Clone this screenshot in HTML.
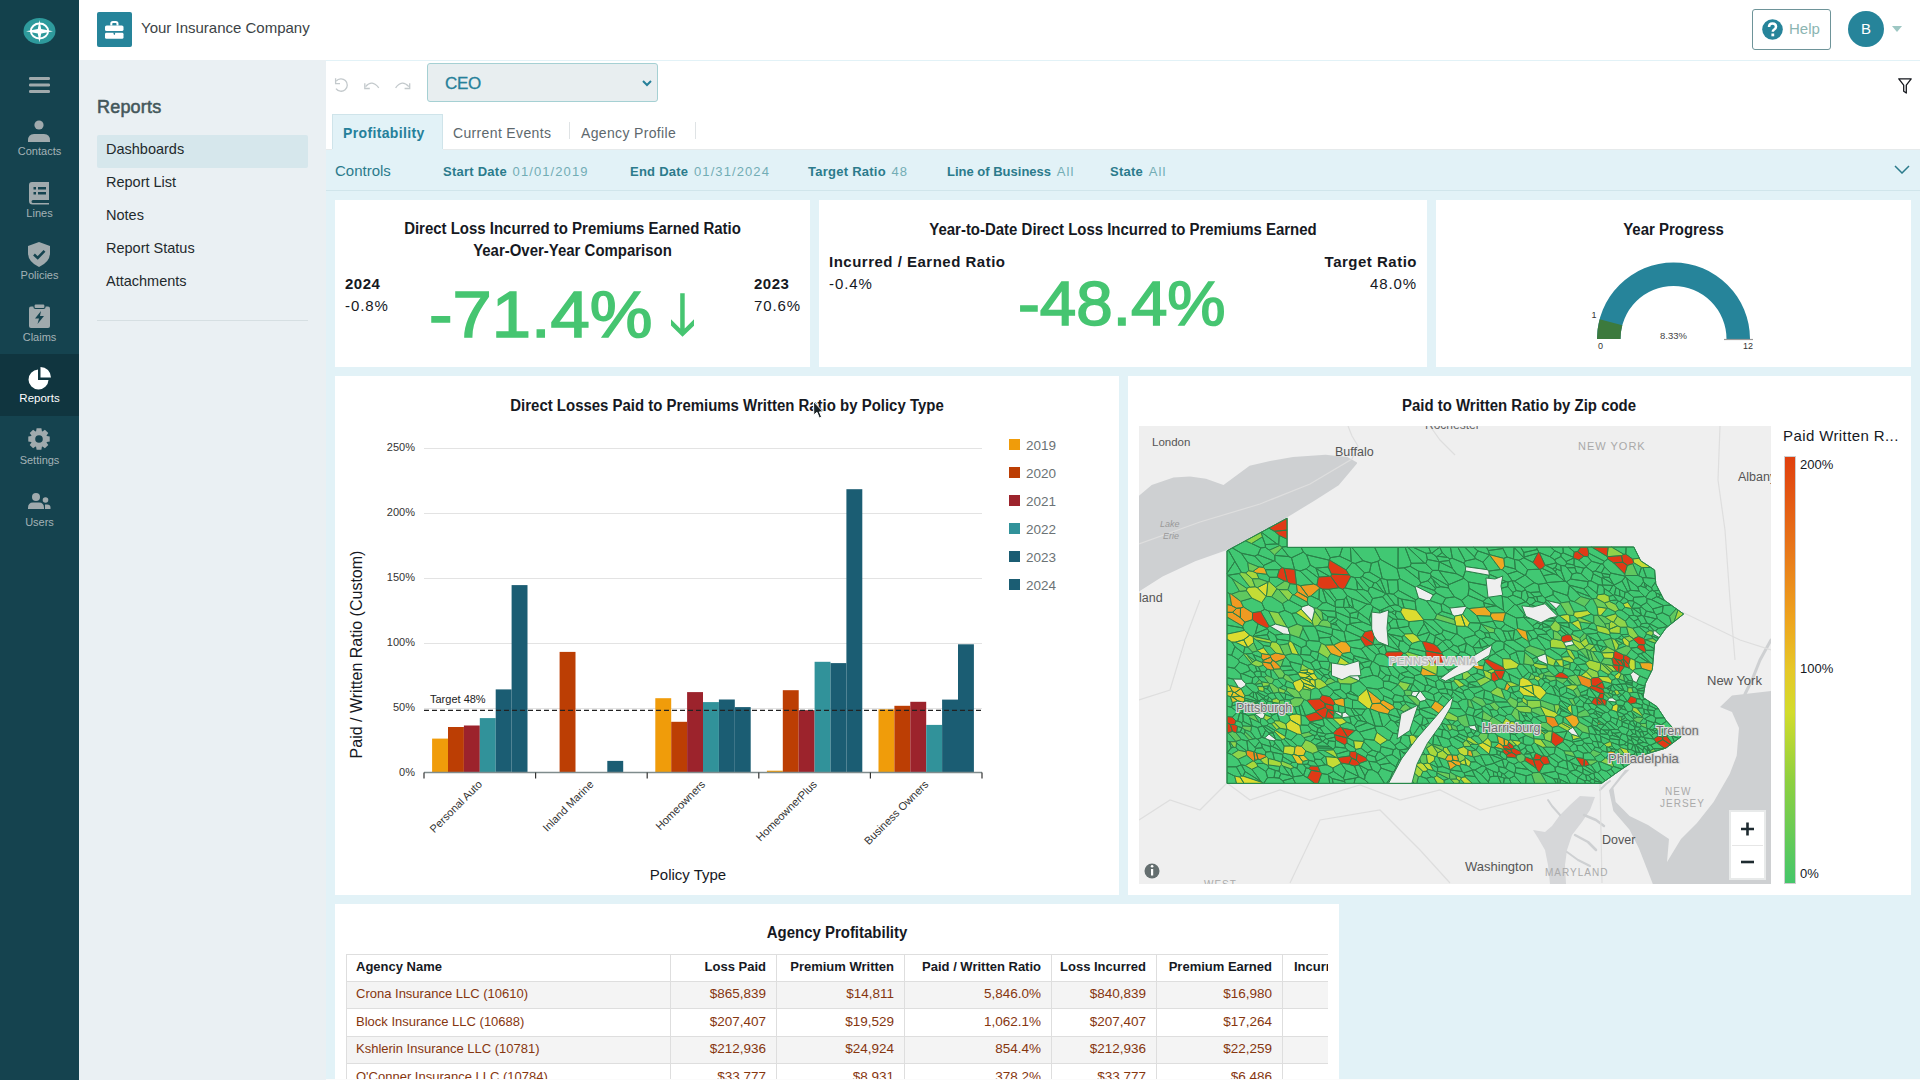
<!DOCTYPE html>
<html><head><meta charset="utf-8">
<style>
*{box-sizing:border-box;margin:0;padding:0}
html,body{width:1920px;height:1080px;overflow:hidden;background:#e2f2f7;font-family:"Liberation Sans",sans-serif;color:#16191f}
.abs{position:absolute}
#side{left:0;top:0;width:79px;height:1080px;background:#15434f}
#side .top{left:0;top:0;width:79px;height:60px;background:#13414c}
.nav{position:absolute;left:0;width:79px;height:62px;text-align:center;color:#a4b2b6;font-size:11px}
.nav.act{background:#10353f;color:#fff}
.nav svg{position:absolute;left:27px;top:8px}
.nav span{position:absolute;left:0;right:0;top:34px}
#hdr{left:79px;top:0;width:1841px;height:61px;background:#fff;border-bottom:1px solid #e3e8ea}
#lnav{left:79px;top:60px;width:247px;height:1020px;background:#eaf0f3}
#main{left:326px;top:60px;width:1594px;height:1020px;background:#e2f2f7}
.lnk{left:27px;font-size:14.5px;color:#1f2a2d}
.tab{font-size:14px;letter-spacing:0.35px;margin-top:1px}
.ctl{top:104px;font-size:13px;color:#2b7b8c;white-space:nowrap}
.ctl b{letter-spacing:0.25px}
.ctl span{color:#72adb5;margin-left:2px;letter-spacing:1.1px}
.kb{font-weight:bold;font-size:15px;color:#16191f;white-space:nowrap;letter-spacing:0.5px}
.kv{font-size:15px;color:#16191f;white-space:nowrap;letter-spacing:0.9px}
.big{color:#46c571;white-space:nowrap;line-height:1}
.lgl{left:672px;font-size:13px;color:#16191f}
.th{font-size:13px;font-weight:bold;color:#16191f;white-space:nowrap}
.td{font-size:13.5px;color:#86360f;white-space:nowrap}
.td.nm{color:#86360f;font-size:13px}
.card{position:absolute;background:#fff}
.ttl{font-weight:bold;font-size:16px;text-align:center;color:#16191f;transform:scaleX(0.935);transform-origin:50% 0}
</style></head>
<body>
<div id="side" class="abs">
  <div class="top abs"></div>
  <svg class="abs" style="left:0;top:0" width="79" height="60" viewBox="0 0 79 60">
    <ellipse cx="39.5" cy="31" rx="16" ry="13" fill="#2e9a9c"/>
    <ellipse cx="39.5" cy="31" rx="8.6" ry="7.6" fill="none" stroke="#fff" stroke-width="2"/>
    <path d="M39.5 20 L41.2 29 L53 31.3 L41.2 33.5 L39.5 42.5 L37.8 33.5 L26 31.3 L37.8 29 Z" fill="#fff"/>
  </svg>
  <svg class="abs" style="left:29px;top:77px" width="21" height="16" viewBox="0 0 21 16">
    <rect x="0" y="0" width="21" height="3" rx="1.2" fill="#a0aaad"/>
    <rect x="0" y="6.5" width="21" height="3" rx="1.2" fill="#a0aaad"/>
    <rect x="0" y="13" width="21" height="3" rx="1.2" fill="#a0aaad"/>
  </svg>
  <div class="nav" style="top:116px">
    <svg style="left:28px;top:4px" width="22" height="23" viewBox="0 0 22 23"><circle cx="11" cy="5" r="4.6" fill="#a0aaad"/><path d="M0 20.5 Q0 14 6 14 L16 14 Q22 14 22 20.5 L22 22 L0 22 Z" fill="#a0aaad"/></svg>
    <span style="top:29px">Contacts</span>
  </div>
  <div class="nav" style="top:178px">
    <svg style="left:29px;top:4px" width="21" height="23" viewBox="0 0 21 23"><path d="M3 0 H20 V18 H4 Q2.5 18 2.5 19.5 Q2.5 21 4 21 H20 V22.5 H3.5 Q0 22.5 0 19 V3 Q0 0 3 0 Z" fill="#a0aaad"/><rect x="4.5" y="5" width="2.5" height="2.5" fill="#15434f"/><rect x="9" y="5" width="8" height="2.5" fill="#15434f"/><rect x="4.5" y="10" width="2.5" height="2.5" fill="#15434f"/><rect x="9" y="10" width="8" height="2.5" fill="#15434f"/></svg>
    <span style="top:29px">Lines</span>
  </div>
  <div class="nav" style="top:240px">
    <svg style="left:28px;top:2px" width="22" height="25" viewBox="0 0 22 25"><path d="M11 0 L22 4 V11 Q22 20 11 25 Q0 20 0 11 V4 Z" fill="#a0aaad"/><path d="M6 12.5 L9.7 16 L16.5 8.8" fill="none" stroke="#15434f" stroke-width="2.6"/></svg>
    <span style="top:29px">Policies</span>
  </div>
  <div class="nav" style="top:302px">
    <svg style="left:29px;top:2px" width="21" height="24" viewBox="0 0 21 24"><rect x="0" y="2.5" width="21" height="21.5" rx="2" fill="#a0aaad"/><rect x="5" y="0" width="11" height="4.5" rx="1.5" fill="#a0aaad" stroke="#15434f" stroke-width="1.2"/><path d="M12 7 L6 14.5 H10 L8.5 20 L15 12 H11 Z" fill="#15434f"/></svg>
    <span style="top:29px">Claims</span>
  </div>
  <div class="nav act" style="top:354px">
    <svg style="left:28px;top:13px" width="23" height="23" viewBox="0 0 23 23"><path d="M10 2.5 A10 10 0 1 0 20.5 13 L10 13 Z" fill="#fff"/><path d="M12.5 0 A10.5 10.5 0 0 1 23 10.5 L12.5 10.5 Z" fill="#fff"/></svg>
    <span style="top:38px;font-size:11.5px">Reports</span>
  </div>
  <div class="nav" style="top:416px">
    <svg style="left:28px;top:12px" width="22" height="22" viewBox="0 0 22 22"><path fill="#a0aaad" fill-rule="evenodd" d="M18.77 8.08 L21.73 8.60 L21.73 13.40 L18.77 13.92 L18.56 14.43 L20.29 16.89 L16.89 20.29 L14.43 18.56 L13.92 18.77 L13.40 21.73 L8.60 21.73 L8.08 18.77 L7.57 18.56 L5.11 20.29 L1.71 16.89 L3.44 14.43 L3.23 13.92 L0.27 13.40 L0.27 8.60 L3.23 8.08 L3.44 7.57 L1.71 5.11 L5.11 1.71 L7.57 3.44 L8.08 3.23 L8.60 0.27 L13.40 0.27 L13.92 3.23 L14.43 3.44 L16.89 1.71 L20.29 5.11 L18.56 7.57ZM14.8 11 A3.8 3.8 0 1 0 7.2 11 A3.8 3.8 0 1 0 14.8 11Z"/></svg>
    <span style="top:38px">Settings</span>
  </div>
  <div class="nav" style="top:478px">
    <svg style="left:28px;top:15px" width="23" height="17" viewBox="0 0 23 17"><circle cx="8" cy="4" r="4" fill="#a0aaad"/><path d="M0 15 Q0 9.5 5 9.5 H11 Q16 9.5 16 15 V16 H0 Z" fill="#a0aaad"/><circle cx="17.5" cy="7" r="2.8" fill="#a0aaad"/><path d="M17 11.5 H19 Q22.5 11.5 22.5 14.5 V16 H17 Z" fill="#a0aaad"/></svg>
    <span style="top:38px">Users</span>
  </div>
</div>
<div id="hdr" class="abs">
  <svg class="abs" style="left:18px;top:12px" width="35" height="35" viewBox="0 0 35 35"><rect width="35" height="35" rx="2" fill="#26849a"/><path d="M14.3 13.5 V11.8 Q14.3 10 16 10 H18.8 Q20.5 10 20.5 11.8 V13.5" fill="none" stroke="#fff" stroke-width="2"/><rect x="8" y="13.4" width="18.5" height="5.6" rx="1.6" fill="#fff"/><rect x="8" y="20.8" width="18.5" height="6" rx="1.4" fill="#fff"/><path d="M16.2 20.6 H18.4 L17.6 23 H17 Z" fill="#26849a"/></svg>
  <div class="abs" style="left:62px;top:19px;font-size:15px;color:#3b4346">Your Insurance Company</div>
  <div class="abs" style="left:1673px;top:9px;width:79px;height:41px;border:1px solid #6e9499;border-radius:3px"></div>
  <svg class="abs" style="left:1683px;top:19px" width="21" height="21" viewBox="0 0 21 21"><circle cx="10.5" cy="10.5" r="10.3" fill="#26849a"/><path d="M7 8 Q7 4.5 10.5 4.5 Q14 4.5 14 7.8 Q14 9.8 11.8 10.8 Q10.8 11.3 10.8 12.8" fill="none" stroke="#fff" stroke-width="2.5"/><rect x="9.4" y="14.5" width="2.8" height="2.8" fill="#fff"/></svg>
  <div class="abs" style="left:1710px;top:20px;font-size:15px;color:#8bb5b2">Help</div>
  <div class="abs" style="left:1769px;top:11px;width:36px;height:36px;border-radius:50%;background:#26849a;color:#fff;font-size:15px;text-align:center;line-height:36px">B</div>
  <svg class="abs" style="left:1813px;top:26px" width="10" height="6" viewBox="0 0 10 6"><path d="M0 0 H10 L5 6 Z" fill="#9dc7c3"/></svg>
</div>
<div id="lnav" class="abs">
  <div class="abs" style="left:18px;top:37px;font-size:18px;color:#44575a;-webkit-text-stroke:0.55px #44575a;letter-spacing:0.2px">Reports</div>
  <div class="abs" style="left:18px;top:75px;width:211px;height:33px;background:#d6e7ec;border-radius:2px"></div>
  <div class="abs lnk" style="top:81px">Dashboards</div>
  <div class="abs lnk" style="top:114px">Report List</div>
  <div class="abs lnk" style="top:147px">Notes</div>
  <div class="abs lnk" style="top:180px">Report Status</div>
  <div class="abs lnk" style="top:213px">Attachments</div>
  <div class="abs" style="left:18px;top:260px;width:211px;height:1px;background:#d6dfe2"></div>
</div>
<div id="main" class="abs">
  <div class="abs" style="left:0;top:1px;width:1594px;height:88px;background:#fff"></div>
  <svg class="abs" style="left:4px;top:14px" width="90" height="20" viewBox="330 74 90 20"><g fill="none" stroke="#c3c9cc" stroke-width="1.3">
    <path d="M336.2 81.2 A6.2 6.2 0 1 1 336.0 88.6"/><path d="M335.6 78.2 V83.6 H340"/>
    <path d="M365.6 86.6 Q372 79 378.8 87.8"/><path d="M364.8 83.2 V88.5 H369.8"/>
    <path d="M395.6 87.8 Q402 79 408.8 86.6"/><path d="M409.7 83.2 V88.5 H404.6"/>
  </g></svg>
  <div class="abs" style="left:101px;top:3px;width:231px;height:39px;background:#e8eef0;border:1px solid #a5d0d3;border-radius:3px"></div>
  <div class="abs" style="left:119px;top:13.5px;font-size:17px;color:#26809a;-webkit-text-stroke:0.3px #26809a;letter-spacing:-0.3px">CEO</div>
  <svg class="abs" style="left:316px;top:20px" width="10" height="7" viewBox="0 0 10 7"><path d="M1 1 L5 5 L9 1" fill="none" stroke="#26809a" stroke-width="2"/></svg>
  <svg class="abs" style="left:1572px;top:18px" width="14" height="16" viewBox="0 0 14 16"><path d="M0.8 0.8 H13.2 L8.3 7.2 V15 L5.7 13.2 V7.2 Z" fill="none" stroke="#16191f" stroke-width="1.3" stroke-linejoin="round"/></svg>
  <div class="abs" style="left:6px;top:54px;width:111px;height:36px;background:#e2f2f7;border:1px solid #cfe4ea;border-bottom:none"></div>
  <div class="abs tab" style="left:17px;top:64px;font-weight:bold;color:#25809a">Profitability</div>
  <div class="abs tab" style="left:127px;top:64px;color:#5d686d">Current Events</div>
  <div class="abs" style="left:243px;top:62px;width:1px;height:17px;background:#dfe3e5"></div>
  <div class="abs tab" style="left:255px;top:64px;color:#5d686d">Agency Profile</div>
  <div class="abs" style="left:369px;top:62px;width:1px;height:17px;background:#dfe3e5"></div>
  <div class="abs" style="left:0;top:89px;width:1594px;height:42px;background:#e2f2f7;border-bottom:1px solid #d0e5eb"></div>
  <div class="abs" style="left:0;top:89px;width:6px;height:1px;background:#e6eaeb"></div>
  <div class="abs" style="left:117px;top:89px;width:1477px;height:1px;background:#e6eaeb"></div>
  <div class="abs" style="left:9px;top:102px;font-size:15px;color:#2b7b8c">Controls</div>
  <div class="abs ctl" style="left:117px"><b>Start Date</b> <span>01/01/2019</span></div>
  <div class="abs ctl" style="left:304px"><b>End Date</b> <span>01/31/2024</span></div>
  <div class="abs ctl" style="left:482px"><b>Target Ratio</b> <span>48</span></div>
  <div class="abs ctl" style="left:621px"><b style="letter-spacing:0">Line of Business</b> <span>All</span></div>
  <div class="abs ctl" style="left:784px"><b>State</b> <span>All</span></div>
  <svg class="abs" style="left:1568px;top:105px" width="16" height="9" viewBox="0 0 16 9"><path d="M1 1 L8 8 L15 1" fill="none" stroke="#2b7b8c" stroke-width="1.5"/></svg>
</div>

<div class="card" style="left:335px;top:200px;width:475px;height:167px">
  <div class="abs ttl" style="left:0;top:18px;width:475px;line-height:22px">Direct Loss Incurred to Premiums Earned Ratio<br>Year-Over-Year Comparison</div>
  <div class="abs kb" style="left:10px;top:75px">2024</div>
  <div class="abs kv" style="left:10px;top:97px">-0.8%</div>
  <div class="abs big" style="left:94px;top:82px;font-size:65px;-webkit-text-stroke:1.6px #46c571;transform:scaleX(1.085);transform-origin:0 0">-71.4%</div>
  <svg class="abs" style="left:0;top:0" width="475" height="167"><path d="M336 119.2 L345.2 128.4 L345.2 93.3 L349.7 93.3 L349.7 128.4 L359 119.2 L359 125.7 L347.5 136.7 L336 125.4 Z" fill="#46c571"/></svg>
  <div class="abs kb" style="left:419px;top:75px">2023</div>
  <div class="abs kv" style="left:419px;top:97px">70.6%</div>
</div>
<div class="card" style="left:819px;top:200px;width:608px;height:167px">
  <div class="abs ttl" style="left:0;top:20.5px;width:608px">Year-to-Date Direct Loss Incurred to Premiums Earned</div>
  <div class="abs kb" style="left:10px;top:53px">Incurred / Earned Ratio</div>
  <div class="abs kv" style="left:10px;top:75px">-0.4%</div>
  <div class="abs big" style="left:199px;top:72px;font-size:63px;-webkit-text-stroke:1.6px #46c571;transform:scaleX(1.04);transform-origin:0 0">-48.4%</div>
  <div class="abs kb" style="right:10px;top:53px;text-align:right">Target Ratio</div>
  <div class="abs kv" style="right:10px;top:75px;text-align:right">48.0%</div>
</div>
<div class="card" style="left:1436px;top:200px;width:475px;height:167px">
  <div class="abs ttl" style="left:0;top:20.5px;width:475px">Year Progress</div>
  <svg class="abs" style="left:0;top:0" width="475" height="167" viewBox="0 0 475 167">
    <path d="M161 139 A76.5 76.5 0 0 1 314 139 L290.5 139 A53 53 0 0 0 184.5 139 Z" fill="#26849a"/>
    <path d="M161 139 A76.5 76.5 0 0 1 163.6 119.2 L186.3 125.3 A53 53 0 0 0 184.5 139 Z" fill="#3c7a3d"/>
    <line x1="288" y1="139.5" x2="317" y2="139.5" stroke="#999" stroke-width="1.2"/>
    <text x="155.5" y="118" font-size="9" fill="#333" font-family="Liberation Sans">1</text>
    <text x="162" y="149" font-size="9" fill="#333" font-family="Liberation Sans">0</text>
    <text x="307" y="149" font-size="9" fill="#333" font-family="Liberation Sans">12</text>
    <text x="237.5" y="139" font-size="9.5" fill="#444" text-anchor="middle" font-family="Liberation Sans">8.33%</text>
  </svg>
</div>
<!--BAR-->
<div class="card" style="left:335px;top:376px;width:784px;height:519px">
  <div class="abs ttl" style="left:0;top:20.5px;width:784px">Direct Losses Paid to Premiums Written Ratio by Policy Type</div>
<svg class="abs" style="left:0;top:0" width="784" height="519" viewBox="0 0 784 519" font-family="Liberation Sans">
<line x1="89" y1="72.5" x2="647" y2="72.5" stroke="#e3e3e3" stroke-width="1"/>
<line x1="89" y1="137.5" x2="647" y2="137.5" stroke="#e3e3e3" stroke-width="1"/>
<line x1="89" y1="202.5" x2="647" y2="202.5" stroke="#e3e3e3" stroke-width="1"/>
<line x1="89" y1="267.5" x2="647" y2="267.5" stroke="#e3e3e3" stroke-width="1"/>
<line x1="89" y1="332.5" x2="647" y2="332.5" stroke="#e3e3e3" stroke-width="1"/>
<text x="80" y="75.0" font-size="11" fill="#333" text-anchor="end">250%</text>
<text x="80" y="140.0" font-size="11" fill="#333" text-anchor="end">200%</text>
<text x="80" y="205.0" font-size="11" fill="#333" text-anchor="end">150%</text>
<text x="80" y="270.0" font-size="11" fill="#333" text-anchor="end">100%</text>
<text x="80" y="335.0" font-size="11" fill="#333" text-anchor="end">50%</text>
<text x="80" y="400.0" font-size="11" fill="#333" text-anchor="end">0%</text>
<rect x="97.1" y="362.6" width="15.9" height="33.4" fill="#f09c0a"/>
<rect x="113.0" y="351.0" width="15.9" height="45.0" fill="#bc3e04"/>
<rect x="128.9" y="349.5" width="15.9" height="46.5" fill="#9c232c"/>
<rect x="144.8" y="342.1" width="15.9" height="54.0" fill="#31929a"/>
<rect x="160.7" y="313.4" width="15.9" height="82.5" fill="#1b5d73"/>
<rect x="176.6" y="209.1" width="15.9" height="186.9" fill="#1b5d73"/>
<rect x="224.6" y="275.9" width="15.9" height="120.1" fill="#bc3e04"/>
<rect x="272.3" y="384.9" width="15.9" height="11.1" fill="#1b5d73"/>
<rect x="320.3" y="322.2" width="15.9" height="73.8" fill="#f09c0a"/>
<rect x="336.2" y="345.8" width="15.9" height="50.2" fill="#bc3e04"/>
<rect x="352.1" y="316.1" width="15.9" height="80.0" fill="#9c232c"/>
<rect x="368.0" y="326.1" width="15.9" height="69.9" fill="#31929a"/>
<rect x="383.9" y="323.5" width="15.9" height="72.5" fill="#1b5d73"/>
<rect x="399.8" y="331.1" width="15.9" height="64.9" fill="#1b5d73"/>
<rect x="431.9" y="394.7" width="15.9" height="1.3" fill="#f09c0a"/>
<rect x="447.8" y="314.2" width="15.9" height="81.8" fill="#bc3e04"/>
<rect x="463.7" y="334.2" width="15.9" height="61.8" fill="#9c232c"/>
<rect x="479.6" y="285.8" width="15.9" height="110.2" fill="#31929a"/>
<rect x="495.5" y="287.1" width="15.9" height="108.9" fill="#1b5d73"/>
<rect x="511.4" y="113.2" width="15.9" height="282.8" fill="#1b5d73"/>
<rect x="543.5" y="333.3" width="15.9" height="62.7" fill="#f09c0a"/>
<rect x="559.4" y="329.8" width="15.9" height="66.2" fill="#bc3e04"/>
<rect x="575.3" y="325.8" width="15.9" height="70.2" fill="#9c232c"/>
<rect x="591.2" y="348.9" width="15.9" height="47.1" fill="#31929a"/>
<rect x="607.1" y="323.6" width="15.9" height="72.4" fill="#1b5d73"/>
<rect x="623.0" y="268.3" width="15.9" height="127.7" fill="#1b5d73"/>
<line x1="89" y1="334.3" x2="647" y2="334.3" stroke="#222" stroke-width="1.2" stroke-dasharray="5,3"/>
<text x="95" y="327.3" font-size="11" fill="#222">Target 48%</text>
<line x1="89" y1="396.6" x2="647" y2="396.6" stroke="#7f8c8d" stroke-width="1.5"/>
<line x1="89.0" y1="396.6" x2="89.0" y2="402.6" stroke="#333" stroke-width="1.2"/>
<line x1="200.6" y1="396.6" x2="200.6" y2="402.6" stroke="#333" stroke-width="1.2"/>
<line x1="312.2" y1="396.6" x2="312.2" y2="402.6" stroke="#333" stroke-width="1.2"/>
<line x1="423.8" y1="396.6" x2="423.8" y2="402.6" stroke="#333" stroke-width="1.2"/>
<line x1="535.4" y1="396.6" x2="535.4" y2="402.6" stroke="#333" stroke-width="1.2"/>
<line x1="647.0" y1="396.6" x2="647.0" y2="402.6" stroke="#333" stroke-width="1.2"/>
<text transform="translate(147.8,409) rotate(-45)" font-size="11" fill="#333" text-anchor="end">Personal Auto</text>
<text transform="translate(259.4,409) rotate(-45)" font-size="11" fill="#333" text-anchor="end">Inland Marine</text>
<text transform="translate(371.0,409) rotate(-45)" font-size="11" fill="#333" text-anchor="end">Homeowners</text>
<text transform="translate(482.6,409) rotate(-45)" font-size="11" fill="#333" text-anchor="end">HomeownerPlus</text>
<text transform="translate(594.2,409) rotate(-45)" font-size="11" fill="#333" text-anchor="end">Business Owners</text>
<rect x="674" y="63.0" width="11" height="11" fill="#f09c0a"/>
<text x="691" y="73.5" font-size="13.5" fill="#6b7275">2019</text>
<rect x="674" y="91.0" width="11" height="11" fill="#bc3e04"/>
<text x="691" y="101.5" font-size="13.5" fill="#6b7275">2020</text>
<rect x="674" y="119.0" width="11" height="11" fill="#9c232c"/>
<text x="691" y="129.5" font-size="13.5" fill="#6b7275">2021</text>
<rect x="674" y="147.0" width="11" height="11" fill="#31929a"/>
<text x="691" y="157.5" font-size="13.5" fill="#6b7275">2022</text>
<rect x="674" y="175.0" width="11" height="11" fill="#1b5d73"/>
<text x="691" y="185.5" font-size="13.5" fill="#6b7275">2023</text>
<rect x="674" y="203.0" width="11" height="11" fill="#1b5d73"/>
<text x="691" y="213.5" font-size="13.5" fill="#6b7275">2024</text>
<text transform="translate(27,278.5) rotate(-90)" font-size="16" fill="#16191f" text-anchor="middle">Paid / Written Ratio (Custom)</text>
<text x="353" y="504" font-size="15" fill="#16191f" text-anchor="middle">Policy Type</text>
</svg>
</div>
<!--/BAR-->
<!--MAP-->
<div class="card" style="left:1128px;top:376px;width:783px;height:519px">
  <div class="abs ttl" style="left:0;top:20.5px;width:782px">Paid to Written Ratio by Zip code</div>
<svg class="abs" style="left:11px;top:50px" width="632" height="458" viewBox="0 0 632 458" font-family="Liberation Sans">
<defs><clipPath id="pac"><polygon points="88.0,124.8 148.1,92.2 148.1,121.4 494.8,121.0 501.7,134.8 515.6,144.0 516.8,158.0 525.0,174.0 544.6,188.0 527.0,202.0 515.6,218.0 513.3,243.6 506.4,257.5 504.0,271.4 518.0,280.7 527.0,294.5 542.0,310.8 527.0,322.0 504.0,329.0 483.0,343.0 462.4,357.4 88.0,357.4"/></clipPath></defs>
<rect width="632" height="458" fill="#efefef"/>
<polygon points="-0.3,70.0 12.7,59.0 34.5,51.6 51.0,50.5 67.0,52.7 84.5,59.0 110.6,39.7 131.0,35.0 154.0,31.0 186.6,28.8 208.4,31.0 218.0,36.4 218.0,37.5 199.7,59.2 175.8,74.4 147.5,91.8 112.7,115.7 86.6,124.4 56.2,135.3 23.6,150.5 -0.3,165.7" fill="#ced0d2"/>
<polygon points="632.0,265.0 593.0,269.6 581.0,281.0 593.0,286.0 600.0,302.0 597.7,329.8 590.7,348.0 574.6,376.0 558.0,397.0 542.0,413.0 528.0,436.0 530.0,413.0 509.0,399.0 490.6,390.0 476.7,376.0 474.4,362.0 483.8,350.6 490.6,343.6 486.0,344.0 470.0,364.5 474.4,385.0 490.6,403.8 500.0,422.5 509.0,445.5 513.8,458.0 632.0,458.0" fill="#ced0d2"/>
<polygon points="456.0,371.0 451.0,384.0 443.0,396.0 433.0,409.0 428.0,424.0 426.0,439.0 427.0,458.0 411.0,458.0 409.0,439.0 406.0,424.0 399.0,412.0 394.0,404.0 406.0,406.0 413.0,400.0 421.0,389.0 431.0,379.0 441.0,370.0" fill="#d6d7d9"/>
<polyline points="445.0,389.0 457.0,394.0 465.0,400.0" fill="none" stroke="#ced0d2" stroke-width="2.5" stroke-linejoin="round" stroke-linecap="round"/>
<polyline points="436.0,409.0 449.0,416.0 457.0,424.0" fill="none" stroke="#ced0d2" stroke-width="2.5" stroke-linejoin="round" stroke-linecap="round"/>
<polyline points="428.0,426.0 439.0,434.0 451.0,440.0" fill="none" stroke="#ced0d2" stroke-width="2" stroke-linejoin="round" stroke-linecap="round"/>
<polyline points="421.0,389.0 413.0,380.0 409.0,374.0" fill="none" stroke="#ced0d2" stroke-width="2" stroke-linejoin="round" stroke-linecap="round"/>
<polyline points="461.0,364.0 467.0,358.0 471.0,355.0" fill="none" stroke="#ced0d2" stroke-width="2" stroke-linejoin="round" stroke-linecap="round"/>
<polyline points="632.0,214.0 621.0,234.0 613.0,254.0 606.0,268.0" fill="none" stroke="#ced0d2" stroke-width="3" stroke-linejoin="round" stroke-linecap="round"/>
<polyline points="0.0,274.0 31.0,264.0 46.0,214.0 61.0,174.0" fill="none" stroke="#dedede" stroke-width="1.2"/>
<polyline points="88.0,357.0 111.0,374.0 141.0,364.0 171.0,374.0 221.0,359.0 261.0,374.0 301.0,364.0 341.0,384.0 381.0,374.0 421.0,364.0" fill="none" stroke="#dedede" stroke-width="1.2"/>
<polyline points="151.0,457.0 181.0,394.0 241.0,384.0 281.0,424.0 311.0,457.0" fill="none" stroke="#dedede" stroke-width="1.2"/>
<polyline points="0.0,394.0 31.0,374.0 61.0,384.0 88.0,357.0" fill="none" stroke="#dedede" stroke-width="1.2"/>
<polyline points="461.0,357.0 463.0,457.0" fill="none" stroke="#dedede" stroke-width="1.2"/>
<polyline points="543.0,186.0 601.0,214.0 632.0,224.0" fill="none" stroke="#dedede" stroke-width="1.2"/>
<polyline points="581.0,0.0 579.0,54.0 586.0,104.0 591.0,174.0 596.0,234.0" fill="none" stroke="#dedede" stroke-width="1.2"/>
<polyline points="291.0,0.0 301.0,14.0 316.0,29.0" fill="none" stroke="#dedede" stroke-width="1.2"/>
<polyline points="0.0,118.0 61.0,96.0 121.0,78.0 171.0,58.0 213.0,33.0 219.0,20.0 213.0,10.0 209.0,0.0" fill="none" stroke="#dedede" stroke-width="1.2"/>
<g stroke="#2a8048" stroke-width="1" stroke-linejoin="round">
<path d="M400.8 165.8 399.4 158.3 395.3 156.7 385.5 162.0 386.2 164.1 387.4 165.1 391.1 166.5ZM452.7 276.0 455.3 272.1 449.6 270.6 449.6 272.8ZM244.4 255.2 249.8 255.3 250.9 249.6 247.3 249.1 242.9 253.4ZM306.7 172.0 315.5 170.9 309.4 161.9 301.8 160.7 297.4 161.7 296.4 162.2 295.6 164.6 297.3 167.1ZM506.9 206.7 500.1 200.8 499.1 200.8 493.6 202.3 499.5 210.4 504.9 212.6 507.5 208.0ZM406.4 175.9 404.6 177.1 404.1 183.5 413.2 182.9ZM138.7 286.3 138.7 286.3 138.1 287.2 140.7 295.0 146.9 298.0 151.5 294.0 150.0 289.7 146.3 287.4 143.3 286.8ZM445.0 339.8 443.0 340.2 443.9 342.6 452.8 347.5 454.8 347.2 456.1 346.4 446.4 340.2ZM274.6 338.7 274.7 337.8 271.7 335.8 269.4 335.5 262.4 342.9 263.4 343.4ZM504.3 277.5 503.1 279.1 503.3 282.0 504.8 283.1 508.3 284.0 508.8 283.9 509.1 279.5ZM201.4 263.3 201.4 257.6 199.2 256.0 196.7 255.6 187.8 258.9 188.0 259.7 194.2 264.5ZM126.2 329.0 127.3 330.6 129.3 332.5 135.4 333.9 133.7 326.3 131.7 325.6 126.9 326.0ZM287.5 322.0 283.5 319.6 280.7 322.0 280.9 322.3 286.2 328.5 287.3 328.7 290.7 328.4ZM414.6 239.9 420.8 239.8 416.8 234.5ZM427.9 254.2 423.8 257.7 426.5 260.2 426.6 260.2 432.5 258.9ZM507.5 208.0 504.9 212.6 505.6 213.5 506.4 213.6 513.9 212.6 512.5 209.8 512.3 209.6ZM368.8 276.0 368.1 274.7 365.9 273.0 353.3 268.1 355.3 275.6 355.4 275.9ZM291.0 357.4 298.3 357.4 294.9 351.5 292.3 350.9 287.3 352.4ZM303.8 177.6 310.8 182.1 326.3 180.4 322.5 174.3 315.5 170.9 306.7 172.0ZM366.1 198.2 364.3 195.6 354.3 194.4 354.2 195.2 357.7 201.8 361.5 203.0ZM519.3 310.0 523.5 311.5 524.8 310.7 520.8 307.9 518.4 307.8 518.3 307.8ZM97.6 306.3 96.8 306.6 102.4 313.5 107.9 314.9 109.2 314.5 110.1 313.8 105.2 308.2 101.3 306.0ZM373.0 154.7 373.1 154.6 368.6 148.1 363.3 143.7 361.5 143.5 349.7 145.1 350.3 148.2 367.2 155.6 369.0 156.1ZM341.3 329.4 346.6 339.4 355.2 337.3 355.2 336.9 350.6 328.9 350.3 328.6 341.6 328.7ZM439.1 351.5 430.9 346.2 427.3 349.4 431.3 357.4 437.4 357.4 439.1 351.6ZM393.5 213.0 388.1 205.1 387.1 205.1 389.4 215.4 389.7 215.7ZM459.3 335.9 462.2 343.6 467.4 345.3 472.0 343.1 473.5 340.7 461.9 335.8ZM401.7 198.4 399.0 202.6 402.5 203.3 404.4 201.3 403.2 198.0ZM463.1 159.2 465.2 162.5 470.3 165.7 473.8 159.4 463.6 159.0ZM135.0 351.6 128.6 351.6 124.6 357.4 145.4 357.4 143.8 354.7 140.0 352.1ZM455.3 331.3 456.9 334.1 458.4 335.3 459.3 335.9 461.9 335.8 466.3 332.1 461.7 327.9ZM368.3 264.8 371.6 266.7 373.6 266.9 374.5 266.4 372.1 260.8 371.1 260.5ZM160.6 229.1 164.1 234.1 171.9 236.9 176.9 234.0 171.2 229.2 161.8 228.4ZM306.2 333.4 299.4 331.3 303.7 340.6 311.2 343.7 311.2 343.7 308.5 335.0ZM188.9 190.7 197.0 191.5 197.2 191.5 196.8 185.9 196.5 185.3 180.9 184.1 183.0 186.3ZM428.1 305.3 424.8 312.8 425.0 313.0 433.0 315.5 433.8 313.7 432.7 308.2 428.7 304.9 428.3 304.9ZM420.0 352.5 421.2 353.4 429.3 357.4 431.3 357.4 427.3 349.4 419.0 347.3ZM394.8 312.7 395.0 312.8 401.9 313.4 405.7 313.6 404.9 308.5 398.0 303.7 396.0 302.8 394.1 304.7ZM320.1 307.8 317.6 309.9 326.7 314.6 327.3 314.4 327.5 314.0 328.4 311.4ZM304.5 256.2 299.8 253.6 296.5 255.8 297.4 261.8 299.4 263.6 306.6 262.6ZM491.5 164.3 488.7 165.6 488.4 166.1 494.6 171.3 505.6 170.5 500.0 165.0ZM245.5 357.4 247.5 357.4 251.6 351.9 253.7 346.1 242.2 342.1 238.9 347.0ZM209.9 338.2 202.1 337.0 202.0 337.4 207.0 344.4 219.5 350.5 215.5 340.0ZM234.3 235.6 237.5 228.6 227.2 220.3 226.3 220.1 222.2 223.0 229.7 233.6 231.2 234.6 233.2 235.5ZM179.3 151.9 167.2 142.8 161.1 145.0 174.7 158.1 177.9 159.3ZM308.9 267.9 307.8 263.1 306.6 262.6 299.4 263.6 299.9 265.9 301.3 267.1ZM417.6 143.1 416.3 145.7 418.6 149.3 425.7 155.2 426.2 155.3 422.2 144.9ZM234.1 180.8 231.5 178.3 228.1 178.1 219.0 185.4 219.0 185.6 219.5 186.2 230.0 194.0ZM449.4 349.3 452.8 347.5 443.9 342.6 443.8 347.5 446.8 349.0ZM296.0 192.8 294.1 193.8 304.3 203.9 316.9 208.1 318.1 208.0 317.6 200.0 316.5 198.8ZM429.1 284.1 419.7 278.7 420.8 281.2 421.4 282.0 427.5 286.1 432.8 288.8 433.3 288.7 433.2 288.5ZM211.2 325.5 216.2 325.6 216.8 323.3 215.7 321.8 208.0 317.1 205.6 318.7 206.6 322.1 209.4 324.6ZM367.6 214.4 372.9 214.2 369.0 205.3 363.9 204.9ZM507.8 302.2 508.3 302.7 510.0 302.7 510.2 302.7 514.8 297.9 514.6 296.7 507.6 294.2 507.2 297.4ZM188.9 190.7 183.0 186.3 184.2 194.0 188.4 194.4ZM401.5 289.7 392.3 285.4 391.8 286.9 394.4 290.8 396.1 291.4ZM217.5 304.3 220.3 306.1 235.9 301.9 236.2 300.1 236.1 300.0 228.4 296.7 216.2 301.4ZM128.1 202.1 119.0 197.8 116.3 207.6 128.3 202.6ZM286.7 215.7 294.7 218.1 296.4 210.7 295.5 209.6 291.1 207.1ZM183.9 250.4 181.7 253.5 185.9 256.8 189.1 252.7 184.6 250.0ZM355.5 276.1 360.3 281.2 361.5 281.5 372.4 280.1 368.8 276.0 355.4 275.9ZM366.1 198.2 361.5 203.0 363.9 204.9 369.0 205.3 375.4 204.4 376.5 203.6ZM124.0 272.6 119.3 275.2 127.6 279.0 127.7 276.7ZM377.4 203.5 378.7 202.5 377.3 191.9 367.0 186.9 366.5 186.8 364.3 195.6 366.1 198.2 376.5 203.6ZM421.3 200.1 421.2 204.1 427.5 208.7 430.4 208.9ZM377.3 191.9 378.7 202.5 387.1 205.1 388.1 205.1 394.8 204.2 395.2 202.4 393.5 199.9 384.6 191.4ZM375.4 204.4 374.0 214.2 374.9 214.6 383.1 211.2 377.4 203.5 376.5 203.6ZM214.9 231.7 214.8 229.7 211.5 226.1 203.4 227.4 202.4 229.3 214.3 234.3ZM438.3 270.8 437.6 270.8 433.9 272.8 436.5 278.7 441.1 273.3 439.2 271.0ZM209.7 177.7 207.1 171.1 205.3 173.3 204.5 181.4 204.7 181.5 210.6 181.3ZM150.7 235.6 152.0 240.2 154.7 243.9 159.1 247.1 160.4 246.4 161.5 244.6 162.5 238.6ZM432.4 279.4 433.8 279.0 429.2 272.6 421.5 269.9 420.1 270.6 421.5 274.3 431.2 279.0ZM492.3 311.5 498.7 315.4 499.8 312.5 499.8 311.3 499.7 311.2 491.4 310.4ZM493.6 287.0 498.3 291.2 503.7 291.5 503.4 290.6 493.2 284.4 492.1 285.3ZM462.2 290.0 464.2 287.5 456.2 284.7 456.2 285.2 458.0 287.4ZM444.9 162.8 430.2 159.1 430.3 159.5 437.1 165.3 451.0 170.6ZM254.4 323.6 253.1 328.6 260.3 333.7 262.1 333.2 260.3 323.9 257.5 322.5ZM486.8 128.2 487.1 121.0 472.4 121.0 484.8 128.4ZM103.4 247.7 113.7 251.8 116.8 250.2 114.6 246.5 111.4 244.4ZM406.8 205.7 412.2 202.8 411.4 200.9 404.4 201.3 402.5 203.3ZM510.7 165.5 513.5 164.5 512.5 161.8 508.1 159.1 506.6 161.9ZM486.0 166.2 480.4 163.5 480.9 170.2 484.5 171.7 485.2 171.6ZM317.6 309.9 314.0 311.4 323.8 316.9 326.7 314.6ZM252.6 248.9 248.8 241.0 240.5 239.5 241.2 244.0 247.3 249.1 250.9 249.6ZM480.6 311.7 480.8 311.8 482.8 307.6 481.7 306.4 475.0 307.3ZM443.4 314.1 445.1 316.7 446.8 317.3 453.2 317.6 453.9 315.3 450.5 311.3 443.1 313.4ZM390.0 246.1 383.8 251.5 389.3 253.7 392.5 247.7 392.5 247.7ZM360.1 345.2 358.2 346.6 358.9 350.3 359.1 350.4 362.4 351.1 363.0 347.1ZM501.2 200.0 500.1 200.8 506.9 206.7 510.6 204.7 508.5 202.2ZM459.1 271.8 461.2 267.4 450.2 261.6 450.0 261.7 457.5 271.7 457.6 271.8ZM398.9 127.1 399.9 126.3 398.3 123.5 384.8 126.5 385.1 131.1ZM197.5 173.8 189.9 163.2 184.1 163.0 196.1 176.3ZM478.7 285.6 485.1 288.5 488.2 287.6 489.0 285.8 487.1 284.1 482.3 282.7ZM498.5 266.4 494.1 266.4 490.1 266.9 491.7 270.1 497.8 272.7 501.2 273.0 498.7 266.7ZM383.8 251.5 390.0 246.1 383.3 238.4 381.1 238.2 379.9 238.3 377.8 242.0 383.8 251.5ZM509.3 307.2 512.3 309.6 514.5 307.6 510.0 302.7 508.3 302.7 508.2 305.6ZM475.4 265.4 476.7 263.8 473.1 258.4 472.6 258.9 471.6 262.5 471.8 264.5 473.7 265.2ZM398.0 212.0 393.5 213.0 389.7 215.7 391.1 219.8 405.5 224.7 406.9 223.6ZM164.5 349.5 168.4 351.8 172.4 344.3 169.3 342.3 167.1 341.8ZM267.0 242.5 270.5 239.4 272.8 234.0 266.2 227.4 264.6 227.2 257.0 236.5ZM308.1 232.6 305.9 232.1 302.5 238.7 309.0 244.2 321.4 239.8ZM298.6 188.3 315.5 193.6 315.7 190.2 313.2 188.5 303.0 185.4ZM113.0 257.2 106.7 257.6 106.7 259.4 113.9 265.8 114.4 266.0 116.6 266.7 117.4 266.6 118.5 266.2 119.9 264.5 118.5 260.5 116.0 258.4ZM136.6 304.5 146.2 310.4 147.6 303.3 140.8 302.2 137.5 303.5ZM507.4 185.0 515.4 186.9 513.8 182.9 507.8 176.5 501.9 179.8 502.0 180.7ZM510.2 198.0 508.0 197.1 502.3 197.8 501.2 200.0 508.5 202.2 510.7 199.8ZM389.4 215.4 383.1 211.2 374.9 214.6 386.3 222.2 391.1 219.8 389.7 215.7ZM394.4 290.8 391.8 286.9 385.9 286.5 388.5 290.6 392.2 294.2ZM152.0 314.1 158.4 307.9 148.0 303.1 147.6 303.3 146.2 310.4 146.5 311.9ZM206.7 204.6 205.0 205.7 207.1 215.6 221.9 213.5 221.9 211.3ZM521.6 209.6 527.0 202.0 528.6 200.7 519.4 202.3 516.4 205.0ZM505.2 309.8 509.3 307.2 508.2 305.6 503.8 305.4 503.4 305.6ZM507.6 294.2 514.6 296.7 516.1 296.2 516.8 292.1 514.8 290.0 511.9 288.9 505.6 292.8ZM120.0 296.3 121.3 297.0 121.7 292.4 116.5 288.6 115.2 288.8ZM177.2 286.0 176.8 285.0 167.8 274.5 165.1 273.5 162.2 278.4 166.5 289.6ZM297.4 261.8 296.5 255.8 286.3 251.4 289.0 258.9 293.8 260.9ZM387.2 176.0 389.3 171.4 387.4 165.1 386.2 164.1 382.8 165.5 382.4 172.5 386.6 175.8ZM93.2 152.7 88.8 149.3 88.0 149.1 88.0 166.3 90.6 167.6 92.4 168.3 100.6 165.3ZM330.4 340.6 333.4 343.9 335.9 344.0 343.3 339.9 336.9 335.8 332.0 335.9ZM415.8 124.8 422.0 127.7 424.3 126.9 423.9 121.1 411.7 121.1ZM503.9 324.3 504.4 328.1 505.1 328.7 508.6 327.6 508.1 324.4 504.9 321.6ZM399.0 193.8 400.8 193.3 400.7 191.3 399.2 189.1 390.8 185.4 385.3 188.5 384.7 191.2ZM257.2 193.5 259.5 201.9 269.7 200.3 270.0 195.6 266.3 193.7 258.7 193.1ZM450.2 210.7 458.1 215.1 462.2 213.9 458.0 207.3 447.1 208.2 447.4 208.7ZM481.7 306.4 479.3 303.7 476.2 303.4 471.4 303.7 472.8 306.1 475.0 307.3ZM155.4 281.0 157.8 288.1 161.9 289.2 162.0 289.2 160.0 280.0ZM244.9 218.1 240.6 206.3 236.7 204.4 234.1 217.3 234.6 218.5ZM356.9 179.8 346.3 181.4 352.0 187.1 366.3 186.7 364.6 184.3 357.0 179.8ZM292.8 127.2 291.9 127.0 287.1 127.3 288.3 133.4 300.2 135.8 300.2 135.7 297.2 130.5ZM517.3 282.9 519.3 282.7 518.0 280.7 510.3 275.6 510.5 279.7ZM464.4 151.0 470.4 151.4 470.8 148.6 463.0 147.4ZM116.1 321.4 109.2 314.5 107.9 314.9 109.0 324.4 114.8 325.8 115.5 325.9 116.9 322.3ZM215.7 289.7 218.7 289.4 220.2 288.9 214.1 282.5 213.5 282.3 211.8 282.5ZM447.4 141.2 444.9 142.2 442.2 147.7 449.9 154.9 452.1 154.9 454.3 147.8 453.5 145.6ZM502.5 299.9 501.0 297.7 500.5 297.1 498.0 296.2 496.7 300.7 496.7 300.7 500.6 301.2ZM475.8 329.0 470.6 328.4 474.9 333.5 477.9 333.8 478.6 330.4ZM98.5 285.9 92.2 281.2 88.0 280.2 88.0 290.6 93.2 291.2ZM298.0 346.8 297.8 349.8 304.9 354.4 309.6 352.6ZM334.7 331.0 336.9 335.8 343.3 339.9 345.8 340.3 346.6 339.4 341.3 329.4ZM458.4 315.8 460.1 321.9 460.9 322.2 465.0 318.1 462.3 316.2 458.6 315.7ZM131.2 200.3 130.3 200.4 128.1 202.1 128.3 202.6 129.8 205.0 136.2 209.1 144.2 207.9ZM146.8 268.0 155.2 271.1 147.2 264.6 146.9 264.6 144.9 267.2ZM299.7 290.6 299.2 292.4 300.3 295.5 301.6 296.5 307.3 298.8 311.8 298.8 312.0 298.6 308.2 293.5 301.6 288.9ZM351.7 162.1 349.0 159.6 329.3 155.9 330.1 162.2 347.3 172.3 349.8 171.5 354.0 164.4ZM451.9 197.5 448.5 201.9 458.3 204.7 457.1 199.4 454.9 196.9 453.9 197.1ZM302.7 311.0 303.5 303.8 296.3 301.9 295.1 308.4 295.3 308.8 298.1 310.1ZM188.7 232.1 179.9 226.9 178.0 234.3 179.7 235.3 189.7 235.5ZM145.8 248.3 149.0 249.4 159.2 247.9 159.1 247.1 154.7 243.9 143.5 244.8ZM369.7 344.5 375.3 347.0 376.2 346.7 376.7 341.7 375.1 338.3 369.5 335.7 366.5 342.2ZM149.0 249.4 154.9 255.7 161.4 253.2 161.4 251.7 161.3 251.2 159.2 247.9ZM459.4 298.2 458.1 300.2 461.9 303.2 461.9 303.2 465.5 298.9 461.8 298.3ZM179.1 302.2 177.8 306.0 184.9 307.4 180.7 301.7ZM384.1 311.0 387.0 309.4 381.2 305.4 375.8 308.5 379.6 312.9ZM121.3 297.0 123.3 300.0 123.9 300.2 124.7 300.2 128.0 299.6 129.6 297.5 127.6 294.6 124.4 292.3 121.7 292.4ZM321.2 225.7 325.6 226.4 327.4 217.2 327.3 217.2 318.7 220.5ZM418.0 137.5 416.5 141.6 417.6 143.1 422.2 144.9 421.8 139.4ZM306.5 284.6 318.6 291.0 327.1 288.7 327.6 288.3 326.6 286.8 322.3 282.8 306.0 282.0ZM95.9 135.4 89.4 124.1 88.0 124.8 88.0 147.4ZM135.2 296.5 135.7 294.8 132.2 291.6 127.6 294.6 129.6 297.5 132.4 297.6ZM446.4 357.4 452.8 357.4 450.4 355.1 447.7 354.2 445.7 354.8ZM437.4 357.4 446.4 357.4 445.7 354.8 439.1 351.6ZM403.8 247.6 410.1 245.1 408.0 242.3 400.7 242.9 403.5 247.5ZM135.7 294.8 140.7 295.0 138.1 287.2 133.1 289.2 131.9 291.1 132.2 291.6ZM198.0 199.3 196.6 196.4 192.7 197.8ZM345.4 206.8 347.2 211.3 351.3 211.8 349.8 207.0ZM446.9 237.8 447.2 236.3 439.7 231.6 436.4 232.3 434.3 233.6 434.7 236.3 438.2 238.8ZM147.5 278.8 144.4 280.6 145.7 284.2 150.7 281.1 150.7 280.1ZM448.4 272.9 445.9 276.9 449.1 277.8 453.0 277.3 452.7 276.0 449.6 272.8ZM456.3 145.1 462.4 146.9 465.6 140.9 463.7 137.9 461.8 137.9ZM489.9 254.5 494.0 255.0 494.0 255.0 491.4 248.3 485.3 248.9ZM281.1 298.9 281.1 299.0 286.9 308.5 294.8 309.0 295.3 308.8 295.1 308.4 285.0 299.4 282.7 299.0ZM90.9 315.8 90.2 315.7 92.2 321.9 94.7 321.2ZM409.0 174.8 407.2 174.2 406.4 175.9 413.2 182.9 416.5 184.6 417.1 182.8ZM325.9 259.3 320.3 261.2 324.4 264.6 329.7 262.8 329.5 261.5 329.0 260.9ZM225.2 241.7 222.2 237.5 213.7 239.3 213.5 239.7 214.3 242.2 218.0 246.7ZM208.1 169.5 207.1 171.1 209.7 177.7 213.9 181.9 214.4 182.0 212.4 172.1ZM342.0 260.7 344.9 263.7 345.6 264.1 351.6 266.0 358.2 261.3 355.3 255.6 352.4 253.9 341.6 260.0ZM333.9 289.9 336.0 283.9 335.0 282.6 329.3 280.5 326.6 286.8 327.6 288.3ZM436.1 344.0 437.0 344.0 438.8 339.8 432.1 336.6ZM507.9 172.5 512.4 173.6 517.7 170.7 517.2 167.1 515.1 165.1 513.5 164.5 510.7 165.5 506.6 171.1ZM128.0 299.6 124.7 300.2 134.3 306.5 135.7 305.8 136.2 304.6ZM493.7 133.1 500.4 132.2 494.8 121.0 487.1 121.0 486.8 128.2ZM461.8 298.3 465.5 298.9 465.9 298.7 465.9 298.7 459.2 294.2 459.5 296.1ZM120.4 283.1 113.9 281.4 117.0 287.4 124.0 286.5ZM439.2 227.6 449.5 233.2 440.3 223.9 438.1 225.2ZM349.7 357.4 362.1 357.4 359.1 350.4 358.9 350.3 354.7 350.3 351.1 350.8 349.4 356.1ZM189.6 349.6 193.2 352.5 205.6 355.6 205.4 353.9 204.4 352.2 194.5 345.4 188.4 348.5ZM488.6 320.1 489.0 323.3 492.4 323.7 494.5 318.5 489.2 317.0ZM522.4 168.9 519.9 164.0 515.1 165.1 517.2 167.1 521.6 168.7ZM167.6 128.8 190.3 134.2 190.5 134.1 191.2 131.7 185.9 121.4 162.1 121.4 164.4 126.1ZM162.1 299.0 160.8 299.4 162.4 307.7 169.6 306.2 172.5 303.8 168.9 299.3ZM334.9 318.1 331.4 318.6 331.6 320.4 336.9 324.0 339.7 319.4 339.6 318.6ZM133.9 306.9 134.3 306.5 124.7 300.2 123.9 300.2 126.6 304.2 130.2 307.0ZM501.5 160.0 504.5 155.8 503.6 151.6 499.7 149.7 498.9 149.5 486.5 149.5 486.1 150.1 486.3 150.9 487.7 152.3 498.7 161.0ZM365.0 333.0 363.7 333.5 363.3 333.8 365.3 341.8 366.5 342.2 369.5 335.7 367.2 333.4ZM163.4 200.1 163.9 202.1 170.3 214.5 180.2 215.4 180.1 212.0 177.7 204.0 175.3 200.2 175.2 200.2ZM92.8 215.9 95.9 220.7 104.4 227.2 106.0 220.8 96.5 216.1ZM504.7 218.9 506.7 224.3 515.0 224.3 515.2 222.7 506.4 217.6ZM112.6 300.5 111.6 305.7 116.7 312.5 118.8 313.1 122.6 311.5 118.6 301.5 113.1 299.9 113.1 300.0ZM400.7 242.9 396.7 241.3 397.3 246.0 400.0 248.5 403.5 247.5ZM215.9 304.6 217.5 304.3 216.2 301.4 215.1 299.9 212.2 297.7 207.8 296.2 200.9 299.2 201.6 301.1 203.1 302.0ZM368.8 160.6 369.0 156.1 367.2 155.6 351.7 162.1 354.0 164.4 354.0 164.4ZM133.5 320.6 143.4 325.6 136.2 317.3ZM351.4 190.0 337.7 189.5 341.3 197.0 354.2 195.2 354.3 194.4ZM103.5 287.5 102.0 277.6 98.8 278.2 93.0 279.9 92.2 281.2 98.5 285.9 100.7 286.7ZM105.5 275.5 110.1 279.6 112.8 280.5 117.5 277.1 105.5 274.0ZM369.5 335.7 375.1 338.3 379.7 335.7 377.2 331.9 368.0 331.0 367.2 333.4ZM384.4 271.9 387.9 274.4 401.2 274.5 401.3 274.0 401.2 273.7 397.4 271.1 384.4 269.3ZM235.9 301.9 237.8 306.3 248.5 314.0 250.6 314.5 254.2 307.0 245.3 300.6 243.7 300.4 236.2 300.1ZM505.9 260.2 506.4 257.5 508.5 253.2 500.7 249.8 497.5 256.6 499.3 258.1ZM196.3 278.0 193.9 279.5 194.9 285.0 195.1 285.2 199.7 286.0 199.6 279.3ZM414.0 164.6 407.5 157.1 399.4 158.3 400.8 165.8 403.4 169.7 406.0 171.9 414.1 168.6ZM236.3 331.0 238.9 326.0 233.5 324.1 228.5 327.0 228.5 328.4ZM500.8 326.5 504.4 328.1 503.9 324.3 497.7 319.8ZM486.0 166.2 485.2 171.6 489.2 174.5 494.1 174.9 494.6 171.3 488.4 166.1ZM260.9 276.1 265.2 274.8 263.7 270.4 255.6 268.5 253.5 273.4 254.6 276.0ZM317.5 300.6 318.9 304.9 318.9 305.0 325.2 303.7 325.7 300.7 322.1 298.3ZM127.9 148.2 130.5 151.3 138.1 151.3 140.3 143.7 126.3 143.7ZM91.4 270.6 88.0 269.4 88.0 280.2 92.2 281.2 93.0 279.9 93.4 276.6ZM285.5 137.1 286.8 137.5 288.3 133.4 287.1 127.3 274.2 121.3 268.8 121.3ZM193.2 352.5 189.6 349.6 190.7 357.4 194.1 357.4ZM490.9 310.1 491.4 310.4 499.7 311.2 496.8 308.6 494.1 307.7ZM119.3 275.2 119.2 275.2 118.8 275.6 118.6 276.5 121.1 280.3 121.8 280.6 128.5 280.1 128.6 280.0 127.6 279.0ZM453.2 317.6 446.8 317.3 453.1 324.6 454.4 324.0 455.9 321.1ZM452.5 353.1 450.4 355.1 452.8 357.4 455.2 357.4 456.1 355.0 454.9 353.8ZM474.9 340.5 473.5 340.7 472.0 343.1 475.8 348.0 482.8 343.1ZM406.2 256.0 409.5 256.8 411.7 255.1 406.8 252.2 403.5 253.1ZM487.1 333.2 492.0 337.0 495.6 334.6 490.5 329.4 486.8 329.7 486.7 329.8 486.3 331.5ZM186.7 291.9 186.4 291.9 198.0 303.1 201.6 301.1 200.9 299.2 193.9 292.5ZM153.6 168.6 150.3 174.2 163.0 180.9 169.4 178.9 168.2 176.0 155.2 168.9ZM494.8 189.2 492.3 182.4 485.9 181.3 482.8 184.3 490.3 189.8ZM444.0 281.0 437.8 280.3 439.0 287.1 446.2 283.5ZM371.7 233.0 370.6 228.8 364.8 222.9 356.2 226.8 356.3 227.6 363.6 232.6ZM369.6 247.7 372.0 256.0 380.0 259.5 380.3 259.6 380.9 253.3ZM429.5 335.1 428.2 334.9 427.7 335.1 428.9 343.4 430.7 345.4 436.1 344.0 432.1 336.6ZM141.9 314.4 145.2 320.2 151.7 320.1 144.8 312.9 143.0 313.4ZM205.4 353.9 205.6 355.6 206.4 357.4 215.0 357.4 216.3 352.1ZM335.6 206.4 340.4 203.8 341.9 198.0 341.4 197.1 330.9 196.7 328.6 200.9ZM384.7 131.8 394.0 136.4 398.9 127.1 385.1 131.1 384.8 131.7ZM88.0 346.3 88.0 357.4 97.6 357.4 95.7 350.1ZM114.5 271.7 114.4 266.0 113.9 265.8 109.8 269.3ZM385.9 286.5 381.1 285.7 383.6 289.2 388.5 290.6ZM274.1 309.4 276.0 310.1 279.7 310.4 286.9 308.5 281.1 299.0ZM247.3 249.1 241.2 244.0 239.0 250.5 242.9 253.4ZM475.4 168.7 480.9 170.2 480.4 163.5 477.0 161.6ZM394.5 246.5 391.4 238.9 384.8 237.9 383.3 238.4 390.0 246.1 392.5 247.7ZM518.3 192.6 528.9 200.5 532.4 197.7 530.6 190.3 523.3 186.7 517.3 188.9ZM222.2 223.0 226.3 220.1 221.9 213.5 207.1 215.6 207.0 216.0 211.5 221.2ZM473.8 159.4 475.1 159.4 475.1 159.1 474.3 158.1 463.6 151.8 462.8 152.1 463.6 159.0ZM331.4 239.1 325.8 240.9 325.5 241.3 326.3 243.9 332.1 249.1 338.1 247.1 338.4 243.0ZM443.1 319.4 449.8 326.6 451.3 327.0 453.1 324.6 446.8 317.3 445.1 316.7ZM460.5 308.9 461.5 310.1 470.3 314.0 471.0 312.6 470.5 310.0 468.7 308.4 461.3 307.7ZM164.4 126.1 162.1 121.4 148.1 121.4 148.1 120.5 142.8 121.0 143.0 121.8 149.8 130.6 152.5 131.8ZM453.9 197.1 454.9 196.9 454.8 189.4 452.2 188.0 441.1 191.8ZM347.3 172.3 330.1 162.2 329.0 169.3 344.1 175.4ZM170.3 214.5 163.9 202.1 160.4 211.7 167.4 215.1ZM385.1 131.1 384.8 126.5 381.6 121.1 375.0 121.1 375.1 121.4 384.8 131.7ZM272.5 329.5 273.5 328.2 270.0 323.3 269.4 322.7 260.7 324.0 263.2 326.0ZM464.1 220.6 468.2 221.0 464.1 214.6 462.2 213.9 458.1 215.1 458.0 218.7ZM148.1 120.5 148.1 113.1 140.2 109.4 139.7 118.5 140.7 119.6 142.8 121.0ZM281.9 246.4 283.1 241.8 282.7 239.9 272.8 234.0 270.5 239.4ZM108.7 239.4 100.6 236.1 95.4 242.3 101.4 247.7 103.4 247.7 111.4 244.4ZM344.9 263.7 335.2 268.0 335.5 270.6 343.6 273.0 344.6 272.1 345.6 264.1ZM183.2 269.1 179.7 263.3 176.8 261.7 172.4 263.5 171.9 264.2 171.2 273.5 180.5 273.0ZM229.7 233.6 222.2 223.0 211.5 221.2 211.5 226.1 214.8 229.7ZM285.7 264.9 281.9 265.7 287.3 272.9 295.9 275.0 294.4 268.6 288.6 265.7ZM363.7 333.5 352.5 329.0 350.6 328.9 355.2 336.9 363.3 333.8ZM152.8 279.8 151.1 274.0 146.0 273.5 145.2 273.5 144.7 274.1 147.5 278.8 150.7 280.1ZM138.1 287.2 138.7 286.3 138.2 286.0 128.1 284.6 133.1 289.2ZM472.5 350.4 475.8 348.0 472.0 343.1 467.4 345.3ZM262.4 342.9 257.1 341.2 255.4 345.1 265.2 354.2 269.0 356.8 265.5 344.8 263.4 343.4ZM302.9 226.4 303.1 227.8 305.9 232.1 308.1 232.6 319.6 229.4 319.3 228.2 310.2 222.6ZM225.5 146.8 216.1 137.5 213.1 136.6 207.1 144.0 210.0 148.8 211.8 150.5 215.6 151.5 221.0 151.5 223.3 150.5ZM487.3 316.1 485.2 318.5 488.6 320.1 489.2 317.0 488.7 316.6ZM348.7 311.8 352.1 315.9 359.5 316.5 358.1 309.7 355.6 306.9 350.4 306.9 349.1 307.6ZM298.6 341.7 299.2 341.1 295.3 334.4 290.8 337.6ZM230.7 240.9 233.2 235.5 231.2 234.6 222.6 237.0 222.2 237.5 225.2 241.7ZM358.3 284.7 355.1 283.6 350.7 283.9 353.8 291.3 354.7 291.4 359.9 288.4ZM441.1 266.8 448.8 263.7 449.7 261.6 442.3 258.6 438.3 259.4 438.2 261.4ZM414.6 239.9 414.6 239.9 420.3 246.7 423.4 246.6 425.1 241.8 424.4 241.0 420.8 239.8ZM380.7 294.6 377.5 294.0 375.4 296.1 378.6 302.3 380.0 303.2 385.0 300.4 383.3 295.7ZM421.5 269.9 427.6 266.1 427.5 261.6 426.6 260.2 426.5 260.2 420.2 262.6 420.4 266.5ZM220.0 338.9 215.5 340.0 219.5 350.5 220.0 350.9 225.6 353.7 226.0 350.0 220.1 339.0ZM416.5 141.6 413.4 142.7 416.3 145.7 417.6 143.1ZM496.7 300.7 493.7 294.8 491.2 295.3 490.7 297.7 495.9 301.1 496.7 300.7ZM318.6 276.4 323.4 273.5 314.0 266.1 312.2 270.4 313.2 274.5ZM324.9 320.5 323.8 316.9 314.0 311.4 312.3 311.3 309.9 313.3 312.7 319.4 318.4 322.9 324.8 320.7ZM151.7 320.1 156.1 321.1 158.1 319.8 152.0 314.1 146.5 311.9 144.8 312.9ZM510.0 236.7 511.5 237.1 502.0 227.5 498.8 228.4 499.6 230.3ZM214.4 182.0 213.9 181.9 210.6 181.3 204.7 181.5 210.9 187.5 219.0 185.6 219.0 185.4ZM370.6 228.8 371.7 233.0 379.9 238.3 381.1 238.2 377.0 226.1ZM205.1 273.0 205.6 280.8 206.1 281.2 211.8 282.5 213.5 282.3 213.5 273.9 208.4 271.6ZM458.4 315.8 453.9 315.3 453.2 317.6 455.9 321.1 460.1 321.9ZM367.9 351.8 370.2 352.6 375.4 350.0 375.3 347.0 369.7 344.5 365.2 348.2ZM365.4 263.5 362.1 262.9 365.9 273.0 368.1 274.7 371.2 271.1 371.6 266.7 368.3 264.8ZM207.0 267.9 208.5 267.1 211.8 265.2 212.0 258.0 201.4 257.6 201.4 263.3ZM480.1 319.1 480.3 313.9 471.0 312.6 470.3 314.0 471.0 315.6 472.1 316.3ZM494.8 261.1 492.9 261.8 494.1 266.4 498.5 266.4 498.5 264.7 497.9 263.5 496.5 261.7ZM401.7 252.4 399.2 255.3 400.5 260.0 402.2 261.1 406.2 256.0 403.5 253.1 403.3 253.0ZM241.4 133.4 235.6 121.3 212.7 121.3 224.0 134.7 232.4 137.2 239.0 135.2ZM341.4 197.1 341.3 197.0 337.7 189.5 329.8 182.6 327.3 181.4 323.6 188.2 330.9 196.7ZM116.6 266.7 114.4 266.0 114.5 271.7 119.2 275.1ZM250.3 167.6 247.7 167.9 256.0 178.7 259.3 179.5 258.9 171.8 254.4 168.2ZM394.6 171.9 389.3 171.4 387.2 176.0 390.6 178.6 392.1 178.7 396.8 175.4ZM511.1 197.9 516.8 192.8 505.3 190.0 504.5 190.1 508.0 197.1 510.2 198.0ZM420.8 198.7 421.3 200.1 430.4 208.9 431.7 209.2 432.7 208.2 434.5 205.0 430.4 201.9ZM126.9 326.0 131.7 325.6 131.3 320.5 122.3 317.9 123.5 321.8ZM438.8 339.8 442.6 340.0 436.7 331.4 429.5 335.1 432.1 336.6ZM261.4 297.1 270.0 301.9 270.3 295.4 264.8 294.3ZM177.7 204.0 180.1 212.0 190.9 211.3 193.5 209.5 193.1 208.9ZM485.2 318.5 480.2 319.2 481.6 321.6 488.2 323.6 489.0 323.3 488.6 320.1ZM403.8 321.3 397.4 318.1 405.4 330.1 408.3 330.7 409.7 330.0 410.5 329.1ZM421.4 282.0 422.3 284.6 427.5 286.1ZM376.7 341.7 376.2 346.7 387.2 349.8 392.7 348.3 394.2 346.9 388.7 343.4ZM216.1 137.5 224.0 134.7 212.7 121.3 211.4 121.3 212.2 135.6 213.1 136.6ZM421.2 204.1 418.2 205.9 422.7 210.6 427.5 208.7ZM407.3 267.0 417.0 269.4 413.3 260.4 411.3 259.6 406.1 265.0ZM90.2 315.7 88.0 315.0 88.0 326.6 88.2 326.7 92.2 321.9ZM287.1 127.3 291.9 127.0 289.7 121.2 274.2 121.3ZM185.6 330.2 179.2 325.4 173.6 327.4 175.9 333.2 181.9 333.5ZM227.8 296.3 222.4 289.2 220.2 288.9 218.7 289.4 222.3 294.9ZM486.5 256.7 486.7 257.5 493.0 259.4 493.1 257.0ZM270.8 222.2 268.6 226.0 287.4 231.5 286.6 225.7ZM331.8 237.9 332.5 233.5 319.7 229.5 325.8 240.9 331.4 239.1ZM185.2 248.8 189.3 248.4 190.6 245.3 189.7 244.3 182.4 241.8 179.5 243.4ZM301.6 288.7 291.8 281.4 291.0 281.2 280.9 282.7 280.9 283.0 299.7 290.6 301.6 288.9ZM265.0 264.7 259.3 258.5 251.8 264.8 255.6 268.5 263.7 270.4 266.2 269.1ZM420.4 289.2 419.0 288.8 415.4 291.5 419.4 298.7 422.6 297.2 423.9 296.3 424.3 290.9ZM190.6 270.7 194.3 274.2 202.8 272.2 194.5 266.4ZM478.3 223.3 487.6 219.7 484.9 217.9 483.4 217.4 479.8 219.1ZM171.2 229.2 176.9 234.0 178.0 234.3 179.9 226.9 179.3 226.2 172.4 224.9ZM220.6 252.5 233.9 249.2 230.7 240.9 225.2 241.7 218.0 246.7ZM179.3 226.2 182.4 217.3 180.2 215.4 170.3 214.5 167.4 215.1 167.2 219.6 172.4 224.9ZM448.9 130.7 444.8 130.3 439.8 134.0 447.2 140.3 452.6 135.3ZM130.1 259.0 129.3 259.7 128.6 263.3 132.1 266.9 134.4 267.1ZM105.8 305.6 113.8 313.0 116.7 312.5 111.6 305.7 106.0 303.8ZM472.8 306.1 473.7 309.4 480.6 311.7 475.0 307.3ZM363.6 232.6 356.3 227.6 351.2 229.9 348.4 233.3 364.2 241.1ZM462.1 226.0 468.5 221.2 468.2 221.0 464.1 220.6 461.6 224.7ZM361.5 281.5 360.3 281.2 358.3 284.7 359.9 288.4 366.0 290.5 368.7 288.5ZM409.5 256.8 411.3 259.6 413.3 260.4 414.8 260.4 417.0 259.2 417.4 254.0 417.3 253.8 411.7 255.1ZM245.4 218.6 247.5 226.0 262.4 225.7 261.0 224.5ZM397.8 170.7 403.4 169.7 400.8 165.8 391.1 166.5 395.2 170.5ZM88.0 251.7 88.0 257.9 90.4 259.5 99.5 261.6 94.3 253.1ZM151.6 342.7 154.4 350.8 164.3 349.4 157.9 342.1 155.1 341.4ZM469.8 272.2 464.9 267.6 464.1 272.9 467.4 274.6 468.7 274.6ZM449.6 270.6 447.8 269.0 441.5 269.4 441.2 269.7 448.4 272.9 449.6 272.8ZM225.9 205.8 210.9 198.2 207.9 199.0 206.7 204.6 221.9 211.3 223.4 210.1ZM385.2 225.3 377.5 225.1 377.0 226.1 381.1 238.2 383.3 238.4 384.8 237.9 385.7 226.4ZM145.9 184.4 143.4 177.5 132.6 170.7 127.4 170.3 127.1 170.3 122.7 176.7 125.7 183.3 129.8 185.1 139.4 186.7ZM170.8 297.0 168.9 299.3 172.5 303.8 177.6 306.1 177.8 306.0 179.1 302.2ZM490.7 297.7 491.2 295.3 488.7 293.8 483.1 295.8 483.2 295.9 489.6 298.2ZM351.1 350.8 354.7 350.3 354.4 345.4 347.0 341.9 347.2 342.5ZM474.4 169.3 478.0 174.0 479.2 175.1 481.1 175.6 484.5 171.7 480.9 170.2 475.4 168.7ZM307.3 298.8 301.6 296.5 305.9 303.7 309.4 305.5 310.4 304.4ZM333.7 221.2 327.4 217.2 325.6 226.4 334.7 231.5 338.4 230.6 334.2 221.6ZM355.3 275.6 344.6 272.1 343.6 273.0 347.0 278.3 350.4 278.1 355.5 276.1 355.4 275.9ZM452.9 297.9 441.6 291.0 438.1 290.7 440.3 296.2 448.9 300.8 452.0 300.0 452.3 299.8 453.2 298.9ZM244.5 269.8 238.5 263.2 227.5 261.5 227.7 263.1 228.0 263.5 242.1 274.8 244.4 274.2ZM205.6 318.7 196.9 314.2 196.4 315.5 196.3 321.0 206.6 322.1ZM458.4 278.8 457.3 279.5 457.9 280.7 466.7 286.4 468.9 286.6 470.9 284.1 466.7 279.8 464.9 279.0 463.7 278.7ZM349.8 171.5 347.3 172.3 344.1 175.4 344.7 176.7 356.9 179.8 357.0 179.8ZM267.8 345.5 265.5 344.8 269.0 356.8 269.6 357.4 274.9 357.4ZM143.8 330.6 143.7 328.3 133.7 326.3 135.4 333.9 141.9 336.1 142.9 335.1ZM375.4 296.1 377.5 294.0 372.3 288.3 368.7 288.5 366.0 290.5 366.8 292.2 371.4 295.4ZM123.8 236.0 124.0 234.4 122.3 231.6 114.4 228.8 117.2 234.2 123.3 236.6ZM224.5 163.6 229.0 165.5 230.3 161.7 221.0 151.5 215.6 151.5 217.6 154.9ZM313.0 255.6 312.0 256.4 313.3 264.1 315.6 264.3 320.0 261.0 314.7 254.9ZM527.6 295.1 527.0 294.5 525.3 291.8 516.8 292.1 516.1 296.2 522.3 298.9ZM257.5 282.9 261.2 290.7 270.5 291.2 264.8 285.7 260.7 283.7ZM415.3 327.5 410.5 329.1 409.7 330.0 419.3 336.7 424.7 334.2ZM309.9 158.6 324.9 152.3 324.2 151.2 317.6 147.8 300.0 144.7ZM430.7 345.4 430.9 346.2 439.1 351.5 443.7 347.5 437.0 344.0 436.1 344.0ZM461.8 137.9 463.7 137.9 465.5 135.3 449.8 127.2 448.9 130.7 452.6 135.3ZM462.9 356.5 456.1 355.0 455.2 357.4 462.4 357.4 463.4 356.7ZM421.1 357.4 429.3 357.4 421.2 353.4ZM332.0 335.9 336.9 335.8 334.7 331.0 334.0 330.7 328.8 329.3 325.2 329.8 326.1 331.4ZM483.9 334.7 487.1 333.2 486.3 331.5 485.0 331.5 482.6 333.0ZM244.5 261.5 251.8 264.8 259.3 258.5 259.2 258.5 249.8 255.3 244.4 255.2ZM271.0 333.5 263.2 326.0 260.7 324.0 260.3 323.9 262.1 333.2 269.4 335.5 271.7 335.8ZM514.5 307.6 516.4 306.6 515.4 305.1 513.3 304.0 510.2 302.7 510.0 302.7ZM494.8 328.5 499.0 331.9 496.9 326.0 496.6 325.9ZM264.2 215.2 270.8 220.3 273.2 217.3 265.2 209.5 262.8 210.6ZM219.5 186.2 218.3 192.6 223.2 195.9 232.6 199.9 230.0 194.0ZM125.8 246.1 127.8 249.6 132.6 251.6 131.4 243.8 128.4 243.0ZM467.3 262.3 467.3 262.3 465.6 262.0 463.8 263.4 465.3 266.6 468.2 267.2 470.3 267.0 470.8 264.5ZM410.7 222.6 411.6 221.4 411.3 215.1 398.7 209.5 398.0 212.0 406.9 223.6ZM103.7 200.2 88.0 190.9 88.0 199.1 104.1 202.0ZM118.6 301.5 123.3 300.0 121.3 297.0 120.0 296.3 110.7 291.7 113.1 299.9ZM491.8 222.1 498.0 221.4 499.9 218.6 494.5 213.7 490.3 215.8 489.9 220.4ZM182.4 217.3 186.3 219.2 193.7 219.0 190.9 211.3 180.1 212.0 180.2 215.4ZM102.0 277.6 103.5 287.5 103.8 287.6 105.8 288.0 110.1 279.6 105.5 275.5 103.1 276.0ZM136.7 313.3 133.9 306.9 130.2 307.0 130.0 308.1ZM494.5 318.5 492.4 323.7 496.6 325.9 496.9 326.0 497.0 326.0 495.6 318.6 495.1 318.5ZM466.3 354.7 472.5 350.4 467.4 345.3 462.2 343.6 458.8 346.5ZM400.7 191.3 400.8 193.3 402.4 194.8 415.8 195.1 416.2 194.8 415.6 192.9ZM129.7 270.8 128.7 269.7 126.4 270.3 124.6 272.3 128.5 274.6ZM99.1 333.2 92.5 328.5 88.2 326.7 88.0 326.6 88.0 340.8 97.3 340.8 102.3 338.8 102.3 338.8ZM192.7 197.8 196.6 196.4 198.8 193.2 197.2 191.5 197.0 191.5 190.6 196.4 191.8 197.9ZM253.1 328.6 246.2 330.3 246.6 331.3 251.2 337.0 256.8 340.8 260.3 333.7ZM403.2 296.4 407.7 296.6 406.7 290.1 406.0 289.4 401.5 289.7 396.1 291.4ZM128.5 280.1 121.8 280.6 127.1 283.7ZM431.7 224.1 436.4 232.3 439.7 231.6 439.2 227.6 438.1 225.2ZM230.5 282.8 236.1 300.0 236.2 300.1 243.7 300.4 239.5 285.9 231.1 282.6ZM382.1 316.8 384.3 317.7 384.1 311.0 379.6 312.9 380.2 315.1ZM504.8 283.1 505.3 287.4 511.3 288.5 508.3 284.0ZM114.6 246.5 118.1 245.3 116.2 239.9 112.3 238.0 108.7 239.4 111.4 244.4ZM192.1 201.7 193.6 202.9 203.6 205.2 198.0 199.3 192.7 197.8 191.8 197.9ZM158.2 198.2 163.4 200.1 175.2 200.2 174.0 198.2 156.8 186.8 152.6 187.5ZM255.4 236.6 253.1 239.6 260.8 247.4 261.3 247.5 269.3 245.2 267.0 242.5 257.0 236.5ZM146.9 264.6 147.2 264.6 148.2 261.3 145.7 259.9 144.3 259.6 140.5 262.0ZM375.1 121.4 375.0 121.1 363.6 121.2 363.9 122.5 368.1 131.0 374.5 133.0ZM169.3 333.9 163.7 335.4 163.7 338.1 164.2 338.4 168.6 338.2 170.1 334.3ZM261.4 297.1 256.3 295.7 255.5 295.7 265.0 308.8 270.1 309.9 272.8 309.1 270.0 301.9ZM161.3 159.7 174.7 158.1 161.1 145.0 155.8 143.6 157.4 158.3ZM486.3 256.0 486.5 256.7 493.1 257.0 494.0 255.0 489.9 254.5ZM222.2 237.5 222.6 237.0 214.9 231.7 214.3 234.3 213.7 239.3ZM340.0 214.5 340.9 212.6 336.2 208.9 324.6 212.5 327.3 217.2 327.4 217.2 333.7 221.2ZM468.6 307.8 470.3 304.0 464.2 304.0ZM438.6 125.6 441.7 121.1 429.6 121.1 435.3 126.0ZM198.0 303.1 186.4 291.9 184.1 291.8 183.9 293.3 185.5 299.6 193.7 307.0 194.2 307.2ZM300.6 207.8 302.7 207.6 304.3 203.9 294.1 193.8 284.5 193.5 284.1 194.2 284.1 194.2ZM364.5 357.4 372.3 357.4 370.2 352.6 367.9 351.8 365.3 352.2ZM258.9 171.8 262.6 173.1 276.1 175.4 276.9 173.9 259.3 164.3 254.4 168.2ZM317.5 339.2 311.2 343.7 311.2 343.7 311.3 343.9 323.2 345.6 320.6 339.8ZM120.4 253.8 118.4 251.0 116.8 250.2 113.7 251.8 113.0 257.2 116.0 258.4 116.0 258.4ZM414.9 147.8 404.3 149.7 407.9 156.6 425.7 155.2 418.6 149.3ZM524.5 322.8 525.8 322.4 517.8 316.7 517.3 316.4 511.9 319.1 514.4 322.7ZM498.8 228.4 502.0 227.5 505.3 226.2 498.0 221.4 491.8 222.1 492.2 223.4ZM507.2 297.4 507.6 294.2 505.6 292.8 504.5 292.2 500.5 297.1 501.0 297.7ZM106.7 147.0 109.8 144.7 108.8 136.6 102.3 127.2 93.3 121.9 89.4 124.1 95.9 135.4 102.5 146.5ZM104.4 227.2 95.9 220.7 92.6 229.3 99.2 233.6 104.7 228.2 104.9 227.7ZM175.5 243.7 183.9 250.4 184.6 250.0 185.2 248.8 179.5 243.4 175.7 243.5ZM261.7 185.9 263.0 182.1 259.3 179.5 256.0 178.7 251.0 180.0 255.7 184.6 257.1 185.2ZM240.8 338.8 242.2 342.1 253.7 346.1 255.4 345.1 257.1 341.2 256.8 340.8 251.2 337.0ZM242.6 191.7 234.7 202.2 235.6 203.8 236.7 204.4 240.6 206.3 247.1 207.0 252.0 202.3 249.9 197.2ZM447.2 140.3 447.4 141.2 453.5 145.6 456.3 145.1 461.8 137.9 452.6 135.3ZM422.2 144.9 426.2 155.3 427.6 155.9 431.5 153.0 433.1 148.1 428.1 141.8 426.0 139.9 421.8 139.4ZM128.6 263.3 125.0 262.0 124.8 265.6 128.9 268.3 132.1 266.9ZM461.9 303.2 461.9 303.2 461.1 305.4 461.3 307.7 468.7 308.4 468.6 307.8 464.2 304.0ZM500.7 182.1 493.7 182.3 502.1 188.4ZM498.1 190.4 502.7 189.4 502.1 188.4 493.7 182.3 492.8 182.1 492.3 182.4 494.8 189.2ZM428.2 253.2 427.9 254.2 432.5 258.9 433.6 258.9ZM199.9 161.7 189.9 163.2 197.5 173.8 205.3 173.3 207.1 171.1 208.1 169.5 203.6 163.1ZM197.0 191.5 188.9 190.7 188.4 194.4 190.6 196.4ZM313.2 298.6 317.5 300.6 322.1 298.3 319.0 294.4 316.4 295.0ZM293.5 144.4 286.8 137.5 285.5 137.1 272.2 137.3 271.1 140.3 279.6 145.2 291.3 147.6ZM477.7 285.6 472.7 284.0 470.9 284.1 468.9 286.6 472.0 291.0 478.8 293.3 479.3 293.4 479.5 290.7ZM359.1 350.4 362.1 357.4 364.5 357.4 365.3 352.2 362.4 351.1ZM492.9 261.8 494.8 261.1 493.0 259.4 486.7 257.5 486.5 257.8 488.9 261.8ZM419.2 299.9 413.3 301.3 413.3 305.3 413.4 305.4 416.1 307.0 428.1 305.3 428.3 304.9ZM122.4 250.6 125.3 251.3 127.8 249.6 125.8 246.1 121.9 245.5ZM295.1 308.4 296.3 301.9 295.6 300.3 289.5 297.0 285.0 299.4ZM224.7 315.5 224.8 315.7 233.5 324.1 238.9 326.0 240.9 326.1 242.1 320.5 241.1 318.7 235.1 314.2 225.4 313.1ZM470.6 328.4 469.7 327.9 467.2 332.1 472.6 335.4 474.9 333.5ZM506.7 224.3 506.0 226.3 514.2 233.5 515.0 224.3ZM101.6 175.3 104.4 181.0 113.6 186.8 121.7 185.5 125.7 183.3 122.7 176.7 112.8 172.0ZM310.2 222.5 303.8 215.3 298.0 220.3 302.9 226.4 310.2 222.6ZM118.8 275.6 119.2 275.2 119.2 275.1 114.5 271.7 109.8 269.3 105.8 269.7 105.2 271.8 105.3 272.0ZM393.9 258.6 400.5 260.0 399.2 255.3 395.4 252.7 389.6 253.9ZM122.3 317.9 120.6 315.7 116.1 321.4 116.9 322.3 123.5 321.8ZM508.1 159.1 505.3 156.5 506.4 161.8 506.6 161.9ZM441.3 244.5 442.2 243.2 438.3 239.0 435.8 243.6ZM269.4 335.5 262.1 333.2 260.3 333.7 256.8 340.8 257.1 341.2 262.4 342.9ZM457.9 167.3 459.2 158.6 452.1 154.9 449.9 154.9 448.9 155.6 448.6 159.9ZM339.7 318.2 343.8 316.7 343.8 316.3 339.2 310.4 335.4 309.7 331.6 311.7ZM202.8 272.2 205.1 273.0 208.4 271.6 207.0 267.9 201.4 263.3 194.2 264.5 194.5 266.4ZM130.2 155.7 136.6 161.3 145.8 155.1 138.1 151.3 130.5 151.3ZM329.7 262.8 335.2 268.0 344.9 263.7 342.0 260.7 338.4 260.8 329.5 261.5ZM482.1 294.8 483.1 295.8 488.7 293.8 486.5 291.6 482.5 294.3ZM428.9 343.4 418.8 340.4 416.0 341.3 416.4 345.4 419.0 347.3 427.3 349.4 430.9 346.2 430.7 345.4ZM317.6 147.8 313.3 142.2 300.3 135.9 299.4 144.4 300.0 144.7ZM291.0 174.5 302.1 178.3 303.8 177.6 306.7 172.0 297.3 167.1 294.2 168.9ZM487.3 316.1 481.1 312.8 480.3 313.9 480.1 319.1 480.2 319.2 485.2 318.5ZM456.1 346.4 454.8 347.2 455.9 351.4 462.9 356.5 463.4 356.7 466.3 354.7 458.8 346.5 457.1 346.3ZM446.4 340.2 456.1 346.4 457.1 346.3 452.0 339.1 450.5 338.7ZM395.4 326.0 392.2 319.3 387.4 319.1 386.3 321.6 387.9 324.8 392.0 327.0ZM533.2 317.3 535.3 315.8 533.0 310.0 531.1 308.7 527.5 309.9 527.5 309.9ZM166.5 289.6 162.2 278.4 160.0 280.0 162.0 289.2 166.1 290.0ZM124.1 272.4 117.4 266.6 116.6 266.7 119.2 275.1 119.2 275.2 119.3 275.2 124.0 272.6ZM112.8 343.3 122.1 355.6 122.9 356.4 124.3 357.4 124.6 357.4 128.6 351.6 126.9 345.5 119.0 340.4ZM414.8 260.4 413.3 260.4 417.0 269.4 420.1 270.6 421.5 269.9 421.5 269.9 420.4 266.5ZM231.2 234.6 229.7 233.6 214.8 229.7 214.9 231.7 222.6 237.0ZM408.5 238.5 399.5 234.3 395.7 237.3 408.0 239.4ZM105.2 308.2 105.8 305.6 106.0 303.8 103.0 301.8 101.3 306.0ZM144.0 251.9 139.9 252.1 138.6 253.4 144.3 259.6 145.7 259.9 147.6 254.7ZM205.6 355.6 193.2 352.5 194.1 357.4 206.4 357.4ZM483.2 295.9 483.0 300.1 489.6 302.7 489.6 298.2ZM223.3 150.5 221.0 151.5 230.3 161.7 233.2 161.2 234.9 156.7ZM291.8 151.2 294.0 153.7 301.8 160.7 309.4 161.9 309.3 159.6 292.0 149.8ZM481.3 273.8 479.6 271.1 478.0 269.2 477.3 268.8 473.8 268.9 473.2 271.8 473.2 271.8 477.2 274.5ZM227.2 220.3 237.5 228.6 241.0 227.6 239.2 223.2 234.6 218.5ZM100.7 286.7 98.5 285.9 93.2 291.2 97.0 295.0 98.7 295.1ZM298.5 130.2 297.2 130.5 300.2 135.7 310.1 134.5 310.9 132.8 308.4 131.4ZM451.3 327.0 449.8 326.6 444.4 327.2 444.3 332.5 445.3 333.3 447.6 334.0 456.9 334.1 455.3 331.3ZM172.5 303.8 169.6 306.2 174.3 309.1 175.9 309.5 178.3 308.5 177.6 306.1ZM447.2 245.6 442.2 243.2 441.3 244.5 439.9 249.6 441.9 249.7 447.2 245.6ZM106.0 345.5 104.2 350.2 122.9 356.4 122.1 355.6ZM352.3 321.1 354.8 321.6 355.8 321.1 359.8 317.1 359.5 316.5 352.1 315.9ZM167.2 219.6 162.4 221.6 161.8 228.4 171.2 229.2 172.4 224.9ZM494.1 281.1 497.9 282.2 503.3 282.0 503.1 279.1 496.9 276.8 491.7 278.0ZM469.0 248.3 461.1 243.6 458.6 245.8 459.6 250.4 469.4 250.8ZM150.7 281.1 153.9 288.4 157.8 288.1 155.4 281.0 152.8 279.8 150.7 280.1ZM486.5 257.8 486.7 257.5 486.5 256.7 486.3 256.0 485.4 255.0 479.8 252.8 478.0 252.9 481.7 258.1 481.9 258.1ZM191.9 252.4 196.7 255.6 199.2 256.0 197.5 248.0 190.6 245.3 189.3 248.4ZM362.9 253.1 360.2 253.1 355.3 255.6 358.2 261.3 362.1 262.9 365.4 263.5 367.9 256.7 367.8 256.0ZM115.8 234.7 117.2 234.2 114.4 228.8 113.1 227.4 107.0 228.0 108.8 229.8ZM399.0 202.6 395.2 202.4 394.8 204.2 398.3 208.6 408.1 208.1 406.8 205.7 402.5 203.3ZM386.7 357.4 395.8 357.4 392.7 348.3 387.2 349.8ZM326.3 135.0 325.1 137.2 326.7 140.7 348.3 143.7 343.9 136.2 336.6 132.7ZM338.1 247.1 332.1 249.1 332.2 249.2 337.8 254.5 346.2 250.8ZM366.8 292.2 366.0 290.5 359.9 288.4 354.7 291.4 363.7 297.3ZM277.9 210.2 281.3 214.8 283.2 215.8 286.7 215.7 291.1 207.1 290.3 206.2ZM422.7 231.2 430.9 230.7 427.8 224.8 421.6 229.7ZM508.5 202.2 510.6 204.7 514.2 205.3 515.1 204.8 510.7 199.8ZM113.1 227.4 114.4 228.8 122.3 231.6 122.7 227.5 118.4 224.8 113.6 226.1ZM307.8 321.4 312.7 319.4 309.9 313.3 302.7 311.0 298.1 310.1 302.6 320.0 304.7 321.4ZM103.5 287.5 100.7 286.7 98.7 295.1 102.5 296.5 104.2 295.4 103.8 287.6ZM250.3 208.2 260.8 214.9 264.2 215.2 262.8 210.6ZM508.8 283.9 508.3 284.0 511.3 288.5 511.9 288.9 514.8 290.0 515.3 284.6ZM275.6 249.7 281.8 248.1 281.9 246.4 270.5 239.4 267.0 242.5 269.3 245.2ZM239.0 135.2 232.4 137.2 230.5 146.1 241.7 152.7 243.3 152.6ZM459.7 291.6 456.8 288.4 454.2 287.4 450.4 288.2 450.7 290.0 453.5 292.2 457.6 292.7ZM504.9 321.6 508.1 324.4 509.2 324.0 509.2 324.0 508.1 320.2 504.8 320.8ZM146.0 273.5 146.8 268.0 144.9 267.2 140.0 266.2 145.2 273.5ZM253.5 273.4 244.5 269.8 244.4 274.2 254.4 279.6 254.6 276.0ZM467.4 274.6 466.7 279.8 470.9 284.1 472.7 284.0 473.8 279.8 469.7 275.2 468.7 274.6ZM508.8 283.9 515.3 284.6 517.3 282.9 510.5 279.7 509.1 279.5ZM297.4 161.7 301.8 160.7 294.0 153.7ZM506.4 217.6 515.2 222.7 515.6 218.0 516.2 217.1 506.4 213.6 505.6 213.5ZM421.5 177.9 417.1 182.8 416.5 184.6 419.4 189.6 420.3 189.7 428.3 188.5ZM273.7 258.1 271.3 257.9 267.6 264.1 270.9 264.4ZM332.5 274.0 331.4 274.0 335.0 282.6 336.0 283.9 342.8 282.8 343.1 280.5ZM134.4 267.1 132.1 266.9 128.9 268.3 128.7 269.7 129.7 270.8 132.9 273.6 137.6 272.5 134.7 267.1ZM385.5 162.0 375.6 155.1 373.1 154.6 373.0 154.7 377.3 164.6 382.8 165.5 386.2 164.1ZM123.9 300.2 123.3 300.0 118.6 301.5 122.6 311.5 123.2 311.5 126.6 304.2ZM293.8 318.4 294.8 309.0 286.9 308.5 279.7 310.4 292.9 318.7 293.2 318.8ZM311.0 214.3 316.9 208.1 304.3 203.9 302.7 207.6 307.1 213.5ZM358.9 350.3 358.2 346.6 354.4 345.4 354.7 350.3ZM488.5 275.4 491.7 270.1 490.1 266.9 488.7 265.8 486.1 265.2 483.4 268.6ZM171.9 236.9 164.1 234.1 163.2 238.3 169.9 242.7 174.8 244.2 175.5 243.7 175.7 243.5ZM485.0 264.6 486.1 265.2 488.7 265.8 488.9 261.8 486.5 257.8 481.9 258.1ZM130.2 307.0 126.6 304.2 123.2 311.5 125.6 312.0 130.0 308.1ZM286.3 251.4 284.3 249.7 281.8 248.1 275.6 249.7 275.2 252.2 275.4 253.4 286.4 259.6 289.0 258.9ZM433.3 288.7 438.1 290.6 439.0 287.1 437.8 280.3 436.5 279.4 433.8 279.0 432.4 279.4 433.2 288.5ZM102.5 146.5 95.9 135.4 88.0 147.4 88.0 149.1 88.8 149.3 100.2 147.5ZM130.4 124.2 140.7 119.6 139.7 118.5 137.9 117.9 126.3 118.6 126.4 121.4ZM503.9 141.5 507.5 151.7 516.3 152.7 515.6 144.0 511.9 141.5ZM431.2 237.8 431.5 236.6 423.8 233.9 424.3 239.9ZM185.5 299.6 183.9 293.3 170.8 295.8 170.8 295.9 183.2 300.2ZM296.4 210.7 303.8 215.1 307.1 213.5 302.7 207.6 300.6 207.8 295.5 209.6ZM303.2 126.6 300.7 121.2 300.6 121.2 292.8 127.2 297.2 130.5 298.5 130.2ZM337.8 254.5 332.2 249.2 326.1 253.7 329.3 256.4 338.1 255.4ZM468.6 307.8 468.7 308.4 470.5 310.0 473.7 309.4 472.8 306.1 471.4 303.7 470.9 303.6 470.3 304.0ZM365.2 217.2 364.7 216.3 361.8 215.1 357.5 215.0 350.5 219.9 356.2 226.8 364.8 222.9ZM475.1 159.1 483.0 155.0 486.3 150.9 486.1 150.1 472.0 147.1 470.8 148.6 470.4 151.4 474.3 158.1ZM255.7 184.6 251.0 180.0 250.8 180.0 241.4 184.4 242.7 185.0 252.4 186.3ZM226.0 350.0 225.6 353.7 229.7 357.4 245.5 357.4 238.9 347.0 233.2 343.7 229.3 343.9ZM453.8 293.6 453.5 292.2 450.7 290.0 441.6 291.0 452.9 297.9ZM441.2 269.7 439.2 271.0 441.1 273.3 445.1 276.8 445.9 276.9 448.4 272.9ZM361.7 325.8 358.0 324.3 358.0 328.4 360.9 329.7ZM314.0 266.1 313.2 264.2 307.8 263.1 308.9 267.9 312.2 270.4ZM164.2 338.4 167.1 341.8 169.3 342.3 172.0 340.0 168.6 338.2ZM519.3 171.2 517.7 170.7 512.4 173.6 524.5 179.6 532.1 179.0 526.0 174.7ZM515.8 299.4 523.1 304.4 525.2 302.0 522.3 298.9 516.1 296.2 514.6 296.7 514.8 297.9ZM249.1 288.0 249.0 288.1 251.8 293.9 255.5 295.7 256.3 295.7 262.1 293.1 261.1 291.9ZM376.3 143.0 378.1 145.1 385.7 149.3 386.5 149.4 388.6 143.7 380.0 134.3 375.5 133.4ZM386.2 328.0 384.3 328.6 386.4 331.0 394.1 333.7 391.3 327.8ZM284.2 290.4 281.0 287.8 272.9 293.0 281.1 298.9 282.7 299.0ZM377.8 242.0 366.1 243.6 366.0 244.3 366.1 244.6 369.6 247.7 380.9 253.3 383.8 251.5ZM242.7 185.0 254.4 192.9 257.2 193.5 258.7 193.1 256.3 189.1 252.4 186.3ZM403.1 142.4 400.8 143.3 404.3 149.7 414.9 147.8ZM504.9 272.0 504.0 271.4 504.1 270.7 502.4 267.7 498.7 266.7 501.2 273.0 503.1 274.1 505.7 273.4ZM516.6 325.2 524.5 322.8 514.4 322.7 514.5 322.9ZM92.7 179.6 90.6 167.6 88.0 166.3 88.0 178.6ZM254.2 307.0 250.6 314.5 255.8 319.2 261.0 315.7 262.8 308.9ZM125.7 183.3 121.7 185.5 130.3 200.4 131.2 200.3 136.5 198.1 129.8 185.1ZM403.2 347.5 401.9 347.4 407.8 357.4 417.4 357.4 414.4 352.6ZM491.2 295.3 493.7 294.8 494.7 294.3 494.5 293.1 488.2 287.6 485.1 288.5 485.2 289.2 486.5 291.6 488.7 293.8ZM127.7 276.7 127.6 279.0 128.6 280.0 131.5 280.6 133.8 277.5 133.7 276.3 133.5 276.0 129.1 275.2ZM103.0 301.8 103.0 301.8 98.5 300.3 97.6 306.3 101.3 306.0ZM476.7 258.7 481.7 258.1 478.0 252.9 476.9 252.5 472.7 254.4 472.5 257.4 473.1 258.1ZM419.0 357.4 421.1 357.4 421.2 353.4 420.0 352.5 418.5 353.0ZM465.9 298.7 467.9 296.0 462.0 291.2 459.7 291.6 457.6 292.7 459.2 294.2ZM354.4 345.4 358.2 346.6 360.1 345.2 359.6 340.6 355.2 337.3 346.6 339.4 345.8 340.3 347.0 341.9ZM172.0 169.9 180.0 173.7 180.3 162.5ZM224.8 315.7 222.0 322.2 228.5 327.0 233.5 324.1ZM198.8 193.2 207.9 199.0 210.9 198.2 211.1 197.5 210.8 191.8 196.8 185.9 197.2 191.5ZM277.5 278.8 267.8 269.7 266.2 269.1 263.7 270.4 265.2 274.8 265.7 275.4ZM368.8 160.6 373.8 166.4 377.3 164.6 373.0 154.7 369.0 156.1ZM97.3 340.8 88.0 340.8 88.0 346.3 95.7 350.1 101.2 351.2 102.5 350.2ZM393.2 232.9 395.3 237.4 395.7 237.3 399.5 234.3 398.2 231.0ZM478.8 293.3 477.2 299.2 479.5 301.5 483.0 300.1 483.2 295.9 483.1 295.8 482.1 294.8 479.3 293.4ZM495.2 234.0 496.1 234.9 500.7 236.8 510.0 236.7 499.6 230.3ZM239.0 250.5 241.2 244.0 240.5 239.5 234.3 235.6 233.2 235.5 230.7 240.9 233.9 249.2ZM455.3 272.1 457.5 271.7 450.0 261.7 449.7 261.6 448.8 263.7 447.8 269.0 449.6 270.6ZM420.8 281.2 417.7 287.3 419.0 288.8 420.4 289.2 422.3 284.6 421.4 282.0ZM426.5 260.2 423.8 257.7 417.4 254.0 417.0 259.2 420.2 262.6ZM312.2 247.3 323.1 245.8 326.3 243.9 325.5 241.3 321.4 239.8 309.0 244.2 311.0 246.4ZM234.6 218.5 239.2 223.2 245.2 218.5 244.9 218.1 234.6 218.5ZM198.0 199.3 203.6 205.2 205.0 205.7 206.7 204.6 207.9 199.0 198.8 193.2 196.6 196.4ZM428.1 141.8 435.8 141.7 436.1 140.2 435.0 139.0 427.6 137.6 426.0 139.9ZM497.0 326.0 500.8 326.5 497.7 319.8 496.9 318.7 495.6 318.6ZM102.3 338.8 97.3 340.8 102.5 350.2 104.2 350.2 106.0 345.5ZM515.3 284.6 514.8 290.0 516.8 292.1 525.3 291.8 519.3 282.7 517.3 282.9ZM404.0 184.2 399.2 189.1 400.7 191.3 415.6 192.9 415.6 192.9ZM279.7 280.3 280.9 282.7 291.0 281.2 286.1 274.3 280.9 275.6ZM472.6 258.9 467.3 262.3 467.3 262.3 471.6 262.5ZM380.0 134.3 388.6 143.7 400.3 143.2 394.0 136.4 384.7 131.8ZM189.7 244.3 191.1 236.7 189.7 235.5 179.7 235.3 182.4 241.8ZM110.1 313.8 109.2 314.5 116.1 321.4 120.6 315.7 118.8 313.1 116.7 312.5 113.8 313.0ZM292.3 350.9 294.9 351.5 297.8 349.8 298.0 346.8 297.8 346.0 294.5 344.6 288.6 343.1 287.6 345.1ZM442.7 203.8 448.5 201.9 451.9 197.5 440.6 195.9ZM418.8 196.9 420.8 198.7 430.4 201.9 429.7 196.8ZM197.2 328.2 198.4 331.7 198.5 331.7 210.6 330.0 211.2 325.5 209.4 324.6ZM487.2 308.7 482.8 307.6 480.8 311.8 481.1 312.8 487.3 316.1 488.7 316.6 489.2 313.4 487.8 309.0ZM319.3 228.2 321.2 225.7 318.7 220.5 314.6 219.0 310.2 222.5 310.2 222.6ZM358.0 324.3 354.8 321.6 352.3 321.1 351.8 321.1 350.1 328.0 350.3 328.6 350.6 328.9 352.5 329.0 358.0 328.4ZM206.3 286.2 210.7 290.2 215.1 290.4 215.7 289.7 211.8 282.5 206.1 281.2ZM121.8 121.9 112.6 117.5 106.5 114.8 93.3 121.9 102.3 127.2 115.7 130.1 118.9 128.7ZM98.5 274.5 96.7 275.5 98.8 278.2 102.0 277.6 103.1 276.0ZM495.1 318.5 495.6 318.6 496.9 318.7 499.1 317.9 499.2 317.3 498.7 315.4 492.3 311.5 492.9 314.8ZM452.0 339.1 457.1 346.3 458.8 346.5 462.2 343.6 459.3 335.9 458.4 335.3ZM344.0 244.0 347.7 245.1 353.9 243.1 346.2 235.8 344.6 240.1 344.0 244.0ZM477.3 323.8 478.5 324.0 481.0 322.4 481.6 321.6 480.2 319.2 480.1 319.1 472.1 316.3 472.9 319.9 476.3 323.3ZM346.3 181.4 356.9 179.8 344.7 176.7 345.7 181.0ZM415.8 124.8 411.7 121.1 397.3 121.1 398.3 123.5 399.9 126.3 400.3 126.6 411.0 130.7ZM270.0 301.9 272.8 309.1 274.1 309.4 281.1 299.0 281.1 298.9 272.9 293.0 272.6 293.0 270.3 295.4ZM288.8 154.8 296.4 162.2 297.4 161.7 294.0 153.7 291.8 151.2ZM375.4 350.0 370.2 352.6 372.3 357.4 382.2 357.4ZM510.8 324.0 508.1 320.2 508.1 320.2 509.2 324.0ZM506.8 273.3 504.9 272.0 505.7 273.4ZM502.4 267.7 504.1 270.7 504.6 268.0ZM513.5 164.5 515.1 165.1 519.9 164.0 516.8 158.0 516.6 155.8 512.5 161.8ZM476.2 303.4 479.3 303.7 479.5 301.5 477.2 299.2 471.3 295.0 468.0 295.9ZM153.6 216.9 159.7 228.9 160.6 229.1 161.8 228.4 162.4 221.6ZM143.0 121.8 135.5 129.0 135.8 129.4 149.8 130.6ZM502.4 310.7 504.4 311.3 505.2 309.8 503.4 305.6 500.3 306.2ZM125.9 288.7 131.9 291.1 133.1 289.2 128.1 284.6 127.2 284.1 124.1 286.6ZM450.5 311.3 453.9 315.3 458.4 315.8 458.6 315.7 455.3 308.4 450.4 307.5 450.0 307.6ZM384.6 191.4 393.5 199.9 398.2 196.8 399.0 193.8 384.7 191.2ZM487.8 309.0 489.2 313.4 492.9 314.8 492.3 311.5 491.4 310.4 490.9 310.1ZM363.9 122.5 349.3 124.6 350.6 128.7 364.7 132.4 368.1 131.0ZM194.2 264.5 188.0 259.7 179.7 263.3 183.2 269.1 190.6 270.7 194.5 266.4ZM269.0 356.8 265.2 354.2 251.6 351.9 247.5 357.4 269.6 357.4ZM521.6 168.7 519.3 171.2 526.0 174.7 525.0 174.0 522.4 168.9ZM488.5 275.7 488.5 275.4 483.4 268.6 483.0 268.6 479.6 271.1 481.3 273.8 486.1 275.7ZM259.1 121.3 235.6 121.3 241.4 133.4 258.1 142.6 259.0 142.3ZM272.9 293.0 281.0 287.8 280.2 284.0 271.7 282.1 264.8 285.7 270.5 291.2 272.6 293.0ZM334.6 121.2 325.8 121.2 335.5 130.9 338.8 124.9ZM378.7 319.7 377.6 319.4 374.5 320.0 374.8 322.3 381.3 325.3 381.5 324.5ZM392.0 327.0 387.9 324.8 386.2 328.0 391.3 327.8ZM486.1 275.7 481.3 273.8 477.2 274.5 476.7 276.0 477.3 278.1 478.9 279.2 481.1 279.4 484.6 279.5ZM510.2 318.8 511.9 319.1 517.3 316.4 514.7 312.9 514.7 312.9 505.2 311.8 508.1 317.1ZM116.0 258.4 116.0 258.4 118.5 260.5 123.8 260.7 123.9 260.5 122.9 257.0ZM202.1 215.5 193.5 209.5 190.9 211.3 193.7 219.0 194.6 219.1ZM287.3 352.4 292.3 350.9 287.6 345.1 283.9 345.5 281.6 350.4ZM146.7 230.9 150.7 235.6 162.5 238.6 163.2 238.3 164.1 234.1 160.6 229.1 159.7 228.9 152.8 227.6 146.1 229.3ZM454.3 147.8 462.8 152.1 463.6 151.8 464.4 151.0 463.0 147.4 462.4 146.9 456.3 145.1 453.5 145.6ZM475.8 329.0 478.6 330.4 478.9 330.4 479.4 330.0 480.4 327.8 478.5 324.0 477.3 323.8 475.2 325.8ZM329.5 261.5 338.4 260.8 329.3 257.3 329.0 260.9ZM505.3 156.5 508.1 159.1 512.5 161.8 516.6 155.8 516.3 152.7 507.5 151.7 503.6 151.6 504.5 155.8ZM139.9 279.1 140.8 278.1 140.2 277.3 133.7 276.3 133.8 277.5 136.9 279.6ZM229.8 335.3 237.2 336.1 237.4 335.4 236.3 331.0 228.5 328.4 226.8 331.8 228.5 334.5ZM488.8 176.3 489.2 174.5 485.2 171.6 484.5 171.7 481.1 175.6 484.1 177.9ZM112.8 343.3 106.4 339.6 102.3 338.8 102.3 338.8 106.0 345.5 122.1 355.6ZM349.4 356.1 351.1 350.8 347.2 342.5 342.4 348.6ZM204.7 181.5 204.5 181.4 196.5 181.2 196.5 185.3 196.8 185.9 210.8 191.8 211.3 191.3 210.9 187.5ZM153.0 336.3 143.8 330.6 142.9 335.1 151.3 338.5ZM503.8 305.4 508.2 305.6 508.3 302.7 507.8 302.2 502.5 299.9 500.6 301.2 501.2 302.7ZM103.8 300.0 102.5 296.5 98.7 295.1 97.0 295.0 95.5 298.6 98.5 300.3 103.0 301.8ZM313.2 274.5 312.2 270.4 308.9 267.9 301.3 267.1 303.5 269.5 310.4 274.6ZM527.5 309.9 531.1 308.7 532.0 303.8 525.2 302.0 523.1 304.4 523.0 305.3 523.2 305.7ZM479.0 212.4 482.6 209.4 482.2 208.6 481.1 207.5 471.2 206.8 470.6 208.8 472.5 212.4 472.5 212.4 475.7 213.4ZM290.3 206.2 291.1 207.1 295.5 209.6 300.6 207.8 284.1 194.2 285.2 197.7ZM437.1 165.3 441.6 170.6 451.3 173.4 453.1 172.7 451.0 170.6ZM488.2 323.6 490.5 329.1 494.8 328.5 496.6 325.9 492.4 323.7 489.0 323.3ZM124.6 272.3 126.4 270.3 118.5 266.2 117.4 266.6 124.1 272.4ZM431.5 153.0 448.9 155.6 449.9 154.9 442.2 147.7 437.7 146.8 433.1 148.1ZM427.7 335.1 428.2 334.9 426.4 328.3 425.0 324.9 416.9 320.5 416.4 321.3 415.3 327.5 424.7 334.2ZM233.2 161.2 244.8 166.6 237.2 156.6 234.9 156.7ZM178.3 308.5 175.9 309.5 175.4 312.4 182.2 314.0 179.9 310.0ZM507.8 176.5 507.9 172.5 506.6 171.1 505.6 170.5 494.6 171.3 494.1 174.9 495.4 176.0 501.9 179.8ZM102.4 313.5 96.8 315.3 96.6 315.7 97.5 317.0 107.6 325.0 109.0 324.4 107.9 314.9ZM465.6 140.9 472.0 147.1 486.1 150.1 486.5 149.5 485.7 148.0 474.7 136.9 468.7 133.0 465.5 135.3 463.7 137.9ZM498.4 305.0 500.3 306.2 503.4 305.6 503.8 305.4 501.2 302.7ZM272.2 137.3 285.5 137.1 268.8 121.3 266.1 121.3ZM473.1 258.4 473.1 258.1 472.5 257.4 463.3 255.0 463.3 256.0 465.6 262.0 467.3 262.3 472.6 258.9ZM207.1 215.6 205.0 205.7 203.6 205.2 193.6 202.9 193.1 208.9 193.5 209.5 202.1 215.5 207.0 216.0ZM281.3 214.8 273.2 217.3 270.8 220.3 270.8 222.2 286.6 225.7 287.1 224.9 283.2 215.8ZM343.1 293.1 335.9 290.5 334.0 289.9 337.3 298.5 339.1 299.5 343.7 301.3ZM409.7 330.0 408.3 330.7 411.0 337.6 416.0 341.3 418.8 340.4 419.3 336.7ZM279.4 350.5 277.8 357.4 291.0 357.4 287.3 352.4 281.6 350.4ZM347.2 342.5 347.0 341.9 345.8 340.3 343.3 339.9 335.9 344.0 342.4 348.6ZM137.9 117.9 122.4 106.2 122.0 106.4 123.4 110.8 126.3 118.6ZM452.5 353.1 454.9 353.8 455.9 351.4 454.8 347.2 452.8 347.5 449.4 349.3ZM484.4 248.8 485.4 255.0 486.3 256.0 489.9 254.5 485.3 248.9ZM424.3 290.9 423.9 296.3 433.5 301.3 433.8 301.2 434.0 301.1 425.8 291.1ZM179.5 243.4 182.4 241.8 179.7 235.3 178.0 234.3 176.9 234.0 171.9 236.9 175.7 243.5ZM459.2 158.6 457.9 167.3 458.7 168.8 465.3 168.1 465.2 162.5 463.1 159.2ZM256.3 189.1 257.1 185.2 255.7 184.6 252.4 186.3ZM514.5 307.6 512.3 309.6 514.7 312.9 514.7 312.9 519.3 310.0 518.3 307.8 517.4 307.2 516.4 306.6ZM347.2 211.3 342.7 213.3 349.4 219.4 350.5 219.9 357.5 215.0 351.3 211.8ZM450.4 355.1 452.5 353.1 449.4 349.3 446.8 349.0 447.7 354.2ZM228.5 327.0 222.0 322.2 216.8 323.3 216.2 325.6 218.0 327.3 226.8 331.8 228.5 328.4ZM325.8 240.9 319.7 229.5 319.6 229.4 308.1 232.6 321.4 239.8 325.5 241.3ZM426.2 155.3 425.7 155.2 407.9 156.6 407.5 157.1 414.0 164.6 428.7 169.6 430.3 159.5 430.2 159.1 427.6 155.9ZM502.0 180.7 501.9 179.8 495.4 176.0 492.7 181.9 492.8 182.1 493.7 182.3 500.7 182.1ZM303.2 126.6 298.5 130.2 308.4 131.4ZM393.2 232.9 398.2 231.0 398.2 230.9 386.0 224.1 385.2 225.3 385.7 226.4ZM498.7 161.0 487.7 152.3 491.5 164.3 500.0 165.0ZM350.3 148.2 350.0 149.2 349.0 159.6 351.7 162.1 367.2 155.6ZM295.9 330.5 295.3 334.4 299.2 341.1 303.7 340.6 299.4 331.3 297.8 330.5ZM482.5 294.3 486.5 291.6 485.2 289.2 482.8 290.9ZM253.7 346.1 251.6 351.9 265.2 354.2 255.4 345.1ZM368.6 148.1 373.1 154.6 375.6 155.1 385.7 149.3 378.1 145.1ZM276.9 173.9 276.1 175.4 277.2 184.1 284.5 193.5 294.1 193.8 296.0 192.8 297.7 188.7 287.3 174.6 279.5 172.0ZM462.1 226.3 462.1 226.0 461.6 224.7 458.0 218.7 455.1 219.0 455.2 220.4 457.9 225.3ZM334.2 221.6 338.4 230.6 345.6 234.0 348.4 233.3 351.2 229.9 342.4 221.8ZM510.5 279.7 510.3 275.6 506.8 273.3 505.7 273.4 503.1 274.1 504.3 277.5 509.1 279.5ZM369.0 205.3 372.9 214.2 374.0 214.2 375.4 204.4ZM413.0 213.2 408.1 208.1 398.3 208.6 398.7 209.5 411.3 215.1ZM404.0 197.0 403.2 198.0 404.4 201.3 411.4 200.9 411.3 200.6ZM238.9 347.0 242.2 342.1 240.8 338.8 237.2 336.1 229.8 335.3 233.2 343.7ZM458.0 287.4 456.2 285.2 454.2 287.4 456.8 288.4ZM335.9 344.0 333.4 343.9 333.2 344.2 336.2 350.6 341.6 357.4 349.7 357.4 349.4 356.1 342.4 348.6ZM310.9 132.8 313.4 132.3 311.4 121.2 300.7 121.2 303.2 126.6 308.4 131.4ZM326.1 350.9 325.9 349.4 325.1 346.9 323.2 345.6 311.3 343.9 311.4 346.4 317.0 349.6 322.3 351.6ZM320.3 354.7 320.0 357.4 325.5 357.4 321.8 353.3ZM140.3 143.7 143.1 141.6 135.9 134.9 134.7 134.9 124.5 139.5 124.6 141.5 126.3 143.7ZM206.6 322.1 196.3 321.0 194.3 323.2 194.6 323.9 197.2 328.2 209.4 324.6ZM144.7 274.1 145.2 273.5 140.0 266.2 139.9 266.2 134.7 267.1 137.6 272.5 140.6 274.5ZM366.4 301.4 365.8 303.1 371.3 307.4 375.8 308.5 381.2 305.4 380.0 303.2 378.6 302.3 369.5 300.8ZM269.7 200.3 274.0 207.6 277.7 209.9 285.2 197.7 284.1 194.2 284.1 194.2 270.0 195.6ZM183.4 162.9 180.9 161.9 180.3 162.5 180.0 173.7 183.8 176.9 187.6 176.5ZM471.6 262.5 467.3 262.3 470.8 264.5 471.8 264.5ZM121.9 245.5 125.8 246.1 128.4 243.0 124.3 239.3 119.3 240.7 121.6 245.3ZM230.5 146.1 232.4 137.2 224.0 134.7 216.1 137.5 225.5 146.8ZM375.1 121.4 374.5 133.0 375.5 133.4 380.0 134.3 384.7 131.8 384.8 131.7ZM240.8 338.8 251.2 337.0 246.6 331.3 237.4 335.4 237.2 336.1ZM109.8 269.3 113.9 265.8 106.7 259.4 101.9 262.5 101.9 262.6 105.8 269.7ZM188.2 339.0 186.9 330.7 185.6 330.2 181.9 333.5 186.2 338.8ZM449.1 277.8 452.4 282.8 455.6 283.7 457.9 280.7 457.3 279.5 453.0 277.3ZM112.3 238.0 112.4 237.7 104.7 228.2 99.2 233.6 100.6 236.1 108.7 239.4ZM311.4 346.4 311.3 343.9 311.2 343.7 303.7 340.6 299.2 341.1 298.6 341.7 298.6 345.4 310.4 347.7ZM499.1 317.9 504.8 320.8 508.1 320.2 508.1 320.2 510.2 318.8 508.1 317.1 505.0 316.4 499.2 317.3ZM150.7 214.8 151.0 208.7 144.2 207.9 136.2 209.1 138.1 213.2 150.5 214.9ZM251.0 180.0 256.0 178.7 247.7 167.9 247.2 167.8 246.6 167.9 243.5 170.7 250.8 180.0ZM270.1 309.9 265.0 308.8 262.8 308.9 261.0 315.7 269.4 322.5 271.7 317.8ZM152.5 131.8 149.8 130.6 135.8 129.4 135.9 134.9 143.1 141.6 145.1 142.3 155.6 143.5ZM365.2 348.2 369.7 344.5 366.5 342.2 365.3 341.8 359.6 340.6 360.1 345.2 363.0 347.1ZM449.9 217.9 454.4 218.7 450.2 210.7 447.4 208.7 447.2 211.9ZM154.7 243.9 152.0 240.2 142.3 240.1 141.2 240.7 141.3 243.0 143.5 244.8ZM144.3 259.6 138.6 253.4 135.2 253.5 133.1 257.6 139.2 262.4 140.5 262.0ZM280.6 159.1 295.6 164.6 296.4 162.2 288.8 154.8 281.8 156.9ZM280.9 322.3 278.8 325.3 278.8 325.6 282.6 328.7 286.2 328.5ZM117.6 147.1 120.0 152.8 129.1 155.9 130.2 155.7 130.5 151.3 127.9 148.2ZM177.8 306.0 177.6 306.1 178.3 308.5 179.9 310.0 185.6 310.5 186.7 308.1 184.9 307.4ZM481.1 207.5 482.2 208.6 489.5 208.4 487.6 201.1 481.4 201.2ZM310.4 274.6 303.5 269.5 298.5 276.3 305.6 281.2ZM523.3 186.7 530.6 190.3 537.3 182.8 532.1 179.0 524.5 179.6 524.1 180.1ZM222.3 294.9 218.7 289.4 215.7 289.7 215.1 290.4 218.8 294.6ZM471.8 325.2 475.2 325.8 477.3 323.8 476.3 323.3 472.5 322.8ZM109.0 289.5 115.2 288.8 116.5 288.6 117.0 287.4 113.9 281.4 112.8 280.5 110.1 279.6 105.8 288.0ZM121.1 280.3 118.6 276.5 117.5 277.1 112.8 280.5 113.9 281.4 120.4 283.1ZM479.2 279.7 478.5 285.6 478.7 285.6 482.3 282.7 482.0 282.2ZM382.4 172.5 382.8 165.5 377.3 164.6 373.8 166.4 373.8 169.1ZM420.2 262.6 417.0 259.2 414.8 260.4 420.4 266.5ZM403.5 253.1 406.8 252.2 407.1 249.9 404.9 248.6 403.3 253.0ZM145.7 259.9 148.2 261.3 156.6 263.5 153.9 257.1 147.6 254.7ZM377.7 179.2 385.3 188.5 390.8 185.4 390.6 178.6 387.2 176.0 386.6 175.8ZM133.5 276.0 132.9 273.6 129.7 270.8 128.5 274.6 129.1 275.2ZM178.9 340.2 186.2 338.8 181.9 333.5 175.9 333.2 175.4 335.6ZM157.4 336.5 152.9 328.9 144.7 327.1 143.7 328.3 143.8 330.6 153.0 336.3ZM96.6 315.7 96.8 315.3 89.1 306.7 88.0 306.5 88.0 315.0 90.2 315.7 90.9 315.8ZM355.6 306.9 356.6 304.8 350.2 294.9 343.2 293.1 343.1 293.1 343.7 301.3 350.4 306.9ZM345.4 206.8 349.8 207.0 350.3 206.5 342.9 198.5 341.9 198.0 340.4 203.8ZM192.8 322.2 194.3 323.2 196.3 321.0 196.4 315.5 189.7 314.8 188.5 318.6 190.3 320.4ZM310.1 134.5 313.3 142.2 317.6 147.8 324.2 151.2 326.4 144.9 326.7 140.7 325.1 137.2 313.4 132.3 310.9 132.8ZM132.0 320.2 133.5 320.6 136.2 317.3 134.8 314.7 130.1 314.1ZM495.9 301.1 490.7 297.7 489.6 298.2 489.6 302.7 490.2 303.2 491.4 303.6 495.7 303.7ZM443.4 314.1 433.7 316.1 435.0 317.6 437.8 319.5 443.1 319.4 445.1 316.7ZM394.1 333.7 394.3 333.8 394.3 333.8 396.7 327.0 395.4 326.0 392.0 327.0 391.3 327.8ZM212.4 172.1 214.4 182.0 219.0 185.4 228.1 178.1ZM119.0 333.2 115.9 334.4 114.9 335.1 117.3 337.4 125.0 337.5 121.1 333.6ZM247.1 207.0 247.3 207.1 250.3 208.2 262.8 210.6 265.2 209.5 265.6 208.1 259.2 202.2 252.0 202.3ZM460.1 321.9 455.9 321.1 454.4 324.0 461.4 327.0 463.6 324.9 460.9 322.2ZM495.7 303.7 491.4 303.6 494.1 307.7 496.8 308.6 496.5 304.2ZM214.1 282.5 226.5 283.2 228.7 282.3 218.9 274.6 213.5 273.9 213.5 282.3ZM433.8 313.7 433.0 315.5 433.7 316.1 443.4 314.1 443.1 313.4 441.1 311.7ZM130.7 214.0 128.4 208.7 114.1 210.4ZM319.0 253.9 323.9 253.1 323.1 245.8 312.2 247.3 315.8 253.1ZM380.3 259.6 380.0 259.5 372.1 260.8 374.5 266.4 380.1 264.7 381.0 260.3ZM194.5 345.4 204.4 352.2 207.0 344.4 202.0 337.4 193.9 341.9ZM427.6 155.9 430.2 159.1 444.9 162.8 448.6 159.9 448.9 155.6 431.5 153.0ZM443.9 342.6 443.0 340.2 442.6 340.0 438.8 339.8 437.0 344.0 443.7 347.5 443.8 347.5ZM532.0 303.8 531.1 308.7 533.0 310.0 539.9 312.4 542.0 310.8 534.7 302.9ZM325.2 303.7 318.9 305.0 320.1 307.8 328.4 311.4 329.2 311.1 328.0 307.6ZM190.3 320.4 188.5 318.6 183.8 315.4 183.4 315.3 176.4 319.0 177.1 320.0ZM189.7 314.8 196.4 315.5 196.9 314.2 195.8 311.1 188.2 313.0ZM207.8 311.9 208.0 317.1 215.7 321.8 214.6 314.8 208.5 311.8ZM404.0 184.2 403.8 183.9 392.1 178.7 390.6 178.6 390.8 185.4 399.2 189.1ZM243.5 170.7 233.5 172.6 231.6 177.5 231.5 178.3 234.1 180.8 240.2 184.2 241.4 184.4 250.8 180.0ZM239.5 285.9 243.7 300.4 245.3 300.6 251.8 293.9 249.0 288.1ZM349.1 307.6 350.4 306.9 343.7 301.3 339.1 299.5 339.3 305.6 341.6 307.0ZM442.2 147.7 444.9 142.2 436.1 140.2 435.8 141.7 437.7 146.8ZM350.6 128.7 349.3 124.6 347.4 121.2 334.6 121.2 338.8 124.9 350.5 128.8ZM215.1 290.4 210.7 290.2 210.7 290.7 212.2 297.7 215.1 299.9 218.8 294.6ZM162.5 320.4 166.6 313.9 164.9 311.7 162.1 308.6 158.4 307.9 152.0 314.1 158.1 319.8ZM365.1 312.8 369.2 314.6 371.5 313.9 371.3 307.4 365.8 303.1 356.6 304.8 355.6 306.9 358.1 309.7ZM416.5 184.6 413.2 182.9 404.1 183.5 403.8 183.9 404.0 184.2 415.6 192.9 419.4 189.6ZM228.7 282.3 226.5 283.2 222.4 289.2 227.8 296.3 228.4 296.7 236.1 300.0 230.5 282.8ZM330.3 300.0 336.2 299.2 337.3 298.5 334.0 289.9 333.9 289.9 327.6 288.3 327.1 288.7ZM88.0 240.9 88.0 251.7 94.3 253.1 102.5 253.2 101.4 247.7 95.4 242.3ZM533.0 310.0 535.3 315.8 539.9 312.4ZM126.3 118.6 123.4 110.8 112.6 117.5 121.8 121.9 126.4 121.4ZM515.4 305.1 517.8 303.8 516.5 301.6 513.3 304.0ZM132.4 297.6 129.6 297.5 128.0 299.6 136.2 304.6 136.6 304.5 137.5 303.5ZM505.3 190.0 507.4 185.0 502.0 180.7 500.7 182.1 502.1 188.4 502.7 189.4 504.5 190.1ZM135.2 253.5 138.6 253.4 139.9 252.1 134.0 243.9 131.4 243.8 132.6 251.6ZM473.7 309.4 470.5 310.0 471.0 312.6 480.3 313.9 481.1 312.8 480.8 311.8 480.6 311.7ZM259.3 164.3 258.6 153.9 248.2 153.9 250.3 167.6 254.4 168.2ZM437.0 300.8 434.0 301.1 433.8 301.2 440.0 310.5 440.5 310.8 443.6 306.0ZM220.2 288.9 222.4 289.2 226.5 283.2 214.1 282.5ZM372.3 288.3 375.7 282.1 372.4 280.1 361.5 281.5 368.7 288.5ZM291.0 281.2 291.8 281.4 296.1 275.2 295.9 275.0 287.3 272.9 286.1 274.3ZM310.4 304.4 309.4 305.5 312.3 311.3 314.0 311.4 317.6 309.9 320.1 307.8 318.9 305.0 318.9 304.9 313.2 303.2ZM336.2 350.6 333.2 344.2 325.1 346.9 325.9 349.4ZM487.7 152.3 486.3 150.9 483.0 155.0 488.7 165.6 491.5 164.3ZM498.9 149.5 499.7 149.7 502.5 141.3 494.5 136.5 493.7 137.7ZM329.1 324.1 332.7 325.1 336.9 324.1 336.9 324.0 331.6 320.4 324.9 320.5 324.8 320.7ZM338.4 243.0 338.1 247.1 346.2 250.8 346.3 250.8 344.0 244.0 344.0 244.0ZM513.8 237.9 514.2 233.5 506.0 226.3 505.3 226.2 502.0 227.5 511.5 237.1ZM503.1 274.1 501.2 273.0 497.8 272.7 496.9 276.8 503.1 279.1 504.3 277.5ZM318.6 276.4 322.3 282.8 326.6 286.8 329.3 280.5 328.8 273.5 327.6 273.0 323.4 273.5ZM505.6 292.8 511.9 288.9 511.3 288.5 505.3 287.4 503.5 289.4 503.4 290.6 503.7 291.5 504.5 292.2ZM364.2 323.2 355.8 321.1 354.8 321.6 358.0 324.3 361.7 325.8 363.9 326.0ZM391.1 166.5 387.4 165.1 389.3 171.4 394.6 171.9 395.2 170.5ZM493.8 244.6 494.2 245.5 500.7 249.8 508.5 253.2 512.4 245.3 502.7 242.3 496.3 242.8ZM471.8 246.3 471.7 247.7 475.5 250.0 479.9 246.4 479.7 246.2 477.6 245.1 474.2 245.2ZM175.9 309.5 174.3 309.1 164.9 311.7 166.6 313.9 171.3 315.7 175.4 312.4ZM465.9 298.7 470.9 303.6 471.4 303.7 476.2 303.4 468.0 295.9 467.9 296.0 465.9 298.7ZM271.7 317.8 269.4 322.5 269.4 322.7 270.0 323.3 278.8 325.6 278.8 325.3 276.7 320.9ZM483.4 268.6 486.1 265.2 485.0 264.6 484.1 264.4 479.0 264.6 480.6 267.5 483.0 268.6ZM259.5 221.9 261.0 224.5 262.4 225.7 264.6 227.2 266.2 227.4 268.6 226.0 270.8 222.2 270.8 220.3 264.2 215.2 260.8 214.9ZM496.8 308.6 499.7 311.2 499.8 311.3 502.4 310.7 500.3 306.2 498.4 305.0 496.5 304.2ZM271.0 333.5 272.5 329.5 263.2 326.0ZM248.2 153.9 243.3 152.6 241.7 152.7 241.4 153.1 247.2 167.8 247.7 167.9 250.3 167.6ZM421.5 274.4 421.5 274.3 420.1 270.6 417.0 269.4 407.3 267.0 401.2 273.7 401.3 274.0 415.1 278.8 419.7 278.6ZM336.2 208.9 340.9 212.6 342.7 213.3 347.2 211.3 345.4 206.8 340.4 203.8 335.6 206.4ZM336.2 350.6 325.9 349.4 326.1 350.9 333.3 357.4 341.6 357.4ZM350.7 283.9 355.1 283.6 350.4 278.1 347.0 278.3 345.4 280.1ZM208.5 311.8 214.6 314.8 224.7 315.5 225.4 313.1 220.3 306.1 217.5 304.3 215.9 304.6 208.6 311.2ZM485.2 289.2 485.1 288.5 478.7 285.6 478.5 285.6 477.7 285.6 479.5 290.7 482.8 290.9ZM472.0 291.0 471.3 295.0 477.2 299.2 478.8 293.3ZM512.5 209.8 519.5 212.5 520.2 211.6 514.3 208.2 512.3 209.6ZM303.3 250.3 298.8 250.3 299.8 253.6 304.5 256.2 312.0 256.4 313.0 255.6ZM251.8 293.9 245.3 300.6 254.2 307.0 262.8 308.9 265.0 308.8 255.5 295.7ZM97.5 317.0 96.9 321.5 99.4 324.3 107.1 325.8 107.6 325.0ZM439.7 231.6 447.2 236.3 450.7 234.3 450.5 234.0 449.5 233.2 439.2 227.6ZM462.8 152.1 454.3 147.8 452.1 154.9 459.2 158.6 463.1 159.2 463.6 159.0ZM219.0 185.6 210.9 187.5 211.3 191.3 218.3 192.6 219.5 186.2ZM498.4 305.0 501.2 302.7 500.6 301.2 496.7 300.7 495.9 301.1 495.7 303.7 496.5 304.2ZM239.0 250.5 233.9 249.2 220.6 252.5 220.3 254.8 220.3 254.9 227.5 261.5 238.5 263.2 244.5 261.5 244.4 255.2 242.9 253.4ZM213.5 239.7 213.7 239.3 214.3 234.3 202.4 229.3 201.2 230.9 201.4 231.4ZM320.3 261.2 320.0 261.0 315.6 264.3 324.2 267.5 324.4 264.6ZM478.6 330.4 477.9 333.8 483.8 339.1 483.9 334.7 482.6 333.0 478.9 330.4ZM412.2 202.8 406.8 205.7 408.1 208.1 413.0 213.2 414.5 212.9 414.4 204.7ZM184.9 307.4 186.7 308.1 193.7 307.0 185.5 299.6 183.2 300.2 180.7 301.7ZM463.6 324.9 468.3 326.2 467.6 320.6 465.2 318.1 465.0 318.1 460.9 322.2ZM209.7 177.7 210.6 181.3 213.9 181.9ZM296.3 301.9 303.5 303.8 305.9 303.7 301.6 296.5 300.3 295.5 295.6 300.3ZM138.1 213.2 137.1 216.3 140.4 219.1 149.4 217.8 150.5 214.9ZM216.8 164.1 218.7 163.6 217.6 154.9 215.6 151.5 211.8 150.5 205.9 161.9ZM241.4 153.1 237.2 156.6 244.8 166.6 246.6 167.9 247.2 167.8ZM482.3 282.7 487.1 284.1 484.7 279.7 482.6 281.4 482.0 282.2ZM132.8 215.9 137.1 216.3 138.1 213.2 136.2 209.1 129.8 205.0 128.4 208.7 130.7 214.0ZM231.5 178.3 231.6 177.5 216.8 164.1 205.9 161.9 203.6 163.1 208.1 169.5 212.4 172.1 228.1 178.1ZM114.3 211.9 114.6 216.6 118.3 224.4 124.6 221.8 124.3 219.4 117.3 213.9ZM176.7 142.1 171.3 139.1 167.2 142.8 179.3 151.9 180.1 151.1 177.1 142.6ZM327.3 217.2 324.6 212.5 318.1 208.0 316.9 208.1 311.0 214.3 314.6 219.0 318.7 220.5ZM245.2 218.5 245.4 218.6 261.0 224.5 259.5 221.9 247.3 207.1 247.1 207.0 240.6 206.3 244.9 218.1ZM262.6 173.1 265.2 182.1 277.2 184.1 276.1 175.4ZM276.9 173.9 279.5 172.0 276.2 161.1 260.8 152.6 258.6 153.9 259.3 164.3ZM418.0 137.5 417.2 136.9 406.7 139.4 413.4 142.7 416.5 141.6ZM423.8 315.9 430.4 321.5 435.0 317.6 433.7 316.1 433.0 315.5 425.0 313.0ZM344.7 176.7 344.1 175.4 329.0 169.3 322.5 174.3 326.3 180.4 327.3 181.4 329.8 182.6 345.7 181.0ZM329.3 257.3 329.3 256.4 326.1 253.7 323.9 253.1 319.0 253.9 325.9 259.3 329.0 260.9ZM406.7 139.4 417.2 136.9 415.5 133.7 411.0 130.7 400.3 126.6 406.1 139.3ZM189.2 141.0 190.3 134.2 167.6 128.8 171.3 139.1 176.7 142.1ZM140.8 340.4 140.1 345.2 141.9 347.5 151.0 349.6 144.2 340.1 142.5 338.9ZM495.2 234.0 499.6 230.3 498.8 228.4 492.2 223.4 487.4 229.5 491.2 232.3ZM298.0 220.3 303.8 215.3 303.8 215.1 296.4 210.7 294.7 218.1ZM483.0 268.6 480.6 267.5 478.0 269.2 479.6 271.1ZM404.3 149.7 400.8 143.3 400.3 143.2 388.6 143.7 386.5 149.4 395.3 156.7 399.4 158.3 407.5 157.1 407.9 156.6ZM484.7 211.2 485.1 211.4 490.7 210.1 489.5 208.4 482.2 208.6 482.6 209.4ZM513.8 182.9 524.1 180.1 524.5 179.6 512.4 173.6 507.9 172.5 507.8 176.5ZM118.4 251.0 122.4 250.6 121.9 245.5 121.6 245.3 118.1 245.3 114.6 246.5 116.8 250.2ZM482.8 184.3 479.9 183.9 476.2 185.7 476.7 187.8 478.3 190.0 486.4 195.2 490.1 191.0 490.3 189.8ZM123.8 260.7 125.0 262.0 128.6 263.3 129.3 259.7 123.9 260.5ZM137.0 313.7 134.8 314.7 136.2 317.3 143.4 325.6 144.3 326.3 145.2 320.2 141.9 314.4ZM398.7 209.5 398.3 208.6 394.8 204.2 388.1 205.1 393.5 213.0 398.0 212.0ZM178.2 322.0 192.8 322.2 190.3 320.4 177.1 320.0ZM444.4 327.2 438.7 324.3 433.9 326.2 436.5 331.0 436.7 331.3 444.3 332.5ZM143.3 286.8 146.3 287.4 145.7 284.2 144.4 280.6 140.8 278.1 139.9 279.1 139.7 280.5ZM143.8 354.7 145.4 357.4 156.5 357.4 153.8 352.1ZM179.1 199.4 175.3 200.2 177.7 204.0 193.1 208.9 193.6 202.9 192.1 201.7ZM496.1 234.9 496.3 242.8 502.7 242.3 500.7 236.8ZM291.9 127.0 292.8 127.2 300.6 121.2 289.7 121.2ZM462.3 316.2 465.0 318.1 465.2 318.1 471.0 315.6 470.3 314.0 461.5 310.1ZM341.9 198.0 342.9 198.5 355.7 202.9 357.7 201.8 354.2 195.2 341.3 197.0 341.4 197.1ZM277.7 160.6 294.2 168.9 297.3 167.1 295.6 164.6 280.6 159.1ZM255.6 282.2 251.0 284.5 249.1 288.0 261.1 291.9 261.2 290.7 257.5 282.9ZM244.8 166.6 233.2 161.2 230.3 161.7 229.0 165.5 233.5 172.6 243.5 170.7 246.6 167.9ZM326.2 200.4 317.6 200.0 318.1 208.0 324.6 212.5 336.2 208.9 335.6 206.4 328.6 200.9ZM350.5 128.8 338.8 124.9 335.5 130.9 336.6 132.7 343.9 136.2 350.5 128.9ZM394.6 171.9 396.8 175.4 398.9 175.6 397.8 170.7 395.2 170.5ZM402.8 330.1 405.4 330.1 397.4 318.1 395.2 316.6 392.2 319.3 395.4 326.0 396.7 327.0ZM341.6 328.7 350.3 328.6 350.1 328.0 339.7 319.4 336.9 324.0 336.9 324.1ZM406.0 171.9 403.4 169.7 397.8 170.7 398.9 175.6 404.6 177.1 406.4 175.9 407.2 174.2ZM128.4 208.7 129.8 205.0 128.3 202.6 116.3 207.6 113.7 210.4 114.1 210.4ZM504.6 268.0 505.1 264.8 498.5 264.7 498.5 266.4 498.7 266.7 502.4 267.7ZM506.4 161.8 505.3 156.5 504.5 155.8 501.5 160.0ZM260.9 276.1 254.6 276.0 254.4 279.6 255.6 282.2 257.5 282.9 260.7 283.7 263.6 279.9ZM119.0 340.4 126.9 345.5 129.5 341.9 129.2 339.4 125.0 337.5 117.3 337.4ZM199.7 286.0 203.0 287.3 206.3 286.2 206.1 281.2 205.6 280.8 199.6 279.3ZM151.0 349.6 153.8 351.1 154.4 350.8 151.6 342.7 144.2 340.1ZM489.2 317.0 494.5 318.5 495.1 318.5 492.9 314.8 489.2 313.4 488.7 316.6ZM312.6 328.9 313.1 329.1 318.1 329.4 320.7 327.5 318.4 322.9 312.7 319.4 307.8 321.4ZM346.2 235.8 345.6 234.0 338.4 230.6 334.7 231.5 332.5 233.5 331.8 237.9 344.6 240.1ZM124.3 219.4 131.0 220.5 132.0 217.0 117.3 213.9ZM443.6 306.0 440.5 310.8 441.1 311.7 443.1 313.4 450.5 311.3 450.0 307.6ZM470.3 267.0 468.2 267.2 473.2 271.8 473.8 268.9 472.6 268.0ZM295.6 300.3 300.3 295.5 299.2 292.4 287.1 292.3 289.5 297.0ZM470.8 148.6 472.0 147.1 465.6 140.9 462.4 146.9 463.0 147.4ZM164.3 349.4 154.4 350.8 153.8 351.1 153.8 352.1 156.5 357.4 175.8 357.4 168.4 351.8 164.5 349.5ZM364.6 184.3 363.2 170.3 354.0 164.4 354.0 164.4 349.8 171.5 357.0 179.8ZM419.3 336.7 418.8 340.4 428.9 343.4 427.7 335.1 424.7 334.2ZM183.2 300.2 170.8 295.9 170.8 297.0 179.1 302.2 180.7 301.7ZM427.6 222.8 411.6 221.4 410.7 222.6 421.6 229.7 427.8 224.8 427.9 223.0ZM469.3 321.0 467.6 320.6 468.3 326.2 468.4 326.3 471.8 325.2 472.5 322.8ZM218.3 192.6 211.3 191.3 210.8 191.8 211.1 197.5 223.2 195.9ZM185.6 310.5 186.8 312.6 188.2 313.0 195.8 311.1 195.6 308.8 194.2 307.2 193.7 307.0 186.7 308.1ZM516.4 306.6 517.4 307.2 519.6 304.6 517.8 303.8 515.4 305.1ZM434.1 264.5 427.5 261.6 427.6 266.1 437.6 270.8 438.3 270.8ZM177.1 142.6 180.1 151.1 190.3 150.3ZM398.2 196.8 393.5 199.9 395.2 202.4 399.0 202.6 401.7 198.4ZM497.0 326.0 496.9 326.0 499.0 331.9 499.2 332.2 504.0 329.0 505.1 328.7 504.4 328.1 500.8 326.5ZM472.6 268.0 473.8 268.9 477.3 268.8 475.4 265.4 473.7 265.2ZM362.9 253.1 367.8 256.0 372.0 256.0 369.6 247.7 366.1 244.6ZM332.5 305.9 328.0 307.6 329.2 311.1 331.6 311.7 335.4 309.7 334.6 308.3ZM309.6 352.6 304.9 354.4 305.2 357.4 315.4 357.4 311.7 353.3 310.7 352.5ZM224.5 163.6 217.6 154.9 218.7 163.6ZM421.9 130.5 422.0 127.7 415.8 124.8 411.0 130.7 415.5 133.7ZM387.9 324.8 386.3 321.6 381.5 324.5 381.3 325.3 382.6 327.7 384.3 328.6 386.2 328.0ZM124.6 141.5 124.5 139.5 115.7 130.1 102.3 127.2 108.8 136.6 119.9 141.0ZM265.0 141.8 271.1 140.3 272.2 137.3 266.1 121.3 259.1 121.3 259.0 142.3ZM445.1 276.8 444.0 281.0 446.2 283.5 448.3 285.0 452.4 282.8 449.1 277.8 445.9 276.9ZM401.9 347.4 403.2 347.5 416.4 345.4 416.0 341.3 411.0 337.6 404.6 338.6 400.4 346.5ZM256.3 295.7 261.4 297.1 264.8 294.3 262.1 293.1ZM172.0 169.9 169.3 170.6 168.7 171.7 168.2 176.0 169.4 178.9 175.2 182.0 177.6 182.3 183.8 176.9 180.0 173.7ZM168.6 338.2 172.0 340.0 178.9 340.4 178.9 340.2 175.4 335.6 170.1 334.3ZM447.8 269.0 448.8 263.7 441.1 266.8 441.5 269.4ZM93.4 276.6 93.0 279.9 98.8 278.2 96.7 275.5ZM277.7 209.9 277.9 210.2 290.3 206.2 285.2 197.7ZM309.3 159.6 309.9 158.6 300.0 144.7 299.4 144.4 293.5 144.4 291.3 147.6 292.0 149.8ZM266.7 278.0 265.7 275.4 265.2 274.8 260.9 276.1 263.6 279.9ZM448.9 300.8 450.4 307.5 455.3 308.4 457.9 308.4 455.0 303.3 452.0 300.0ZM314.6 219.0 311.0 214.3 307.1 213.5 303.8 215.1 303.8 215.3 310.2 222.5ZM174.8 244.2 175.1 247.5 178.8 252.6 181.7 253.5 183.9 250.4 175.5 243.7ZM482.6 281.4 481.1 279.4 478.9 279.2 479.2 279.7 482.0 282.2ZM148.2 201.3 149.0 201.8 158.2 198.2 152.6 187.5 145.9 184.4 139.4 186.7ZM260.9 255.5 271.3 257.9 273.7 258.1 273.9 258.1 275.4 253.4 275.2 252.2 266.6 250.8 260.6 254.8ZM329.3 256.4 329.3 257.3 338.4 260.8 342.0 260.7 341.6 260.0 338.1 255.4ZM324.4 264.6 324.2 267.5 327.6 273.0 328.8 273.5 331.4 274.0 332.5 274.0 335.5 270.6 335.2 268.0 329.7 262.8ZM485.6 240.4 480.9 246.9 482.4 247.9 484.4 248.8 485.3 248.9 491.4 248.3 494.2 245.5 493.8 244.6 490.4 242.2 485.7 240.5ZM484.7 279.7 484.6 279.5 481.1 279.4 482.6 281.4ZM259.2 258.5 260.9 255.5 260.6 254.8 258.9 252.6 252.6 248.9 250.9 249.6 249.8 255.3ZM462.2 213.9 464.1 214.6 472.5 212.4 470.6 208.8 458.8 205.6 458.0 207.3ZM353.3 268.1 351.6 266.0 345.6 264.1 344.6 272.1 355.3 275.6ZM128.5 274.6 124.6 272.3 124.1 272.4 124.0 272.6 127.7 276.7 129.1 275.2ZM413.4 142.7 406.7 139.4 406.1 139.3 403.1 142.4 414.9 147.8 418.6 149.3 416.3 145.7ZM135.5 105.3 129.9 102.1 122.4 106.2 137.9 117.9 139.7 118.5 140.2 109.4ZM313.4 132.3 325.1 137.2 326.3 135.0 318.8 121.2 311.4 121.2ZM518.4 307.8 521.2 305.1 519.6 304.6 517.4 307.2 518.3 307.8ZM132.0 320.2 131.3 320.5 131.7 325.6 133.7 326.3 143.7 328.3 144.7 327.1 144.3 326.3 143.4 325.6 133.5 320.6ZM339.1 299.5 337.3 298.5 336.2 299.2 338.1 305.0 339.3 305.6ZM488.2 287.6 494.5 293.1 495.2 292.6 493.6 287.0 492.1 285.3 489.0 285.8ZM260.8 152.6 258.1 142.6 241.4 133.4 239.0 135.2 243.3 152.6 248.2 153.9 258.6 153.9ZM485.0 331.5 486.3 331.5 486.7 329.8 480.4 327.8 479.4 330.0ZM125.6 312.0 123.2 311.5 122.6 311.5 118.8 313.1 120.6 315.7 122.3 317.9 131.3 320.5 132.0 320.2 130.1 314.1ZM362.4 351.1 365.3 352.2 367.9 351.8 365.2 348.2 363.0 347.1ZM468.7 133.0 468.4 130.7 468.1 130.4 452.6 121.0 448.3 121.1 449.8 127.2 465.5 135.3ZM386.0 224.1 386.3 222.2 374.9 214.6 374.0 214.2 372.9 214.2 367.6 214.4 364.7 216.3 365.2 217.2 377.5 225.1 385.2 225.3ZM300.2 135.8 300.3 135.9 313.3 142.2 310.1 134.5 300.2 135.7ZM335.9 290.5 343.1 293.1 343.2 293.1 344.1 285.0 344.0 284.9ZM363.9 326.0 361.7 325.8 360.9 329.7 365.0 333.0 367.2 333.4 368.0 331.0 367.4 329.0ZM408.0 242.3 410.1 245.1 415.9 250.2 420.3 246.7 414.6 239.9 408.8 238.2 408.5 238.5 408.0 239.4ZM423.4 246.6 429.2 250.5 436.5 248.9 434.0 245.5 430.5 243.1 425.1 241.8ZM482.8 184.3 485.9 181.3 484.1 177.9 481.1 175.6 479.2 175.1 476.7 178.5 479.9 183.9ZM179.1 357.4 190.7 357.4 189.6 349.6 188.4 348.5 182.7 347.5ZM461.6 224.7 464.1 220.6 458.0 218.7 458.0 218.7ZM461.1 236.8 461.8 237.1 465.1 232.0 462.6 226.8 462.1 226.3 457.9 225.3 453.7 225.7ZM388.5 290.6 383.6 289.2 386.8 294.5 391.7 295.6 392.2 294.2ZM499.1 200.8 500.1 200.8 501.2 200.0 502.3 197.8 499.3 193.1 495.0 195.1ZM253.5 273.4 255.6 268.5 251.8 264.8 244.5 261.5 238.5 263.2 244.5 269.8ZM266.6 250.8 275.2 252.2 275.6 249.7 269.3 245.2 261.3 247.5ZM308.2 293.5 312.0 298.6 313.2 298.6 316.4 295.0ZM309.9 313.3 312.3 311.3 309.4 305.5 305.9 303.7 303.5 303.8 302.7 311.0ZM136.3 344.4 135.0 351.6 140.0 352.1 141.9 347.5 140.1 345.2ZM520.8 307.9 523.2 305.7 523.0 305.3 521.2 305.1 518.4 307.8ZM220.1 339.0 226.0 350.0 229.3 343.9ZM453.1 172.7 454.0 172.9 457.4 172.5 458.7 168.8 457.9 167.3 448.6 159.9 444.9 162.8 451.0 170.6ZM445.7 354.8 447.7 354.2 446.8 349.0 443.8 347.5 443.7 347.5 439.1 351.5 439.1 351.6ZM510.2 302.7 513.3 304.0 516.5 301.6 515.8 299.4 514.8 297.9ZM101.4 247.7 102.5 253.2 106.7 257.6 113.0 257.2 113.7 251.8 103.4 247.7ZM191.2 131.7 200.6 130.2 203.6 121.3 185.9 121.4ZM108.6 221.1 106.0 220.8 104.4 227.2 104.9 227.7 107.0 228.0 113.1 227.4 113.6 226.1 108.9 221.2ZM511.7 324.5 514.5 322.9 514.4 322.7 511.9 319.1 510.2 318.8 508.1 320.2 510.8 324.0ZM329.6 300.9 325.7 300.7 325.2 303.7 328.0 307.6 332.5 305.9 331.6 302.6ZM99.2 233.6 92.6 229.3 88.0 228.2 88.0 240.9 95.4 242.3 100.6 236.1ZM358.0 328.4 352.5 329.0 363.7 333.5 365.0 333.0 360.9 329.7ZM479.2 175.1 478.0 174.0 470.4 174.7 470.2 175.4 476.7 178.5ZM129.5 341.9 136.3 344.4 140.1 345.2 140.8 340.4 129.5 338.9 129.2 339.4ZM366.3 186.7 366.5 186.8 367.0 186.9 375.8 178.4 368.3 171.4 363.2 170.3 364.6 184.3ZM420.0 352.5 419.0 347.3 416.4 345.4 403.2 347.5 414.4 352.6 418.5 353.0ZM225.6 353.7 220.0 350.9 216.3 352.1 215.0 357.4 229.7 357.4ZM255.8 319.2 250.6 314.5 248.5 314.0 241.1 318.7 242.1 320.5 254.4 323.6 257.5 322.5ZM470.3 165.7 474.4 169.3 474.4 169.3 475.4 168.7 477.0 161.6 475.1 159.4 473.8 159.4ZM306.0 282.0 322.3 282.8 318.6 276.4 313.2 274.5 310.4 274.6 305.6 281.2ZM88.8 149.3 93.2 152.7 107.8 162.4 110.9 161.1 100.2 147.5ZM284.3 249.7 286.3 251.4 296.5 255.8 299.8 253.6 298.8 250.3 298.0 249.4ZM245.8 228.8 241.0 227.6 237.5 228.6 234.3 235.6 240.5 239.5 248.8 241.0 253.1 239.6 255.4 236.6ZM315.5 170.9 322.5 174.3 329.0 169.3 330.1 162.2 329.3 155.9 324.9 152.3 309.9 158.6 309.3 159.6 309.4 161.9ZM496.5 261.7 497.9 263.5 505.7 261.5 505.9 260.2 499.3 258.1ZM331.6 302.6 332.5 305.9 334.6 308.3 337.2 304.8ZM472.7 254.4 476.9 252.5 475.5 250.0 471.7 247.7 469.0 248.3 469.4 250.8ZM124.6 221.8 129.9 228.7 131.2 229.3 136.9 227.0 131.0 220.5 124.3 219.4ZM414.4 352.6 417.4 357.4 419.0 357.4 418.5 353.0ZM223.2 195.9 211.1 197.5 210.9 198.2 225.9 205.8 235.6 203.8 234.7 202.2 232.6 199.9ZM455.0 303.3 457.9 308.4 460.5 308.9 461.3 307.7 461.1 305.4 459.5 304.6ZM265.2 182.1 262.6 173.1 258.9 171.8 259.3 179.5 263.0 182.1ZM188.5 318.6 189.7 314.8 188.2 313.0 186.8 312.6 183.8 315.4ZM115.7 130.1 124.5 139.5 134.7 134.9 118.9 128.7ZM374.5 133.0 368.1 131.0 364.7 132.4 365.6 140.1 376.3 143.0 375.5 133.4ZM201.4 231.4 201.2 230.9 191.9 227.5 188.7 232.1 189.7 235.5 191.1 236.7 197.9 239.0ZM517.3 188.9 523.3 186.7 524.1 180.1 513.8 182.9 515.4 186.9ZM134.7 134.9 135.9 134.9 135.8 129.4 135.5 129.0 130.4 124.2 126.4 121.4 121.8 121.9 118.9 128.7ZM517.2 167.1 517.7 170.7 519.3 171.2 521.6 168.7ZM453.8 293.6 452.9 297.9 453.2 298.9 458.1 300.2 459.4 298.2 458.9 297.6ZM99.1 333.2 102.3 338.8 106.4 339.6 114.1 334.8 107.7 329.2ZM200.6 130.2 212.2 135.6 211.4 121.3 203.6 121.3ZM473.8 279.8 477.3 278.1 476.7 276.0 469.7 275.2ZM119.3 240.7 116.2 239.9 118.1 245.3 121.6 245.3ZM212.2 297.7 210.7 290.7 203.2 291.8 203.2 292.1 207.8 296.2ZM124.1 286.6 127.2 284.1 127.1 283.7 121.8 280.6 121.1 280.3 120.4 283.1 124.0 286.5ZM462.0 291.2 462.2 290.0 458.0 287.4 456.8 288.4 459.7 291.6ZM429.6 121.1 423.9 121.1 424.3 126.9 434.3 131.2 435.3 126.0ZM477.0 161.6 480.4 163.5 486.0 166.2 488.4 166.1 488.7 165.6 483.0 155.0 475.1 159.1 475.1 159.4ZM287.1 292.3 299.2 292.4 299.7 290.6 280.9 283.0 280.2 284.0 281.0 287.8 284.2 290.4ZM508.1 324.4 508.6 327.6 511.9 326.6 511.8 326.2 509.2 324.0ZM406.1 265.0 411.3 259.6 409.5 256.8 406.2 256.0 402.2 261.1ZM383.6 289.2 381.1 285.7 379.3 284.6 380.7 294.6 383.3 295.7 386.8 294.5ZM454.2 287.4 456.2 285.2 456.2 284.7 455.6 283.7 452.4 282.8 448.3 285.0 450.4 288.2ZM104.2 295.4 102.5 296.5 103.8 300.0 112.6 300.5 113.1 300.0ZM324.9 152.3 329.3 155.9 349.0 159.6 350.0 149.2 326.4 144.9 324.2 151.2ZM213.1 136.6 212.2 135.6 200.6 130.2 191.2 131.7 190.5 134.1 207.1 144.0ZM496.7 300.7 498.0 296.2 494.7 294.3 493.7 294.8ZM421.5 177.7 422.4 176.8 414.1 168.6 406.0 171.9 407.2 174.2 409.0 174.8ZM404.6 177.1 398.9 175.6 396.8 175.4 392.1 178.7 403.8 183.9 404.1 183.5ZM388.7 343.4 394.2 346.9 399.8 346.3 397.1 342.1 385.9 334.6 381.7 336.4ZM392.5 247.7 395.6 250.0 399.9 250.7 400.0 248.5 397.3 246.0 394.5 246.5 392.5 247.7ZM233.2 343.7 229.8 335.3 228.5 334.5 220.3 337.4 220.0 338.9 220.1 339.0 229.3 343.9ZM182.2 314.0 183.4 315.3 183.8 315.4 186.8 312.6 185.6 310.5 179.9 310.0ZM378.0 274.6 378.7 276.5 383.5 275.7 382.8 272.6 378.8 271.8ZM429.7 196.8 430.4 201.9 434.5 205.0 442.0 204.4 432.3 196.9 431.0 196.4 429.8 196.8ZM207.0 344.4 204.4 352.2 205.4 353.9 216.3 352.1 220.0 350.9 219.5 350.5ZM156.8 186.8 162.1 183.1 163.0 180.9 150.3 174.2 149.0 174.1 143.4 177.5 145.9 184.4 152.6 187.5ZM280.1 153.5 265.0 141.8 259.0 142.3 258.1 142.6 260.8 152.6 276.2 161.1 277.7 160.6 280.6 159.1 281.8 156.9ZM129.6 257.0 125.3 251.3 122.4 250.6 118.4 251.0 120.4 253.8 123.1 256.0ZM260.8 247.4 258.9 252.6 260.6 254.8 266.6 250.8 261.3 247.5ZM391.7 295.6 395.8 299.7 399.3 299.2 403.2 296.4 396.1 291.4 394.4 290.8 392.2 294.2ZM105.5 274.0 117.5 277.1 118.6 276.5 118.8 275.6 105.3 272.0ZM128.9 268.3 124.8 265.6 119.9 264.5 118.5 266.2 126.4 270.3 128.7 269.7ZM502.3 197.8 508.0 197.1 504.5 190.1 502.7 189.4 498.1 190.4 499.3 193.1ZM486.4 195.2 488.6 200.7 493.6 202.3 499.1 200.8 495.0 195.1 490.1 191.0ZM428.3 281.4 421.5 274.4 419.7 278.6 419.7 278.7 429.1 284.1ZM445.5 207.1 447.1 208.2 458.0 207.3 458.8 205.6 458.3 204.7 448.5 201.9 442.7 203.8 442.5 204.4ZM415.8 195.1 402.4 194.8 404.0 197.0 411.3 200.6ZM490.1 191.0 495.0 195.1 499.3 193.1 498.1 190.4 494.8 189.2 490.3 189.8ZM342.4 221.8 351.2 229.9 356.3 227.6 356.2 226.8 350.5 219.9 349.4 219.4 342.4 221.7ZM436.5 248.9 438.2 249.8 439.9 249.6 441.3 244.5 435.8 243.6 434.0 245.5ZM386.5 149.4 385.7 149.3 375.6 155.1 385.5 162.0 395.3 156.7ZM232.6 199.9 234.7 202.2 242.6 191.7 240.2 184.2 234.1 180.8 230.0 194.0ZM126.9 345.5 128.6 351.6 135.0 351.6 136.3 344.4 129.5 341.9ZM280.8 265.3 273.9 258.1 273.7 258.1 270.9 264.4 273.5 265.6 280.6 265.4ZM175.4 335.6 175.9 333.2 173.6 327.4 166.8 324.9 164.8 329.4 169.3 333.9 170.1 334.3ZM524.8 310.7 527.5 309.9 527.5 309.9 523.2 305.7 520.8 307.9ZM319.3 228.2 319.6 229.4 319.7 229.5 332.5 233.5 334.7 231.5 325.6 226.4 321.2 225.7ZM261.1 291.9 262.1 293.1 264.8 294.3 270.3 295.4 272.6 293.0 270.5 291.2 261.2 290.7ZM350.3 206.5 349.8 207.0 351.3 211.8 357.5 215.0 361.8 215.1 355.3 206.6ZM164.2 338.4 163.7 338.1 159.0 337.9 157.9 342.1 164.3 349.4 164.5 349.5 167.1 341.8ZM490.2 303.2 487.2 308.7 487.8 309.0 490.9 310.1 494.1 307.7 491.4 303.6ZM464.2 287.5 466.7 286.4 457.9 280.7 455.6 283.7 456.2 284.7ZM505.6 170.5 506.6 171.1 510.7 165.5 506.6 161.9 506.4 161.8 501.5 160.0 498.7 161.0 500.0 165.0ZM435.0 139.0 435.1 132.2 434.9 132.0 427.1 135.5 427.6 137.6ZM419.4 189.6 415.6 192.9 415.6 192.9 416.2 194.8 418.8 196.9 429.7 196.8 429.8 196.8 420.3 189.7ZM519.4 202.3 528.6 200.7 528.9 200.5 518.3 192.6 516.8 192.8 511.1 197.9ZM189.1 252.7 191.9 252.4 189.3 248.4 185.2 248.8 184.6 250.0ZM368.3 171.4 373.8 169.1 373.8 166.4 368.8 160.6 354.0 164.4 363.2 170.3ZM492.7 181.9 495.4 176.0 494.1 174.9 489.2 174.5 488.8 176.3ZM368.3 171.4 375.8 178.4 377.7 179.2 386.6 175.8 382.4 172.5 373.8 169.1ZM479.0 212.4 483.4 213.8 484.7 211.2 482.6 209.4ZM194.6 290.1 194.4 292.2 203.2 292.1 203.2 291.8 203.0 290.8 195.2 285.9ZM442.2 243.2 447.2 245.6 450.0 242.2 446.9 237.8 438.2 238.8 438.3 239.0ZM509.2 324.0 511.8 326.2 511.7 324.5 510.8 324.0 509.2 324.0ZM504.4 311.3 505.2 311.8 514.7 312.9 512.3 309.6 509.3 307.2 505.2 309.8ZM436.7 331.4 436.7 331.3 436.5 331.0 426.4 328.3 428.2 334.9 429.5 335.1ZM242.1 320.5 240.9 326.1 246.2 330.3 253.1 328.6 254.4 323.6ZM382.8 272.6 384.4 271.9 384.4 269.3 380.1 264.7 374.5 266.4 373.6 266.9 378.8 271.8ZM445.1 276.8 441.1 273.3 436.5 278.7 436.5 279.4 437.8 280.3 444.0 281.0ZM415.3 327.5 416.4 321.3 407.5 321.0 403.8 321.3 410.5 329.1ZM289.0 258.9 286.4 259.6 285.7 264.9 288.6 265.7 293.8 260.9ZM271.1 140.3 265.0 141.8 280.1 153.5 279.6 145.2ZM295.3 308.8 294.8 309.0 293.8 318.4 302.6 320.0 298.1 310.1ZM349.3 124.6 363.9 122.5 363.6 121.2 347.4 121.2ZM211.8 265.2 208.5 267.1 218.9 270.3ZM498.7 315.4 499.2 317.3 505.0 316.4 499.8 312.5ZM313.2 264.2 313.3 264.1 312.0 256.4 304.5 256.2 306.6 262.6 307.8 263.1ZM237.2 156.6 241.4 153.1 241.7 152.7 230.5 146.1 225.5 146.8 223.3 150.5 234.9 156.7ZM422.7 231.2 421.6 229.7 410.7 222.6 406.9 223.6 405.5 224.7 406.3 227.9 407.0 229.0 416.6 234.0 423.5 233.7ZM399.3 299.2 395.8 299.7 396.0 302.8 398.0 303.7 400.6 304.0 409.7 305.2ZM468.0 295.9 471.3 295.0 472.0 291.0 468.9 286.6 466.7 286.4 464.2 287.5 462.2 290.0 462.0 291.2 467.9 296.0ZM503.5 289.4 505.3 287.4 504.8 283.1 503.3 282.0 497.9 282.2ZM161.1 145.0 167.2 142.8 171.3 139.1 167.6 128.8 164.4 126.1 152.5 131.8 155.6 143.5 155.8 143.6ZM275.4 253.4 273.9 258.1 280.8 265.3 281.9 265.7 285.7 264.9 286.4 259.6ZM285.0 299.4 289.5 297.0 287.1 292.3 284.2 290.4 282.7 299.0ZM497.5 256.6 494.0 255.0 494.0 255.0 493.1 257.0 493.0 259.4 494.8 261.1 496.5 261.7 499.3 258.1ZM151.0 157.6 148.8 163.7 153.6 168.6 155.2 168.9 158.4 165.8 157.4 158.3ZM344.1 285.0 353.3 291.4 353.8 291.3 350.7 283.9 345.4 280.1 343.1 280.5 342.8 282.8 344.0 284.9ZM481.7 258.1 476.7 258.7 484.1 264.4 485.0 264.6 481.9 258.1ZM416.1 307.0 424.8 312.8 428.1 305.3ZM499.8 312.5 505.0 316.4 508.1 317.1 505.2 311.8 504.4 311.3 502.4 310.7 499.8 311.3ZM487.1 284.1 489.0 285.8 492.1 285.3 493.2 284.4 494.1 281.1 491.7 278.0 488.5 275.7 486.1 275.7 484.6 279.5 484.7 279.7ZM386.3 321.6 387.4 319.1 384.3 317.7 382.1 316.8 378.7 319.7 381.5 324.5ZM479.0 264.6 484.1 264.4 476.7 258.7 473.1 258.1 473.1 258.4 476.7 263.8ZM363.3 333.8 355.2 336.9 355.2 337.3 359.6 340.6 365.3 341.8ZM474.9 333.5 472.6 335.4 474.9 340.5 482.8 343.1 483.0 343.0 485.3 341.5 483.8 339.1 477.9 333.8ZM461.9 303.2 464.2 304.0 470.3 304.0 470.9 303.6 465.9 298.7 465.5 298.9ZM342.8 282.8 336.0 283.9 333.9 289.9 334.0 289.9 335.9 290.5 344.0 284.9ZM505.3 190.0 516.8 192.8 518.3 192.6 517.3 188.9 515.4 186.9 507.4 185.0ZM196.2 180.8 196.5 181.2 204.5 181.4 205.3 173.3 197.5 173.8 196.1 176.3ZM426.0 139.9 427.6 137.6 427.1 135.5 421.9 130.5 415.5 133.7 417.2 136.9 418.0 137.5 421.8 139.4ZM327.6 273.0 324.2 267.5 315.6 264.3 313.3 264.1 313.2 264.2 314.0 266.1 323.4 273.5ZM476.3 323.3 472.9 319.9 469.3 321.0 472.5 322.8ZM137.0 313.7 141.9 314.4 143.0 313.4 135.7 305.8 134.3 306.5 133.9 306.9 136.7 313.3ZM434.9 132.0 434.3 131.2 424.3 126.9 422.0 127.7 421.9 130.5 427.1 135.5ZM431.2 279.0 421.5 274.3 421.5 274.4 428.3 281.4ZM462.0 189.4 465.9 190.9 476.7 187.8 476.2 185.7 468.5 181.8 468.0 182.2ZM340.0 214.5 333.7 221.2 334.2 221.6 342.4 221.8 342.4 221.7ZM402.4 194.8 400.8 193.3 399.0 193.8 398.2 196.8 401.7 198.4 403.2 198.0 404.0 197.0ZM459.2 294.2 457.6 292.7 453.5 292.2 453.8 293.6 458.9 297.6 459.5 296.1ZM452.0 300.0 455.0 303.3 459.5 304.6 452.3 299.8ZM483.8 339.1 485.3 341.5 492.0 337.0 487.1 333.2 483.9 334.7ZM513.9 212.6 517.6 215.2 519.5 212.5 512.5 209.8ZM246.6 331.3 246.2 330.3 240.9 326.1 238.9 326.0 236.3 331.0 237.4 335.4ZM454.4 218.7 455.1 219.0 458.0 218.7 458.0 218.7 458.1 215.1 450.2 210.7ZM184.1 163.0 183.4 162.9 187.6 176.5 196.2 180.8 196.1 176.3ZM439.8 134.0 435.1 132.2 435.0 139.0 436.1 140.2 444.9 142.2 447.4 141.2 447.2 140.3ZM490.5 329.1 490.5 329.4 495.6 334.6 499.2 332.2 499.0 331.9 494.8 328.5ZM219.3 270.6 227.7 263.1 227.5 261.5 220.3 254.9 212.0 258.0 211.8 265.2 218.9 270.3ZM291.3 147.6 279.6 145.2 280.1 153.5 281.8 156.9 288.8 154.8 291.8 151.2 292.0 149.8ZM363.3 143.7 368.6 148.1 378.1 145.1 376.3 143.0 365.6 140.1ZM215.1 299.9 216.2 301.4 228.4 296.7 227.8 296.3 222.3 294.9 218.8 294.6ZM151.1 274.0 156.1 271.6 155.2 271.1 146.8 268.0 146.0 273.5ZM266.3 193.7 261.7 185.9 257.1 185.2 256.3 189.1 258.7 193.1ZM397.3 246.0 396.7 241.3 394.1 239.2 391.4 238.9 394.5 246.5ZM187.6 176.5 183.8 176.9 177.6 182.3 180.9 184.1 196.5 185.3 196.5 181.2 196.2 180.8ZM259.5 201.9 259.2 202.2 265.6 208.1 274.0 207.6 269.7 200.3ZM145.7 284.2 146.3 287.4 150.0 289.7 153.9 288.4 150.7 281.1ZM515.1 204.8 516.4 205.0 519.4 202.3 511.1 197.9 510.2 198.0 510.7 199.8ZM430.5 243.1 434.0 245.5 435.8 243.6 438.3 239.0 438.2 238.8 434.7 236.3 431.5 236.6 431.2 237.8ZM482.6 333.0 485.0 331.5 479.4 330.0 478.9 330.4ZM497.9 263.5 498.5 264.7 505.1 264.8 505.7 261.5ZM320.6 339.8 323.2 345.6 325.1 346.9 333.2 344.2 333.4 343.9 330.4 340.6 327.3 339.1 322.1 338.0ZM136.9 279.6 133.8 277.5 131.5 280.6 138.2 286.0 138.7 286.3 138.7 286.3 137.5 280.6ZM303.5 269.5 301.3 267.1 299.9 265.9 294.4 268.6 295.9 275.0 296.1 275.2 298.5 276.3ZM375.3 347.0 375.4 350.0 382.2 357.4 386.7 357.4 387.2 349.8 376.2 346.7ZM179.1 324.4 179.2 325.4 185.6 330.2 186.9 330.7 197.5 331.6 184.7 324.4ZM239.2 223.2 241.0 227.6 245.8 228.8 247.5 226.0 245.4 218.6 245.2 218.5ZM451.3 173.4 445.6 180.7 448.4 184.6 452.2 188.0 454.8 189.4 458.6 189.3 459.2 189.2 458.1 180.9 454.0 172.9 453.1 172.7ZM103.8 287.6 104.2 295.4 113.1 300.0 113.1 299.9 110.7 291.7 109.0 289.5 105.8 288.0ZM293.5 144.4 299.4 144.4 300.3 135.9 300.2 135.8 288.3 133.4 286.8 137.5ZM311.0 246.4 309.0 244.2 302.5 238.7 298.6 238.8 297.7 248.8 298.0 249.4 298.8 250.3 303.3 250.3ZM334.6 308.3 335.4 309.7 339.2 310.4 341.6 307.0 339.3 305.6 338.1 305.0 337.2 304.8ZM428.7 169.6 414.0 164.6 414.1 168.6 422.4 176.8 430.0 175.8 431.3 174.6ZM208.4 271.6 213.5 273.9 218.9 274.6 219.3 270.6 218.9 270.3 208.5 267.1 207.0 267.9ZM155.1 341.4 157.9 342.1 159.0 337.9 157.4 336.5 153.0 336.3 151.3 338.5ZM496.9 318.7 497.7 319.8 503.9 324.3 504.9 321.6 504.8 320.8 499.1 317.9ZM490.2 303.2 489.6 302.7 483.0 300.1 479.5 301.5 479.3 303.7 481.7 306.4 482.8 307.6 487.2 308.7ZM427.5 286.1 422.3 284.6 420.4 289.2 424.3 290.9 425.8 291.1 432.8 288.8ZM461.4 327.0 461.7 327.9 466.3 332.1 467.2 332.1 469.7 327.9 468.4 326.3 468.3 326.2 463.6 324.9ZM431.0 196.4 432.3 196.9 439.3 194.2 438.2 192.2 434.5 189.5 430.6 189.2ZM104.1 202.0 88.0 199.1 88.0 208.2 105.4 204.5ZM365.2 217.2 364.8 222.9 370.6 228.8 377.0 226.1 377.5 225.1ZM274.7 337.8 276.0 338.0 281.8 336.8 280.3 330.8 273.5 328.2 272.5 329.5 271.0 333.5 271.7 335.8ZM235.1 314.2 237.8 306.3 235.9 301.9 220.3 306.1 225.4 313.1ZM167.4 215.1 160.4 211.7 151.1 208.5 151.0 208.7 150.7 214.8 153.6 216.9 162.4 221.6 167.2 219.6ZM315.8 253.1 312.2 247.3 311.0 246.4 303.3 250.3 313.0 255.6 314.7 254.9ZM373.6 266.9 371.6 266.7 371.2 271.1 378.0 274.6 378.8 271.8ZM170.8 295.9 170.8 295.8 166.1 290.0 162.0 289.2 161.9 289.2 162.1 299.0 168.9 299.3 170.8 297.0ZM178.9 340.4 181.2 345.8 182.7 347.5 188.4 348.5 194.5 345.4 193.9 341.9 188.2 339.0 186.2 338.8 178.9 340.2ZM247.3 207.1 259.5 221.9 260.8 214.9 250.3 208.2ZM92.2 321.9 88.2 326.7 92.5 328.5 99.4 324.3 96.9 321.5 94.7 321.2ZM470.3 165.7 465.2 162.5 465.3 168.1 470.1 170.3 474.4 169.3ZM128.5 280.1 127.1 283.7 127.2 284.1 128.1 284.6 138.2 286.0 131.5 280.6 128.6 280.0ZM503.6 151.6 507.5 151.7 503.9 141.5 502.5 141.3 499.7 149.7ZM434.5 205.0 432.7 208.2 440.7 212.3 445.5 207.1 442.5 204.4 442.0 204.4ZM343.9 136.2 348.3 143.7 349.7 145.1 361.5 143.5 350.5 128.9ZM349.4 219.4 342.7 213.3 340.9 212.6 340.0 214.5 342.4 221.7ZM430.4 321.5 432.2 325.3 433.9 326.2 438.7 324.3 437.8 319.5 435.0 317.6ZM298.6 341.7 290.8 337.6 290.7 337.6 294.5 344.6 297.8 346.0 298.6 345.4ZM438.7 324.3 444.4 327.2 449.8 326.6 443.1 319.4 437.8 319.5ZM409.7 305.2 400.6 304.0 406.5 307.4 409.8 305.2ZM241.4 184.4 240.2 184.2 242.6 191.7 249.9 197.2 254.4 192.9 242.7 185.0ZM386.8 294.5 383.3 295.7 385.0 300.4 394.1 304.7 396.0 302.8 395.8 299.7 391.7 295.6ZM525.2 302.0 532.0 303.8 534.7 302.9 527.6 295.1 522.3 298.9ZM140.0 352.1 143.8 354.7 153.8 352.1 153.8 351.1 151.0 349.6 141.9 347.5ZM433.1 148.1 437.7 146.8 435.8 141.7 428.1 141.8ZM495.2 292.6 498.3 291.2 493.6 287.0ZM379.7 335.7 375.1 338.3 376.7 341.7 388.7 343.4 381.7 336.4ZM384.8 126.5 398.3 123.5 397.3 121.1 381.6 121.1ZM116.9 322.3 115.5 325.9 117.4 327.0 126.2 329.0 126.9 326.0 123.5 321.8ZM313.2 188.5 310.8 182.1 303.8 177.6 302.1 178.3 303.0 185.4ZM425.0 324.9 432.2 325.3 430.4 321.5 423.8 315.9 416.7 320.2 416.9 320.5ZM253.1 239.6 248.8 241.0 252.6 248.9 258.9 252.6 260.8 247.4ZM266.7 278.0 271.7 282.1 280.2 284.0 280.9 283.0 280.9 282.7 279.7 280.3 277.5 278.8 265.7 275.4ZM456.1 355.0 462.9 356.5 455.9 351.4 454.9 353.8ZM357.7 201.8 355.7 202.9 355.3 206.6 361.8 215.1 364.7 216.3 367.6 214.4 363.9 204.9 361.5 203.0ZM470.1 170.3 470.4 174.7 478.0 174.0 474.4 169.3 474.4 169.3ZM116.3 207.6 119.0 197.8 113.4 193.6 105.8 196.1 103.7 200.2 104.1 202.0 105.4 204.5 110.7 209.2 113.4 210.5 113.7 210.4ZM191.9 150.6 192.5 148.1 189.2 141.0 176.7 142.1 177.1 142.6 190.3 150.3ZM335.5 130.9 325.8 121.2 318.8 121.2 326.3 135.0 336.6 132.7ZM144.5 233.3 142.3 240.1 152.0 240.2 150.7 235.6 146.7 230.9ZM475.9 213.5 483.4 217.4 484.9 217.9 483.4 213.8 479.0 212.4 475.7 213.4ZM297.4 261.8 293.8 260.9 288.6 265.7 294.4 268.6 299.9 265.9 299.4 263.6ZM427.6 266.1 421.5 269.9 421.5 269.9 429.2 272.6 433.9 272.8 437.6 270.8ZM385.3 188.5 377.7 179.2 375.8 178.4 367.0 186.9 377.3 191.9 384.6 191.4 384.7 191.2ZM448.4 184.6 445.6 180.7 435.4 175.7 431.3 174.6 430.0 175.8 435.0 186.2ZM179.1 324.4 184.7 324.4 194.6 323.9 194.3 323.2 192.8 322.2 178.2 322.0ZM455.3 308.4 458.6 315.7 462.3 316.2 461.5 310.1 460.5 308.9 457.9 308.4ZM302.1 178.3 291.0 174.5 287.3 174.6 297.7 188.7 298.6 188.3 303.0 185.4ZM380.2 315.1 379.6 312.9 375.8 308.5 371.3 307.4 371.5 313.9 372.3 314.1ZM387.4 319.1 392.2 319.3 395.2 316.6 395.0 312.8 394.8 312.7 387.0 309.4 384.1 311.0 384.3 317.7ZM88.0 213.1 88.0 228.2 92.6 229.3 95.9 220.7 92.8 215.9ZM260.3 323.9 260.7 324.0 269.4 322.7 269.4 322.5 261.0 315.7 255.8 319.2 257.5 322.5ZM470.4 151.4 464.4 151.0 463.6 151.8 474.3 158.1ZM430.3 159.5 428.7 169.6 431.3 174.6 435.4 175.7 441.6 170.6 437.1 165.3ZM249.9 197.2 252.0 202.3 259.2 202.2 259.5 201.9 257.2 193.5 254.4 192.9ZM233.5 172.6 229.0 165.5 224.5 163.6 218.7 163.6 216.8 164.1 231.6 177.5ZM453.2 298.9 452.3 299.8 459.5 304.6 461.1 305.4 461.9 303.2 458.1 300.2ZM139.7 280.5 139.9 279.1 136.9 279.6 137.5 280.6ZM182.2 314.0 175.4 312.4 171.3 315.7 176.4 319.0 183.4 315.3Z" fill="#41c873"/>
<path d="M454.4 324.0 453.1 324.6 451.3 327.0 455.3 331.3 461.7 327.9 461.4 327.0ZM93.4 305.4 89.1 306.7 96.8 315.3 102.4 313.5 96.8 306.6ZM123.1 256.0 120.4 253.8 116.0 258.4 122.9 257.0ZM498.0 296.2 500.5 297.1 504.5 292.2 503.7 291.5 498.3 291.2 495.2 292.6 494.5 293.1 494.7 294.3ZM143.4 177.5 149.0 174.1 139.9 163.6 137.8 162.8 132.6 170.7ZM130.5 257.5 133.1 257.6 135.2 253.5 132.6 251.6 127.8 249.6 125.3 251.3 129.6 257.0ZM413.3 305.3 413.3 301.3 407.7 296.6 403.2 296.4 399.3 299.2 409.7 305.2 409.8 305.2ZM458.6 189.3 466.0 198.1 470.3 197.4 472.4 195.4 465.9 190.9 462.0 189.4 459.2 189.2ZM476.4 225.0 484.8 229.1 487.4 229.5 492.2 223.4 491.8 222.1 489.9 220.4 487.6 219.7 478.3 223.3 476.4 224.6ZM401.9 313.4 407.5 321.0 416.4 321.3 416.9 320.5 416.7 320.2 412.1 316.1 405.7 313.6ZM461.8 237.1 462.6 237.5 465.9 238.4 473.1 239.7 474.5 238.9 472.8 232.5 465.1 232.0 461.8 237.1ZM479.8 219.1 483.4 217.4 475.9 213.5ZM286.2 328.5 282.6 328.7 280.3 330.8 281.8 336.8 284.3 337.9 288.6 337.1 287.3 328.7ZM347.0 278.3 343.6 273.0 335.5 270.6 332.5 274.0 343.1 280.5 345.4 280.1ZM279.4 350.5 275.5 347.2 267.8 345.5 274.9 357.4 277.8 357.4ZM417.4 254.0 423.8 257.7 427.9 254.2 428.2 253.2 428.3 252.6 416.4 251.4 417.3 253.8ZM311.4 346.4 310.4 347.7 310.7 352.5 311.7 353.3 317.7 353.1 317.0 349.6ZM404.9 248.6 407.1 249.9 416.0 250.8 415.9 250.2 410.1 245.1 403.8 247.6ZM107.5 164.6 100.6 165.3 92.4 168.3 101.6 175.3 112.8 172.0ZM485.7 148.0 486.5 149.5 498.9 149.5 493.7 137.7 488.3 139.3ZM437.5 259.1 429.3 251.7 428.3 252.6 428.2 253.2 433.6 258.9ZM440.7 212.3 441.9 216.0 447.2 211.9 447.4 208.7 447.1 208.2 445.5 207.1ZM441.6 170.6 435.4 175.7 445.6 180.7 451.3 173.4ZM449.5 233.2 450.5 234.0 447.3 223.2 445.8 222.2 440.5 223.7 440.3 223.9ZM144.7 274.1 140.6 274.5 140.2 277.3 140.8 278.1 144.4 280.6 147.5 278.8ZM406.0 289.4 401.6 281.0 392.7 282.4 392.3 285.4 401.5 289.7ZM322.1 298.3 325.7 300.7 329.6 300.9 330.3 300.0 327.1 288.7 318.6 291.0 319.0 294.4ZM457.1 199.4 467.3 201.8 466.0 198.1 458.6 189.3 454.8 189.4 454.9 196.9ZM108.9 221.2 113.6 226.1 118.4 224.8 118.3 224.4 114.6 216.6ZM312.0 298.6 311.8 298.8 313.2 303.2 318.9 304.9 317.5 300.6 313.2 298.6ZM401.3 274.0 401.2 274.5 401.9 280.3 416.3 286.2 415.1 278.8ZM530.6 190.3 532.4 197.7 535.3 195.4 539.0 184.0 537.3 182.8ZM450.4 288.2 448.3 285.0 446.2 283.5 439.0 287.1 438.1 290.6 438.1 290.7 441.6 291.0 450.7 290.0ZM473.2 271.8 473.2 271.8 468.2 267.2 465.3 266.6 464.9 267.5 464.9 267.6 469.8 272.2ZM272.0 269.7 273.5 265.6 270.9 264.4 267.6 264.1 265.0 264.7 266.2 269.1 267.8 269.7ZM110.1 313.8 113.8 313.0 105.8 305.6 105.2 308.2ZM441.2 269.7 441.5 269.4 441.1 266.8 438.2 261.4 434.1 264.5 438.3 270.8 439.2 271.0ZM363.7 297.3 354.7 291.4 353.8 291.3 353.3 291.4 350.2 294.9 356.6 304.8 365.8 303.1 366.4 301.4ZM406.3 227.9 405.5 224.7 391.1 219.8 386.3 222.2 386.0 224.1 398.2 230.9ZM394.2 346.9 392.7 348.3 395.8 357.4 407.8 357.4 401.9 347.4 400.4 346.5 399.8 346.3ZM197.9 239.0 191.1 236.7 189.7 244.3 190.6 245.3 197.5 248.0 201.5 246.7 198.3 239.3ZM165.1 273.5 167.8 274.5 171.2 273.5 171.9 264.2 163.6 262.7 159.9 266.5 162.6 271.8ZM329.3 280.5 335.0 282.6 331.4 274.0 328.8 273.5ZM471.8 264.5 470.8 264.5 470.3 267.0 472.6 268.0 473.7 265.2ZM450.6 224.4 447.3 223.2 450.5 234.0 450.7 234.3 454.2 234.9 450.9 224.6ZM479.5 290.7 479.3 293.4 482.1 294.8 482.5 294.3 482.8 290.9ZM385.0 300.4 380.0 303.2 381.2 305.4 387.0 309.4 394.8 312.7 394.1 304.7ZM472.5 212.4 464.1 214.6 468.2 221.0 468.5 221.2 476.0 225.0 476.4 225.0 476.4 224.6 472.5 212.4ZM140.4 219.1 144.8 228.5 146.1 229.3 152.8 227.6 149.4 217.8ZM382.6 327.7 377.1 329.2 377.2 331.9 379.7 335.7 381.7 336.4 385.9 334.6 386.4 331.0 384.3 328.6Z" fill="#5fc85f"/>
<path d="M478.0 252.9 479.8 252.8 482.4 247.9 480.9 246.9 479.9 246.4 475.5 250.0 476.9 252.5ZM145.2 320.2 144.3 326.3 144.7 327.1 152.9 328.9 155.0 328.4 156.1 321.1 151.7 320.1ZM492.3 182.4 492.8 182.1 492.7 181.9 488.8 176.3 484.1 177.9 485.9 181.3ZM472.8 232.5 474.6 231.7 475.0 226.5 462.6 226.8 465.1 232.0ZM343.8 316.3 343.8 316.7 351.8 321.1 352.3 321.1 352.1 315.9 348.7 311.8ZM277.7 209.9 274.0 207.6 265.6 208.1 265.2 209.5 273.2 217.3 281.3 214.8 277.9 210.2ZM197.5 331.6 186.9 330.7 188.2 339.0 193.9 341.9 202.0 337.4 202.1 337.0 198.5 331.7 198.4 331.7ZM472.5 257.4 472.7 254.4 469.4 250.8 459.6 250.4 459.4 251.3 463.3 255.0ZM420.8 239.8 424.4 241.0 424.3 239.9 423.8 233.9 423.5 233.7 416.6 234.0 416.8 234.5ZM93.4 265.1 90.4 259.5 88.0 257.9 88.0 265.8ZM270.1 309.9 271.7 317.8 276.7 320.9 280.7 322.0 283.5 319.6 276.0 310.1 274.1 309.4 272.8 309.1ZM481.6 321.6 481.0 322.4 486.8 329.7 490.5 329.4 490.5 329.1 488.2 323.6ZM287.3 328.7 288.6 337.1 290.7 337.6 290.8 337.6 295.3 334.4 295.9 330.5 290.7 328.4ZM428.3 188.5 420.3 189.7 429.8 196.8 431.0 196.4 430.6 189.2ZM173.1 195.0 162.1 183.1 156.8 186.8 174.0 198.2ZM265.5 344.8 267.8 345.5 275.5 347.2 274.6 338.7 263.4 343.4ZM144.8 312.9 146.5 311.9 146.2 310.4 136.6 304.5 136.2 304.6 135.7 305.8 143.0 313.4ZM441.9 249.7 451.9 253.6 453.5 251.9 447.2 245.6ZM235.1 314.2 241.1 318.7 248.5 314.0 237.8 306.3ZM122.7 176.7 127.1 170.3 118.3 161.6 116.2 160.7 110.9 161.1 107.8 162.4 107.5 164.6 112.8 172.0ZM288.6 343.1 294.5 344.6 290.7 337.6 288.6 337.1 284.3 337.9ZM432.4 279.4 431.2 279.0 428.3 281.4 429.1 284.1 433.2 288.5ZM287.6 345.1 288.6 343.1 284.3 337.9 281.8 336.8 276.0 338.0 283.9 345.5ZM442.5 204.4 442.7 203.8 440.6 195.9 439.3 194.2 432.3 196.9 442.0 204.4ZM416.3 286.2 401.9 280.3 401.6 281.0 406.0 289.4 406.7 290.1 415.4 291.5 419.0 288.8 417.7 287.3ZM459.2 189.2 462.0 189.4 468.0 182.2 458.1 180.9ZM378.6 302.3 375.4 296.1 371.4 295.4 369.5 300.8ZM440.0 310.5 432.7 308.2 433.8 313.7 441.1 311.7 440.5 310.8ZM489.7 238.7 490.4 242.2 493.8 244.6 496.3 242.8 496.1 234.9 495.2 234.0 491.2 232.3ZM382.1 316.8 380.2 315.1 372.3 314.1 377.6 319.4 378.7 319.7ZM214.6 314.8 215.7 321.8 216.8 323.3 222.0 322.2 224.8 315.7 224.7 315.5ZM400.6 304.0 398.0 303.7 404.9 308.5 406.5 307.4ZM371.4 295.4 366.8 292.2 363.7 297.3 366.4 301.4 369.5 300.8ZM377.8 242.0 379.9 238.3 371.7 233.0 363.6 232.6 364.2 241.1 366.1 243.6ZM441.1 191.8 452.2 188.0 448.4 184.6 435.0 186.2 434.5 189.5 438.2 192.2ZM203.2 292.1 194.4 292.2 193.9 292.5 200.9 299.2 207.8 296.2ZM327.3 339.1 330.4 340.6 332.0 335.9 326.1 331.4 325.8 333.2ZM214.3 242.2 213.5 239.7 201.4 231.4 197.9 239.0 198.3 239.3ZM322.1 338.0 327.3 339.1 325.8 333.2 320.7 336.0ZM502.5 141.3 503.9 141.5 511.9 141.5 501.7 134.8 500.4 132.2 493.7 133.1 494.5 136.5ZM149.4 217.8 152.8 227.6 159.7 228.9 153.6 216.9 150.7 214.8 150.5 214.9ZM483.4 213.8 484.9 217.9 487.6 219.7 489.9 220.4 490.3 215.8 485.1 211.4 484.7 211.2ZM318.4 322.9 320.7 327.5 325.2 329.8 328.8 329.3 329.1 324.1 324.8 320.7ZM321.8 353.3 325.5 357.4 333.3 357.4 326.1 350.9 322.3 351.6Z" fill="#c4dc36"/>
<path d="M96.9 321.5 97.5 317.0 96.6 315.7 90.9 315.8 94.7 321.2ZM123.9 260.5 129.3 259.7 130.1 259.0 130.5 257.5 129.6 257.0 123.1 256.0 122.9 257.0ZM478.3 190.0 474.5 196.3 478.5 199.9 481.4 201.2 487.6 201.1 488.6 200.7 486.4 195.2ZM365.9 273.0 362.1 262.9 358.2 261.3 351.6 266.0 353.3 268.1ZM99.4 324.3 92.5 328.5 99.1 333.2 107.7 329.2 107.1 325.8ZM432.7 208.2 431.7 209.2 433.9 213.5 441.7 216.6 441.9 216.0 440.7 212.3ZM107.0 228.0 104.9 227.7 104.7 228.2 112.4 237.7 113.6 236.1 108.8 229.8ZM129.8 185.1 136.5 198.1 148.2 201.3 139.4 186.7ZM311.7 353.3 315.4 357.4 320.0 357.4 320.3 354.7 317.7 353.1ZM201.4 257.6 212.0 258.0 220.3 254.9 220.3 254.8 201.5 246.7 197.5 248.0 199.2 256.0ZM123.4 110.8 122.0 106.4 106.5 114.8 112.6 117.5ZM485.1 211.4 490.3 215.8 494.5 213.7 494.5 212.8 490.7 210.1ZM319.0 294.4 318.6 291.0 306.5 284.6 301.6 288.7 301.6 288.9 308.2 293.5 316.4 295.0ZM293.4 319.1 298.6 326.9 303.5 324.5ZM461.8 237.1 461.1 243.6 469.0 248.3 471.7 247.7 471.8 246.3 462.6 237.5ZM323.1 245.8 323.9 253.1 326.1 253.7 332.2 249.2 332.1 249.1 326.3 243.9ZM176.4 319.0 171.3 315.7 166.6 313.9 162.5 320.4 166.8 324.9 173.6 327.4 179.2 325.4 179.1 324.4 178.2 322.0 177.1 320.0ZM327.5 314.0 327.3 314.4 331.4 318.6 334.9 318.1ZM419.7 278.6 415.1 278.8 416.3 286.2 417.7 287.3 420.8 281.2 419.7 278.7ZM311.8 298.8 307.3 298.8 310.4 304.4 313.2 303.2ZM406.5 307.4 404.9 308.5 405.7 313.6 412.1 316.1 413.4 305.4 413.3 305.3 409.8 305.2ZM484.8 128.4 472.4 121.0 469.1 121.0 468.1 130.4 468.4 130.7 482.5 129.7ZM453.5 251.9 459.4 251.3 459.6 250.4 458.6 245.8 450.0 242.2 447.2 245.6 447.2 245.6ZM490.1 266.9 494.1 266.4 492.9 261.8 488.9 261.8 488.7 265.8ZM511.9 326.6 516.6 325.2 514.5 322.9 511.7 324.5 511.8 326.2ZM337.8 254.5 338.1 255.4 341.6 260.0 352.4 253.9 352.3 253.9 346.3 250.8 346.2 250.8ZM476.7 178.5 470.2 175.4 465.4 176.8 468.5 181.8 476.2 185.7 479.9 183.9ZM110.9 161.1 116.2 160.7 113.3 152.9 106.7 147.0 102.5 146.5 100.2 147.5ZM461.9 335.8 473.5 340.7 474.9 340.5 472.6 335.4 467.2 332.1 466.3 332.1ZM182.6 194.5 175.5 184.7 173.1 195.0 174.0 198.2 175.2 200.2 175.3 200.2 179.1 199.4ZM191.9 227.5 186.3 219.2 182.4 217.3 179.3 226.2 179.9 226.9 188.7 232.1ZM112.4 237.7 112.3 238.0 116.2 239.9 119.3 240.7 124.3 239.3 123.3 236.6 117.2 234.2 115.8 234.7 113.6 236.1ZM372.3 314.1 371.5 313.9 369.2 314.6 369.7 315.9 374.5 320.0 377.6 319.4ZM445.8 222.2 447.3 223.2 450.6 224.4 455.2 220.4 455.1 219.0 454.4 218.7 449.9 217.9 445.5 221.0ZM144.9 267.2 146.9 264.6 140.5 262.0 139.2 262.4 139.9 266.2 140.0 266.2ZM268.6 226.0 266.2 227.4 272.8 234.0 282.7 239.9 290.5 236.0 287.4 231.5ZM162.5 238.6 161.5 244.6 168.2 244.0 169.9 242.7 163.2 238.3ZM457.9 225.3 455.2 220.4 450.6 224.4 450.9 224.6 453.7 225.7ZM385.9 286.5 391.8 286.9 392.3 285.4 392.7 282.4 389.0 280.3 378.0 280.5 375.7 282.1 379.3 284.6 381.1 285.7ZM487.6 201.1 489.5 208.4 490.7 210.1 494.5 212.8 499.5 210.4 493.6 202.3 488.6 200.7ZM514.3 208.2 514.2 205.3 510.6 204.7 506.9 206.7 507.5 208.0 512.3 209.6ZM259.2 258.5 259.3 258.5 265.0 264.7 267.6 264.1 271.3 257.9 260.9 255.5ZM388.4 279.4 389.0 280.3 392.7 282.4 401.6 281.0 401.9 280.3 401.2 274.5 387.9 274.4ZM149.0 174.1 150.3 174.2 153.6 168.6 148.8 163.7 139.9 163.6ZM325.8 333.2 326.1 331.4 325.2 329.8 320.7 327.5 318.1 329.4 319.7 335.0 320.7 336.0ZM465.9 238.4 462.6 237.5 471.8 246.3 474.2 245.2ZM440.6 195.9 451.9 197.5 453.9 197.1 441.1 191.8 438.2 192.2 439.3 194.2ZM142.9 335.1 141.9 336.1 142.5 338.9 144.2 340.1 151.6 342.7 155.1 341.4 151.3 338.5ZM416.2 194.8 415.8 195.1 411.3 200.6 411.4 200.9 412.2 202.8 414.4 204.7 418.2 205.9 421.2 204.1 421.3 200.1 420.8 198.7 418.8 196.9ZM506.4 213.6 516.2 217.1 517.6 215.2 513.9 212.6ZM462.6 226.8 475.0 226.5 476.0 225.0 468.5 221.2 462.1 226.0 462.1 226.3ZM331.6 320.4 331.4 318.6 327.3 314.4 326.7 314.6 323.8 316.9 324.9 320.5Z" fill="#8fd44a"/>
<path d="M101.4 191.6 101.5 182.0 97.6 182.3 93.5 186.4ZM97.6 182.3 92.7 179.6 88.0 178.6 88.0 186.3 93.5 186.4ZM122.7 227.5 122.3 231.6 124.0 234.4 131.6 231.2 131.2 229.3 129.9 228.7ZM157.4 158.3 158.4 165.8 168.7 171.7 169.3 170.6 161.3 159.7 157.4 158.3ZM105.8 196.1 113.4 193.6 113.6 186.8 104.4 181.0 101.5 182.0 101.4 191.6ZM180.9 161.9 177.9 159.3 174.7 158.1 161.3 159.7 169.3 170.6 172.0 169.9 180.3 162.5ZM144.8 228.5 136.9 227.0 131.2 229.3 131.6 231.2 133.6 234.2 136.7 236.0 144.5 233.3 146.7 230.9 146.1 229.3ZM141.2 240.7 136.7 236.0 133.6 234.2 131.6 237.2 134.9 243.3 141.3 243.0ZM131.6 237.2 133.6 234.2 131.6 231.2 124.0 234.4 123.8 236.0ZM124.3 239.3 128.4 243.0 131.4 243.8 134.0 243.9 134.9 243.3 131.6 237.2 123.8 236.0 123.3 236.6ZM101.5 182.0 104.4 181.0 101.6 175.3 92.4 168.3 90.6 167.6 92.7 179.6 97.6 182.3ZM158.4 165.8 155.2 168.9 168.2 176.0 168.7 171.7ZM88.0 186.3 88.0 190.9 103.7 200.2 105.8 196.1 101.4 191.6 93.5 186.4Z" fill="#ef9a22"/>
<path d="M458.0 273.0 458.4 278.8 463.7 278.7ZM208.6 311.2 215.9 304.6 203.1 302.0ZM483.8 136.2 488.3 139.3 493.7 137.7 494.5 136.5 493.7 133.1 486.8 128.2 484.8 128.4 482.5 129.7ZM264.6 227.2 262.4 225.7 247.5 226.0 245.8 228.8 255.4 236.6 257.0 236.5ZM494.5 213.7 499.9 218.6 504.7 218.9 506.4 217.6 505.6 213.5 504.9 212.6 499.5 210.4 494.5 212.8ZM485.0 240.2 480.9 239.2 479.9 239.5 479.7 246.2 479.9 246.4 480.9 246.9 485.6 240.4ZM228.5 334.5 226.8 331.8 218.0 327.3 217.4 334.2 220.3 337.4ZM145.8 155.1 148.4 155.9 145.1 142.3 143.1 141.6 140.3 143.7 138.1 151.3ZM444.3 332.5 436.7 331.3 436.7 331.4 442.6 340.0 443.0 340.2 445.0 339.8 445.3 333.3ZM235.6 203.8 225.9 205.8 223.4 210.1 234.1 217.3 236.7 204.4ZM88.0 296.5 88.0 306.5 89.1 306.7 93.4 305.4 91.3 298.5ZM172.4 344.3 168.4 351.8 175.8 357.4 179.1 357.4 182.7 347.5 181.2 345.8ZM193.9 279.5 186.0 277.7 186.2 281.3 188.7 283.4 194.9 285.0ZM457.5 271.7 455.3 272.1 452.7 276.0 453.0 277.3 457.3 279.5 458.4 278.8 458.0 273.0 457.6 271.8ZM484.5 233.0 484.2 233.4 485.7 240.5 490.4 242.2 489.7 238.7ZM93.2 291.2 88.0 290.6 88.0 296.5 91.3 298.5 95.5 298.6 97.0 295.0ZM220.3 337.4 217.4 334.2 212.7 332.0 209.9 338.2 215.5 340.0 220.0 338.9ZM401.0 333.7 404.6 338.6 411.0 337.6 408.3 330.7 405.4 330.1 402.8 330.1ZM386.4 331.0 385.9 334.6 397.1 342.1 394.3 333.8 394.1 333.7ZM366.1 243.6 364.2 241.1 348.4 233.3 345.6 234.0 346.2 235.8 353.9 243.1 355.6 244.4 366.0 244.3ZM170.8 295.8 183.9 293.3 184.1 291.8 177.2 286.0 166.5 289.6 166.1 290.0ZM468.4 130.7 468.7 133.0 474.7 136.9 483.8 136.2 482.5 129.7ZM210.6 330.0 212.7 332.0 217.4 334.2 218.0 327.3 216.2 325.6 211.2 325.5ZM491.7 278.0 496.9 276.8 497.8 272.7 491.7 270.1 488.5 275.4 488.5 275.7ZM373.0 326.5 377.1 329.2 382.6 327.7 381.3 325.3 374.8 322.3 372.1 323.0 371.9 323.7ZM487.4 229.5 484.8 229.1 484.5 233.0 489.7 238.7 491.2 232.3ZM438.6 125.6 435.3 126.0 434.3 131.2 434.9 132.0 435.1 132.2 439.8 134.0 444.8 130.3ZM400.3 126.6 399.9 126.3 398.9 127.1 394.0 136.4 400.3 143.2 400.8 143.3 403.1 142.4 406.1 139.3ZM135.5 105.3 140.2 109.4 148.1 113.1 148.1 104.1ZM367.4 329.0 368.0 331.0 377.2 331.9 377.1 329.2 373.0 326.5 370.5 327.0ZM448.9 130.7 449.8 127.2 448.3 121.1 441.7 121.1 438.6 125.6 444.8 130.3ZM201.6 301.1 198.0 303.1 194.2 307.2 195.6 308.8 207.8 311.9 208.5 311.8 208.6 311.2 203.1 302.0ZM475.0 226.5 474.6 231.7 476.2 232.9 481.6 234.5 484.2 233.4 484.5 233.0 484.8 229.1 476.4 225.0 476.0 225.0ZM371.9 323.7 372.1 323.0 368.5 319.4 365.5 319.5 363.5 319.6 364.7 322.4 365.0 322.6ZM374.8 322.3 374.5 320.0 369.7 315.9 368.5 319.4 372.1 323.0ZM198.5 331.7 202.1 337.0 209.9 338.2 212.7 332.0 210.6 330.0ZM355.3 255.6 360.2 253.1 355.4 245.9 352.1 247.3 352.3 253.9 352.4 253.9ZM481.6 234.5 476.2 232.9 480.9 239.2 485.0 240.2ZM169.3 342.3 172.4 344.3 181.2 345.8 178.9 340.4 172.0 340.0ZM194.6 290.1 188.7 284.1 186.7 291.9 193.9 292.5 194.4 292.2ZM476.2 232.9 474.6 231.7 472.8 232.5 474.5 238.9 479.9 239.5 480.9 239.2ZM464.1 272.9 464.9 267.6 464.9 267.5 461.2 267.4 459.1 271.8 461.3 272.5ZM459.4 251.3 453.5 251.9 451.9 253.6 452.6 259.7 456.7 260.4 463.3 256.0 463.3 255.0ZM427.5 208.7 422.7 210.6 422.1 214.4 424.7 216.5 433.1 214.8 433.9 213.5 431.7 209.2 430.4 208.9ZM207.1 144.0 190.5 134.1 190.3 134.2 189.2 141.0 192.5 148.1 210.0 148.8ZM523.8 313.6 531.4 318.7 533.2 317.3 527.5 309.9 524.8 310.7 523.5 311.5ZM468.1 130.4 469.1 121.0 452.6 121.0ZM517.8 316.7 525.8 322.4 527.0 322.0 531.4 318.7 523.8 313.6ZM447.6 334.0 445.3 333.3 445.0 339.8 446.4 340.2 450.5 338.7ZM456.7 260.4 463.8 263.4 465.6 262.0 463.3 256.0ZM130.3 200.4 121.7 185.5 113.6 186.8 113.4 193.6 119.0 197.8 128.1 202.1ZM373.0 326.5 371.9 323.7 365.0 322.6 370.5 327.0ZM286.6 225.7 287.4 231.5 290.5 236.0 298.6 238.8 302.5 238.7 305.9 232.1 303.1 227.8 287.1 224.9ZM211.8 150.5 210.0 148.8 192.5 148.1 191.9 150.6 199.9 161.7 203.6 163.1 205.9 161.9ZM483.8 136.2 474.7 136.9 485.7 148.0 488.3 139.3ZM484.2 233.4 481.6 234.5 485.0 240.2 485.6 240.4 485.7 240.5ZM155.8 143.6 155.6 143.5 145.1 142.3 148.4 155.9 151.0 157.6 157.4 158.3 157.4 158.3ZM194.3 274.2 190.6 270.7 183.2 269.1 180.5 273.0 186.0 277.7 193.9 279.5 196.3 278.0ZM186.2 281.3 176.8 285.0 177.2 286.0 184.1 291.8 186.4 291.9 186.7 291.9 188.7 284.1 188.7 283.4ZM283.2 215.8 287.1 224.9 303.1 227.8 302.9 226.4 298.0 220.3 294.7 218.1 286.7 215.7ZM394.3 333.8 397.1 342.1 399.8 346.3 400.4 346.5 404.6 338.6 401.0 333.7 394.3 333.8ZM95.5 298.6 91.3 298.5 93.4 305.4 96.8 306.6 97.6 306.3 98.5 300.3ZM189.9 163.2 199.9 161.7 191.9 150.6 190.3 150.3 180.1 151.1 179.3 151.9 177.9 159.3 180.9 161.9 183.4 162.9 184.1 163.0ZM135.5 105.3 148.1 104.1 148.1 92.2 129.9 102.1ZM416.1 307.0 413.4 305.4 412.1 316.1 416.7 320.2 423.8 315.9 425.0 313.0 424.8 312.8ZM171.2 273.5 167.8 274.5 176.8 285.0 186.2 281.3 186.0 277.7 180.5 273.0ZM394.3 333.8 401.0 333.7 402.8 330.1 396.7 327.0ZM234.1 217.3 223.4 210.1 221.9 211.3 221.9 213.5 226.3 220.1 227.2 220.3 234.6 218.5 234.6 218.5ZM517.3 316.4 517.8 316.7 523.8 313.6 523.5 311.5 519.3 310.0 514.7 312.9ZM365.0 322.6 364.7 322.4 364.2 323.2 363.9 326.0 367.4 329.0 370.5 327.0ZM466.7 279.8 467.4 274.6 464.1 272.9 461.3 272.5 464.9 279.0ZM505.3 226.2 506.0 226.3 506.7 224.3 504.7 218.9 499.9 218.6 498.0 221.4ZM464.9 279.0 461.3 272.5 459.1 271.8 457.6 271.8 458.0 273.0 463.7 278.7ZM366.0 244.3 355.6 244.4 355.4 245.9 360.2 253.1 362.9 253.1 366.1 244.6ZM195.8 311.1 196.9 314.2 205.6 318.7 208.0 317.1 207.8 311.9 195.6 308.8ZM416.0 250.8 416.4 251.4 428.3 252.6 429.3 251.7 429.2 250.5 423.4 246.6 420.3 246.7 415.9 250.2ZM479.7 246.2 479.9 239.5 474.5 238.9 473.1 239.7 477.6 245.1ZM194.9 285.0 188.7 283.4 188.7 284.1 194.6 290.1 195.2 285.9 195.1 285.2ZM465.3 266.6 463.8 263.4 456.7 260.4 452.6 259.7 450.2 261.6 461.2 267.4 464.9 267.5Z" fill="#e03a16"/>
<path d="M290.5 236.0 282.7 239.9 283.1 241.8 297.7 248.8 298.6 238.8ZM352.3 253.9 352.1 247.3 347.7 245.1 344.0 244.0 346.3 250.8ZM383.5 275.7 388.4 279.4 387.9 274.4 384.4 271.9 382.8 272.6ZM441.7 216.6 433.9 213.5 433.1 214.8 435.2 218.7 440.5 223.7 445.8 222.2 445.5 221.0ZM140.2 277.3 140.6 274.5 137.6 272.5 132.9 273.6 133.5 276.0 133.7 276.3ZM127.6 294.6 132.2 291.6 131.9 291.1 125.9 288.7 124.4 292.3ZM454.2 234.9 450.7 234.3 447.2 236.3 446.9 237.8 450.0 242.2 458.6 245.8 461.1 243.6 461.8 237.1 461.8 237.1 461.1 236.8ZM304.9 354.4 297.8 349.8 294.9 351.5 298.3 357.4 305.2 357.4ZM113.3 152.9 120.0 152.8 117.6 147.1 113.9 145.4 109.8 144.7 106.7 147.0ZM416.6 234.0 407.0 229.0 408.8 238.2 414.6 239.9 414.6 239.9 416.8 234.5ZM114.1 334.8 106.4 339.6 112.8 343.3 119.0 340.4 117.3 337.4 114.9 335.1ZM320.0 261.0 320.3 261.2 325.9 259.3 319.0 253.9 315.8 253.1 314.7 254.9ZM283.9 345.5 276.0 338.0 274.7 337.8 274.6 338.7 275.5 347.2 279.4 350.5 281.6 350.4ZM328.4 311.4 327.5 314.0 334.9 318.1 339.6 318.6 339.7 318.2 331.6 311.7 329.2 311.1ZM395.7 237.3 395.3 237.4 394.1 239.2 396.7 241.3 400.7 242.9 408.0 242.3 408.0 239.4ZM197.2 328.2 194.6 323.9 184.7 324.4 197.5 331.6 198.4 331.7ZM317.0 349.6 317.7 353.1 320.3 354.7 321.8 353.3 322.3 351.6ZM535.3 195.4 544.6 188.0 539.0 184.0ZM472.9 319.9 472.1 316.3 471.0 315.6 465.2 318.1 467.6 320.6 469.3 321.0ZM118.5 260.5 119.9 264.5 124.8 265.6 125.0 262.0 123.8 260.7ZM140.8 302.2 135.2 296.5 132.4 297.6 137.5 303.5ZM176.8 261.7 179.7 263.3 188.0 259.7 187.8 258.9 185.9 256.8 181.7 253.5 178.8 252.6 175.8 254.1 176.4 261.2ZM303.8 324.5 309.0 329.0 312.6 328.9 307.8 321.4 304.7 321.4ZM470.2 203.4 478.5 199.9 474.5 196.3 472.4 195.4 470.3 197.4ZM141.9 336.1 135.4 333.9 129.3 332.5 129.5 338.9 140.8 340.4 142.5 338.9ZM414.5 212.9 413.0 213.2 411.3 215.1 411.6 221.4 427.6 222.8 426.9 220.5 424.7 216.5 422.1 214.4ZM441.7 216.6 445.5 221.0 449.9 217.9 447.2 211.9 441.9 216.0ZM147.6 303.3 148.0 303.1 146.9 298.0 140.7 295.0 135.7 294.8 135.2 296.5 140.8 302.2ZM131.0 220.5 136.9 227.0 144.8 228.5 140.4 219.1 137.1 216.3 132.8 215.9 132.0 217.0ZM479.0 264.6 476.7 263.8 475.4 265.4 477.3 268.8 478.0 269.2 480.6 267.5ZM367.8 256.0 367.9 256.7 371.1 260.5 372.1 260.8 380.0 259.5 372.0 256.0ZM125.0 337.5 129.2 339.4 129.5 338.9 129.3 332.5 127.3 330.6 121.1 333.6ZM422.6 297.2 419.4 298.7 419.2 299.9 428.3 304.9 428.7 304.9 431.8 302.4ZM521.2 305.1 523.0 305.3 523.1 304.4 515.8 299.4 516.5 301.6 517.8 303.8 519.6 304.6ZM132.0 217.0 132.8 215.9 130.7 214.0 114.1 210.4 113.7 210.4 113.4 210.5 114.3 211.9 117.3 213.9ZM407.5 321.0 401.9 313.4 395.0 312.8 395.2 316.6 397.4 318.1 403.8 321.3ZM130.2 155.7 129.1 155.9 128.8 156.2 127.4 170.3 132.6 170.7 137.8 162.8 136.6 161.3ZM423.8 233.9 431.5 236.6 434.7 236.3 434.3 233.6 430.9 230.7 422.7 231.2 423.5 233.7ZM293.2 318.8 292.9 318.7 287.5 322.0 290.7 328.4 295.9 330.5 297.8 330.5 298.6 326.9 293.4 319.1ZM353.9 243.1 347.7 245.1 352.1 247.3 355.4 245.9 355.6 244.4ZM395.4 252.7 399.2 255.3 401.7 252.4 399.9 250.7 395.6 250.0ZM465.9 190.9 472.4 195.4 474.5 196.3 478.3 190.0 476.7 187.8ZM469.9 203.6 471.2 206.8 481.1 207.5 481.4 201.2 478.5 199.9 470.2 203.4ZM458.8 205.6 470.6 208.8 471.2 206.8 469.9 203.6 467.3 201.8 457.1 199.4 458.3 204.7ZM503.4 290.6 503.5 289.4 497.9 282.2 494.1 281.1 493.2 284.4ZM472.5 212.4 476.4 224.6 478.3 223.3 479.8 219.1 475.9 213.5 475.7 213.4ZM470.2 175.4 470.4 174.7 470.1 170.3 465.3 168.1 458.7 168.8 457.4 172.5 465.4 176.8ZM427.9 223.0 427.8 224.8 430.9 230.7 434.3 233.6 436.4 232.3 431.7 224.1ZM303.8 324.5 303.5 324.5 298.6 326.9 297.8 330.5 299.4 331.3 306.2 333.4 309.0 329.0ZM438.3 259.4 437.5 259.1 433.6 258.9 432.5 258.9 426.6 260.2 427.5 261.6 434.1 264.5 438.2 261.4ZM477.6 245.1 473.1 239.7 465.9 238.4 474.2 245.2ZM278.8 325.6 270.0 323.3 273.5 328.2 280.3 330.8 282.6 328.7Z" fill="#a8d83c"/>
<path d="M136.5 198.1 131.2 200.3 144.2 207.9 151.0 208.7 151.1 208.5 149.0 201.8 148.2 201.3ZM273.5 265.6 272.0 269.7 276.8 270.9 280.6 265.4ZM117.0 287.4 116.5 288.6 121.7 292.4 124.4 292.3 125.9 288.7 124.1 286.6 124.0 286.5ZM195.2 285.9 203.0 290.8 203.0 287.3 199.7 286.0 195.1 285.2ZM497.5 256.6 500.7 249.8 494.2 245.5 491.4 248.3 494.0 255.0ZM399.5 234.3 408.5 238.5 408.8 238.2 407.0 229.0 406.3 227.9 398.2 230.9 398.2 231.0ZM421.5 177.9 421.5 177.7 409.0 174.8 417.1 182.8ZM520.2 211.6 521.6 209.6 516.4 205.0 515.1 204.8 514.2 205.3 514.3 208.2ZM102.5 253.2 94.3 253.1 99.5 261.6 101.9 262.5 106.7 259.4 106.7 257.6ZM175.5 184.7 175.2 182.0 169.4 178.9 163.0 180.9 162.1 183.1 173.1 195.0ZM315.7 190.2 322.2 188.9 323.6 188.2 327.3 181.4 326.3 180.4 310.8 182.1 313.2 188.5ZM214.3 242.2 198.3 239.3 201.5 246.7 220.3 254.8 220.6 252.5 218.0 246.7ZM469.7 275.2 476.7 276.0 477.2 274.5 473.2 271.8 469.8 272.2 468.7 274.6ZM203.0 290.8 203.2 291.8 210.7 290.7 210.7 290.2 206.3 286.2 203.0 287.3ZM125.6 312.0 130.1 314.1 134.8 314.7 137.0 313.7 136.7 313.3 130.0 308.1ZM348.3 143.7 326.7 140.7 326.4 144.9 350.0 149.2 350.3 148.2 349.7 145.1ZM276.2 161.1 279.5 172.0 287.3 174.6 291.0 174.5 294.2 168.9 277.7 160.6ZM431.8 302.4 428.7 304.9 432.7 308.2 440.0 310.5 433.8 301.2 433.5 301.3ZM338.1 305.0 336.2 299.2 330.3 300.0 329.6 300.9 331.6 302.6 337.2 304.8ZM276.8 270.9 280.9 275.6 286.1 274.3 287.3 272.9 281.9 265.7 280.8 265.3 280.6 265.4ZM424.7 216.5 426.9 220.5 435.2 218.7 433.1 214.8Z" fill="#efefef"/>
<path d="M328.8 329.3 334.0 330.7 332.7 325.1 329.1 324.1ZM124.6 141.5 119.9 141.0 113.9 145.4 117.6 147.1 127.9 148.2 126.3 143.7ZM364.3 195.6 366.5 186.8 366.3 186.7 352.0 187.1 351.4 190.0 354.3 194.4ZM202.4 229.3 203.4 227.4 194.6 219.1 193.7 219.0 186.3 219.2 191.9 227.5 201.2 230.9ZM364.7 132.4 350.6 128.7 350.5 128.8 350.5 128.9 361.5 143.5 363.3 143.7 365.6 140.1ZM471.8 325.2 468.4 326.3 469.7 327.9 470.6 328.4 475.8 329.0 475.2 325.8ZM205.6 280.8 205.1 273.0 202.8 272.2 194.3 274.2 196.3 278.0 199.6 279.3ZM329.8 182.6 337.7 189.5 351.4 190.0 352.0 187.1 346.3 181.4 345.7 181.0ZM318.1 329.4 313.1 329.1 313.9 334.2 319.7 335.0ZM281.8 248.1 284.3 249.7 298.0 249.4 297.7 248.8 283.1 241.8 281.9 246.4ZM383.1 211.2 389.4 215.4 387.1 205.1 378.7 202.5 377.4 203.5ZM319.7 335.0 313.9 334.2 312.0 335.3 317.5 339.2 320.6 339.8 322.1 338.0 320.7 336.0ZM500.7 236.8 502.7 242.3 512.4 245.3 513.3 243.6 513.8 237.9 511.5 237.1 510.0 236.7ZM367.9 256.7 365.4 263.5 368.3 264.8 371.1 260.5ZM344.6 240.1 331.8 237.9 331.4 239.1 338.4 243.0 344.0 244.0ZM211.5 221.2 207.0 216.0 202.1 215.5 194.6 219.1 203.4 227.4 211.5 226.1ZM308.5 335.0 311.2 343.7 317.5 339.2 312.0 335.3ZM298.5 276.3 296.1 275.2 291.8 281.4 301.6 288.7 306.5 284.6 306.0 282.0 305.6 281.2ZM365.5 319.5 365.1 312.8 358.1 309.7 359.5 316.5 359.8 317.1 363.5 319.6ZM254.4 279.6 244.4 274.2 242.1 274.8 241.3 277.2 251.0 284.5 255.6 282.2ZM458.9 297.6 459.4 298.2 461.8 298.3 459.5 296.1ZM363.5 319.6 359.8 317.1 355.8 321.1 364.2 323.2 364.7 322.4ZM233.1 277.7 231.1 282.6 239.5 285.9 249.0 288.1 249.1 288.0 251.0 284.5 241.3 277.2ZM432.8 288.8 425.8 291.1 434.0 301.1 437.0 300.8 440.3 296.2 438.1 290.7 438.1 290.6 433.3 288.7ZM313.9 334.2 313.1 329.1 312.6 328.9 309.0 329.0 306.2 333.4 308.5 335.0 312.0 335.3ZM368.5 319.4 369.7 315.9 369.2 314.6 365.1 312.8 365.5 319.5ZM242.1 274.8 228.0 263.5 233.1 277.7 241.3 277.2Z" fill="#efa822"/>
<path d="M170.3 249.2 172.6 247.8 168.4 246.3 165.3 247.0ZM393.4 259.2 393.9 258.6 389.6 253.9 389.3 253.7 383.8 251.5 383.8 251.5 380.9 253.3 380.3 259.6 381.0 260.3 382.8 260.9ZM169.9 242.7 168.2 244.0 168.4 246.3 172.6 247.8 175.1 247.5 174.8 244.2ZM170.3 249.2 165.3 247.0 160.4 246.4 159.1 247.1 159.2 247.9 161.3 251.2 166.4 251.8 170.5 250.1ZM161.9 289.2 157.8 288.1 153.9 288.4 150.0 289.7 151.5 294.0 160.8 299.4 162.1 299.0ZM101.2 351.2 105.0 357.4 124.3 357.4 122.9 356.4 104.2 350.2 102.5 350.2ZM158.4 307.9 162.1 308.6 162.4 307.7 160.8 299.4 151.5 294.0 146.9 298.0 148.0 303.1ZM156.6 263.5 159.9 266.5 163.6 262.7 164.7 259.8 164.5 257.1 161.4 253.2 154.9 255.7 153.9 257.1ZM118.3 224.4 118.4 224.8 122.7 227.5 129.9 228.7 124.6 221.8ZM270.0 195.6 284.1 194.2 284.5 193.5 277.2 184.1 265.2 182.1 263.0 182.1 261.7 185.9 266.3 193.7ZM170.9 256.1 161.4 251.7 161.4 253.2 164.5 257.1 175.6 260.8ZM164.7 259.8 163.6 262.7 171.9 264.2 172.4 263.5ZM113.4 210.5 110.7 209.2 104.7 213.8 108.6 221.1 108.9 221.2 114.6 216.6 114.3 211.9ZM423.9 296.3 422.6 297.2 431.8 302.4 433.5 301.3ZM165.3 247.0 168.4 246.3 168.2 244.0 161.5 244.6 160.4 246.4ZM394.7 268.2 393.4 259.2 382.8 260.9ZM479.2 279.7 478.9 279.2 477.3 278.1 473.8 279.8 472.7 284.0 477.7 285.6 478.5 285.6ZM166.4 251.8 171.0 253.4 174.5 253.7 170.5 250.1ZM161.3 251.2 161.4 251.7 170.9 256.1 171.0 253.4 166.4 251.8ZM174.5 253.7 175.8 254.1 178.8 252.6 175.1 247.5 172.6 247.8 170.3 249.2 170.5 250.1ZM164.5 257.1 164.7 259.8 172.4 263.5 176.8 261.7 176.4 261.2 175.6 260.8ZM106.0 220.8 108.6 221.1 104.7 213.8 96.5 216.1ZM171.0 253.4 170.9 256.1 175.6 260.8 176.4 261.2 175.8 254.1 174.5 253.7ZM394.7 268.2 397.4 271.1 401.2 273.7 407.3 267.0 406.1 265.0 402.2 261.1 400.5 260.0 393.9 258.6 393.4 259.2ZM330.9 196.7 323.6 188.2 322.2 188.9 326.2 200.4 328.6 200.9ZM381.0 260.3 380.1 264.7 384.4 269.3 397.4 271.1 394.7 268.2 382.8 260.9ZM128.8 156.2 118.3 161.6 127.1 170.3 127.4 170.3ZM228.7 282.3 230.5 282.8 231.1 282.6 233.1 277.7 228.0 263.5 227.7 263.1 219.3 270.6 218.9 274.6ZM316.5 198.8 317.6 200.0 326.2 200.4 322.2 188.9 315.7 190.2 315.5 193.6ZM339.6 318.6 339.7 319.4 350.1 328.0 351.8 321.1 343.8 316.7 339.7 318.2ZM105.4 204.5 88.0 208.2 88.0 213.1 92.8 215.9 96.5 216.1 104.7 213.8 110.7 209.2ZM95.7 350.1 97.6 357.4 105.0 357.4 101.2 351.2Z" fill="#dcdc30"/>
<path d="M456.9 334.1 447.6 334.0 450.5 338.7 452.0 339.1 458.4 335.3ZM292.9 318.7 279.7 310.4 276.0 310.1 283.5 319.6 287.5 322.0ZM343.2 293.1 350.2 294.9 353.3 291.4 344.1 285.0ZM145.8 248.3 144.0 251.9 147.6 254.7 153.9 257.1 154.9 255.7 149.0 249.4ZM302.6 320.0 293.8 318.4 293.2 318.8 293.4 319.1 303.5 324.5 303.8 324.5 304.7 321.4ZM371.2 271.1 368.1 274.7 368.8 276.0 372.4 280.1 375.7 282.1 375.7 282.1 378.0 280.5 378.7 276.5 378.0 274.6ZM339.2 310.4 343.8 316.3 348.7 311.8 349.1 307.6 341.6 307.0ZM502.5 299.9 507.8 302.2 507.2 297.4 501.0 297.7ZM107.8 162.4 93.2 152.7 100.6 165.3 107.5 164.6ZM450.9 224.6 454.2 234.9 461.1 236.8 453.7 225.7ZM468.0 182.2 468.5 181.8 465.4 176.8 457.4 172.5 454.0 172.9 458.1 180.9ZM183.0 186.3 180.9 184.1 177.6 182.3 175.2 182.0 175.5 184.7 182.6 194.5 184.2 194.0ZM138.7 286.3 143.3 286.8 139.7 280.5 137.5 280.6ZM260.7 283.7 264.8 285.7 271.7 282.1 266.7 278.0 263.6 279.9ZM486.7 329.8 486.8 329.7 481.0 322.4 478.5 324.0 480.4 327.8ZM434.5 189.5 435.0 186.2 430.0 175.8 422.4 176.8 421.5 177.7 421.5 177.9 428.3 188.5 430.6 189.2ZM190.6 196.4 188.4 194.4 184.2 194.0 182.6 194.5 179.1 199.4 192.1 201.7 191.8 197.9ZM189.1 252.7 185.9 256.8 187.8 258.9 196.7 255.6 191.9 252.4ZM433.9 272.8 429.2 272.6 433.8 279.0 436.5 279.4 436.5 278.7ZM142.3 240.1 144.5 233.3 136.7 236.0 141.2 240.7ZM418.2 205.9 414.4 204.7 414.5 212.9 422.1 214.4 422.7 210.6ZM440.3 223.9 440.5 223.7 435.2 218.7 426.9 220.5 427.6 222.8 427.9 223.0 431.7 224.1 438.1 225.2ZM378.7 276.5 378.0 280.5 389.0 280.3 388.4 279.4 383.5 275.7ZM355.7 202.9 342.9 198.5 350.3 206.5 355.3 206.6ZM466.0 198.1 467.3 201.8 469.9 203.6 470.2 203.4 470.3 197.4ZM438.2 249.8 436.5 248.9 429.2 250.5 429.3 251.7 437.5 259.1 438.3 259.4 442.3 258.6ZM149.0 201.8 151.1 208.5 160.4 211.7 163.9 202.1 163.4 200.1 158.2 198.2ZM334.0 330.7 334.7 331.0 341.3 329.4 341.6 328.7 336.9 324.1 332.7 325.1ZM276.7 320.9 278.8 325.3 280.9 322.3 280.7 322.0ZM106.0 303.8 111.6 305.7 112.6 300.5 103.8 300.0 103.0 301.8 103.0 301.8ZM355.5 276.1 350.4 278.1 355.1 283.6 358.3 284.7 360.3 281.2ZM411.7 255.1 417.3 253.8 416.4 251.4 416.0 250.8 407.1 249.9 406.8 252.2ZM426.4 328.3 436.5 331.0 433.9 326.2 432.2 325.3 425.0 324.9ZM482.4 247.9 479.8 252.8 485.4 255.0 484.4 248.8ZM147.2 264.6 155.2 271.1 156.1 271.6 162.6 271.8 159.9 266.5 156.6 263.5 148.2 261.3ZM375.7 282.1 375.7 282.1 372.3 288.3 377.5 294.0 380.7 294.6 379.3 284.6ZM141.3 243.0 134.9 243.3 134.0 243.9 139.9 252.1 144.0 251.9 145.8 248.3 143.5 244.8ZM450.4 307.5 448.9 300.8 440.3 296.2 437.0 300.8 443.6 306.0 450.0 307.6ZM137.8 162.8 139.9 163.6 148.8 163.7 151.0 157.6 148.4 155.9 145.8 155.1 136.6 161.3ZM298.6 345.4 297.8 346.0 298.0 346.8 309.6 352.6 310.7 352.5 310.4 347.7ZM140.7 119.6 130.4 124.2 135.5 129.0 143.0 121.8 142.8 121.0ZM119.9 141.0 108.8 136.6 109.8 144.7 113.9 145.4ZM424.4 241.0 425.1 241.8 430.5 243.1 431.2 237.8 424.3 239.9ZM389.3 253.7 389.6 253.9 395.4 252.7 395.6 250.0 392.5 247.7ZM400.0 248.5 399.9 250.7 401.7 252.4 403.3 253.0 404.9 248.6 403.8 247.6 403.5 247.5ZM384.8 237.9 391.4 238.9 394.1 239.2 395.3 237.4 393.2 232.9 385.7 226.4ZM129.1 155.9 120.0 152.8 113.3 152.9 116.2 160.7 118.3 161.6 128.8 156.2ZM113.6 236.1 115.8 234.7 108.8 229.8ZM162.2 278.4 165.1 273.5 162.6 271.8 156.1 271.6 151.1 274.0 152.8 279.8 155.4 281.0 160.0 280.0ZM297.7 188.7 296.0 192.8 316.5 198.8 315.5 193.6 298.6 188.3ZM139.9 266.2 139.2 262.4 133.1 257.6 130.5 257.5 130.1 259.0 134.4 267.1 134.7 267.1ZM276.8 270.9 272.0 269.7 267.8 269.7 277.5 278.8 279.7 280.3 280.9 275.6ZM162.1 308.6 164.9 311.7 174.3 309.1 169.6 306.2 162.4 307.7ZM110.7 291.7 120.0 296.3 115.2 288.8 109.0 289.5Z" fill="#6ccc5a"/>
<path d="M94.2 266.0 93.4 265.1 88.0 265.8 88.0 269.4 91.4 270.6 92.2 270.6ZM105.8 269.7 101.9 262.6 96.0 266.6 100.5 270.0 105.2 271.8ZM96.0 266.6 101.9 262.6 101.9 262.5 99.5 261.6 90.4 259.5 93.4 265.1 94.2 266.0ZM155.0 328.4 159.4 329.8 164.8 329.4 166.8 324.9 162.5 320.4 158.1 319.8 156.1 321.1ZM169.3 333.9 164.8 329.4 159.4 329.8 163.7 335.4ZM92.2 270.6 91.4 270.6 93.4 276.6 96.7 275.5 98.5 274.5 93.5 271.0ZM105.2 271.8 100.5 270.0 93.5 271.0 98.5 274.5 103.1 276.0 105.5 275.5 105.5 274.0 105.3 272.0ZM96.0 266.6 94.2 266.0 92.2 270.6 93.5 271.0 100.5 270.0ZM163.7 335.4 159.4 329.8 155.0 328.4 152.9 328.9 157.4 336.5 159.0 337.9 163.7 338.1Z" fill="#e6c72a"/>
<path d="M117.4 327.0 119.0 333.2 121.1 333.6 127.3 330.6 126.2 329.0ZM115.5 325.9 114.8 325.8 115.9 334.4 119.0 333.2 117.4 327.0ZM452.6 259.7 451.9 253.6 441.9 249.7 439.9 249.6 438.2 249.8 442.3 258.6 449.7 261.6 450.0 261.7 450.2 261.6ZM114.8 325.8 109.0 324.4 107.6 325.0 107.1 325.8 107.7 329.2 114.1 334.8 114.9 335.1 115.9 334.4ZM415.4 291.5 406.7 290.1 407.7 296.6 413.3 301.3 419.2 299.9 419.4 298.7Z" fill="#ef8a1e"/>
<polygon points="249.5,357.4 262.5,332.9 278.0,312.2 296.2,291.4 309.2,275.9 314.3,270.7 311.8,281.0 301.4,299.2 288.4,317.3 278.0,338.1 272.9,357.4" fill="#efefef"/>
<polygon points="258.0,305.0 271.0,286.0 280.0,279.0 267.0,302.0" fill="#efefef"/>
<polygon points="301.4,252.5 314.0,243.0 327.3,234.4 341.0,226.0 353.2,218.8 350.6,229.2 339.0,236.0 329.9,244.7 317.0,250.0 306.6,255.1" fill="#efefef"/>
<polygon points="232.7,186.1 241.0,187.0 249.6,184.0 248.0,202.0 249.6,220.0 239.0,215.7 235.0,210.0 232.7,203.0" fill="#efefef"/>
<polygon points="382.8,179.8 394.0,181.0 406.0,177.7 418.8,190.4 411.0,192.0 401.9,196.7 387.0,190.4" fill="#efefef"/>
<polygon points="192.5,236.9 206.0,239.0 220.0,234.8 222.0,249.6 211.0,250.0 203.0,253.8 192.5,249.6" fill="#efefef"/>
<polygon points="346.9,152.0 356.0,153.0 363.8,150.0 362.0,160.0 363.8,169.2 349.0,171.3" fill="#efefef"/>
<polygon points="262.0,287.6 279.0,279.0 270.7,304.6 258.0,313.0" fill="#efefef"/>
</g>
<polygon points="88.0,124.8 148.1,92.2 148.1,121.4 494.8,121.0 501.7,134.8 515.6,144.0 516.8,158.0 525.0,174.0 544.6,188.0 527.0,202.0 515.6,218.0 513.3,243.6 506.4,257.5 504.0,271.4 518.0,280.7 527.0,294.5 542.0,310.8 527.0,322.0 504.0,329.0 483.0,343.0 462.4,357.4 88.0,357.4" fill="none" stroke="#26894a" stroke-width="1"/>
<text x="13.0" y="20.0" font-size="11.5" fill="#555" >London</text>
<text x="196.0" y="30.0" font-size="12.5" fill="#555" >Buffalo</text>
<text x="286.0" y="3.0" font-size="12" fill="#666" >Rochester</text>
<text x="439.0" y="24.0" font-size="11" fill="#a9a9a9" letter-spacing="1">NEW YORK</text>
<text x="599.0" y="55.0" font-size="12.5" fill="#555" >Albany</text>
<text x="0.0" y="176.0" font-size="12.5" fill="#555" >land</text>
<text x="21.0" y="101.0" font-size="9" fill="#999" font-style="italic">Lake</text>
<text x="24.0" y="113.0" font-size="9" fill="#999" font-style="italic">Erie</text>
<text x="250.0" y="239.0" font-size="11.5" fill="#bdbdbd" font-weight="bold" stroke="#e6e6e6" stroke-width="2" paint-order="stroke">PENNSYLVANIA</text>
<text x="97.0" y="286.0" font-size="12.5" fill="#6e6e6e" stroke="#dcdcdc" stroke-width="2.2" paint-order="stroke">Pittsburgh</text>
<text x="343.0" y="306.0" font-size="12.5" fill="#6e6e6e" stroke="#dcdcdc" stroke-width="2.2" paint-order="stroke">Harrisburg</text>
<text x="517.0" y="309.0" font-size="12.5" fill="#6e6e6e" stroke="#dcdcdc" stroke-width="2.2" paint-order="stroke">Trenton</text>
<text x="568.0" y="259.0" font-size="13" fill="#555" >New York</text>
<text x="469.0" y="337.0" font-size="13" fill="#6e6e6e" stroke="#dcdcdc" stroke-width="2.2" paint-order="stroke">Philadelphia</text>
<text x="526.0" y="369.0" font-size="10" fill="#aaa" letter-spacing="1">NEW</text>
<text x="521.0" y="381.0" font-size="10" fill="#aaa" letter-spacing="1">JERSEY</text>
<text x="463.0" y="418.0" font-size="12.5" fill="#555" >Dover</text>
<text x="326.0" y="445.0" font-size="13" fill="#555" >Washington</text>
<text x="406.0" y="450.0" font-size="10" fill="#aaa" letter-spacing="1">MARYLAND</text>
<text x="65.0" y="462.0" font-size="10" fill="#aaa" letter-spacing="1">WEST</text>
<rect x="591" y="385" width="35" height="68" fill="#fff" stroke="#e8eaea" stroke-width="2"/>
<line x1="593" y1="419.5" x2="624" y2="419.5" stroke="#e6e6e6"/>
<path d="M602 403 H615 M608.5 396.5 V409.5" stroke="#1e2b30" stroke-width="2.6"/>
<path d="M602 436 H615" stroke="#1e2b30" stroke-width="2.6"/>
<circle cx="13" cy="445" r="7.5" fill="#646e6f"/>
<rect x="12" y="443" width="2.2" height="6.5" fill="#fff"/><circle cx="13.099999999999909" cy="440.20000000000005" r="1.3" fill="#fff"/>
</svg>
  <div class="abs" style="left:655px;top:51px;font-size:15px;color:#16191f;white-space:nowrap;letter-spacing:0.4px">Paid Written R...</div>
  <div class="abs" style="left:656px;top:80px;width:12px;height:428px;background:linear-gradient(#e0400e,#e8781a 22%,#eea41e 38%,#e6c828 50%,#d2dc2c 60%,#8ed040 76%,#45c66a);border:1px solid #cfcfcf"></div>
  <div class="abs lgl" style="top:81px">200%</div>
  <div class="abs lgl" style="top:285px">100%</div>
  <div class="abs lgl" style="top:490px">0%</div>
</div>
<!--/MAP-->
<!--TBL-->
<div class="card" style="left:335px;top:904px;width:1004px;height:176px">
  <div class="abs ttl" style="left:0;top:20px;width:1004px">Agency Profitability</div>
  <div class="abs" style="left:11px;top:50px;width:982px;height:125px;overflow:hidden"><div class="abs" style="left:0;top:0;width:1100px;height:200px">
    <div class="abs" style="left:0;top:26.5px;width:1100px;height:27.5px;background:#f4f4f4;border-top:1px solid #dedede"></div>
    <div class="abs" style="left:0;top:54.0px;width:1100px;height:27.5px;background:#fff;border-top:1px solid #dedede"></div>
    <div class="abs" style="left:0;top:81.5px;width:1100px;height:27.5px;background:#f4f4f4;border-top:1px solid #dedede"></div>
    <div class="abs" style="left:0;top:109.0px;width:1100px;height:27.5px;background:#fff;border-top:1px solid #dedede"></div>
    <div class="abs" style="left:0;top:0;width:1100px;height:1px;background:#dedede"></div>
    <div class="abs" style="left:0;top:0;width:1px;height:200px;background:#dedede"></div>
    <div class="abs" style="left:324px;top:0;width:1px;height:200px;background:#dedede"></div>
    <div class="abs" style="left:430px;top:0;width:1px;height:200px;background:#dedede"></div>
    <div class="abs" style="left:558px;top:0;width:1px;height:200px;background:#dedede"></div>
    <div class="abs" style="left:705px;top:0;width:1px;height:200px;background:#dedede"></div>
    <div class="abs" style="left:810px;top:0;width:1px;height:200px;background:#dedede"></div>
    <div class="abs" style="left:936px;top:0;width:1px;height:200px;background:#dedede"></div>
    <div class="abs th" style="left:10px;top:5px">Agency Name</div>
    <div class="abs th" style="right:680px;top:5px;text-align:right">Loss Paid</div>
    <div class="abs th" style="right:552px;top:5px;text-align:right">Premium Written</div>
    <div class="abs th" style="right:405px;top:5px;text-align:right">Paid / Written Ratio</div>
    <div class="abs th" style="right:300px;top:5px;text-align:right">Loss Incurred</div>
    <div class="abs th" style="right:174px;top:5px;text-align:right">Premium Earned</div>
    <div class="abs th" style="left:948px;top:5px">Incurred / Earned Ratio</div>
    <div class="abs td nm" style="left:10px;top:32.0px">Crona Insurance LLC (10610)</div>
    <div class="abs td" style="right:680px;top:32.0px;text-align:right">$865,839</div>
    <div class="abs td" style="right:552px;top:32.0px;text-align:right">$14,811</div>
    <div class="abs td" style="right:405px;top:32.0px;text-align:right">5,846.0%</div>
    <div class="abs td" style="right:300px;top:32.0px;text-align:right">$840,839</div>
    <div class="abs td" style="right:174px;top:32.0px;text-align:right">$16,980</div>
    <div class="abs td nm" style="left:10px;top:59.5px">Block Insurance LLC (10688)</div>
    <div class="abs td" style="right:680px;top:59.5px;text-align:right">$207,407</div>
    <div class="abs td" style="right:552px;top:59.5px;text-align:right">$19,529</div>
    <div class="abs td" style="right:405px;top:59.5px;text-align:right">1,062.1%</div>
    <div class="abs td" style="right:300px;top:59.5px;text-align:right">$207,407</div>
    <div class="abs td" style="right:174px;top:59.5px;text-align:right">$17,264</div>
    <div class="abs td nm" style="left:10px;top:87.0px">Kshlerin Insurance LLC (10781)</div>
    <div class="abs td" style="right:680px;top:87.0px;text-align:right">$212,936</div>
    <div class="abs td" style="right:552px;top:87.0px;text-align:right">$24,924</div>
    <div class="abs td" style="right:405px;top:87.0px;text-align:right">854.4%</div>
    <div class="abs td" style="right:300px;top:87.0px;text-align:right">$212,936</div>
    <div class="abs td" style="right:174px;top:87.0px;text-align:right">$22,259</div>
    <div class="abs td nm" style="left:10px;top:114.5px">O'Conner Insurance LLC (10784)</div>
    <div class="abs td" style="right:680px;top:114.5px;text-align:right">$33,777</div>
    <div class="abs td" style="right:552px;top:114.5px;text-align:right">$8,931</div>
    <div class="abs td" style="right:405px;top:114.5px;text-align:right">378.2%</div>
    <div class="abs td" style="right:300px;top:114.5px;text-align:right">$33,777</div>
    <div class="abs td" style="right:174px;top:114.5px;text-align:right">$6,486</div>
    <div class="abs" style="left:0;top:0;width:1100px;height:1px"></div>
  </div></div>
</div>
<!--/TBL-->
<div id="btm" class="abs" style="left:326px;top:1079px;width:1594px;height:1px;background:#fbfbfb;z-index:5"></div>
<!--CUR--><svg class="abs" style="left:808px;top:398px;z-index:10" width="20" height="24" viewBox="808 398 20 24"><path d="M813.5 401.5 L813.8 415 L817 412.3 L819.3 418 L821.6 417 L819.4 411.9 L823 411.8 Z" fill="#1b2326" stroke="#fff" stroke-width="1" stroke-linejoin="round"/></svg>
<!--/CUR-->
</body></html>
